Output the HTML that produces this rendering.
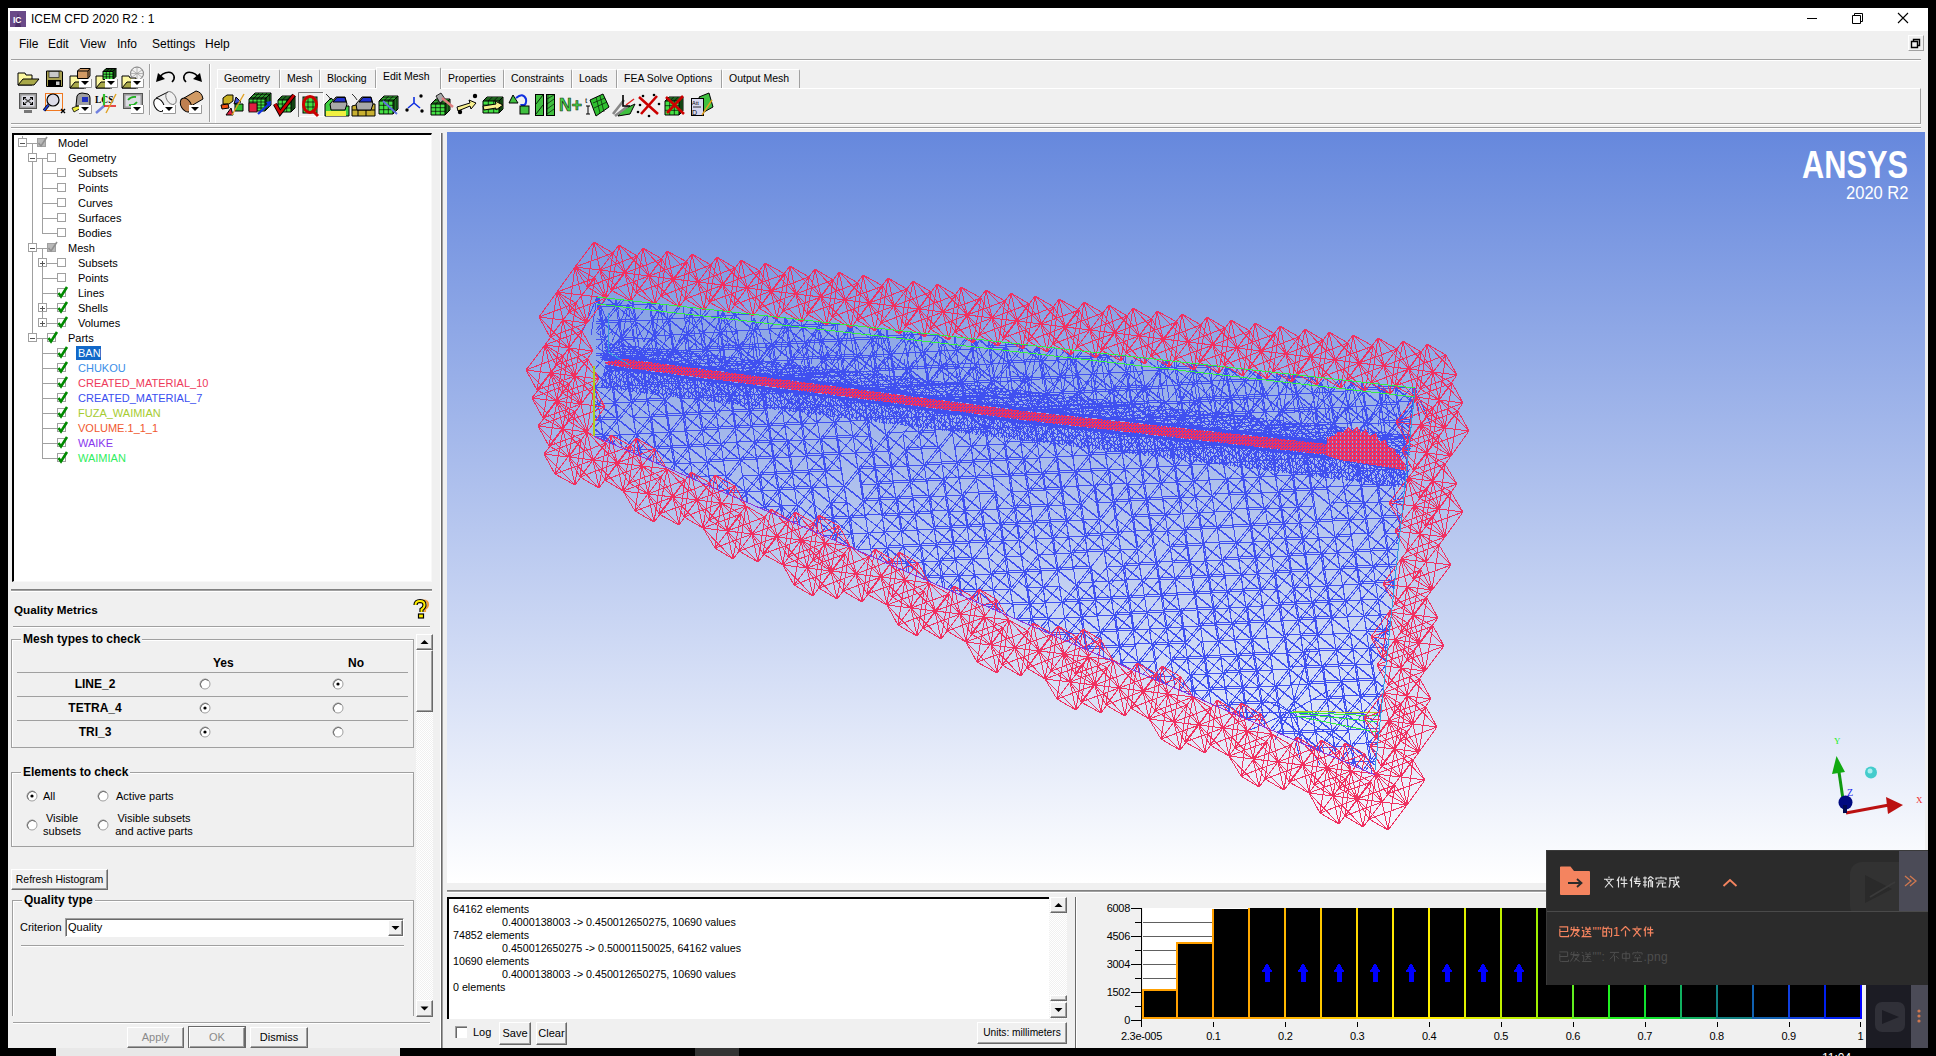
<!DOCTYPE html><html><head><meta charset="utf-8"><style>
*{margin:0;padding:0;box-sizing:border-box}
html,body{width:1936px;height:1056px;overflow:hidden;background:#000}
body{position:relative;font-family:"Liberation Sans",sans-serif;font-size:11px;color:#000}
div,span,svg{position:absolute;display:block}
.t{white-space:nowrap;line-height:13px}
</style></head><body><div style="left:8px;top:8px;width:1920px;height:1040px;background:#f0f0f0"></div><div style="left:8px;top:8px;width:1920px;height:23px;background:#fff"></div><svg style="left:10px;top:11px" width="16" height="16"><rect width="16" height="16" fill="#6a4a88"/><path d="M5 16L8 2L11 16Z" fill="#4a2e66"/><text x="3" y="12" font-family="Liberation Sans" font-weight="bold" font-size="8.5" fill="#fff">IC</text></svg><span class="t" style="left:31px;top:12px;font-size:12px;line-height:14px">ICEM CFD 2020 R2 : 1</span><div style="left:1807px;top:18px;width:10px;height:1px;background:#000"></div><svg style="left:1850px;top:12px" width="14" height="12"><path d="M2.5 3.5h8v8h-8z M4.5 3.5v-2h8v8h-2" fill="none" stroke="#000" stroke-width="1"/></svg><svg style="left:1897px;top:12px" width="12" height="12"><path d="M1 1L11 11M11 1L1 11" stroke="#000" stroke-width="1.1"/></svg><span class="t" style="left:19px;top:37px;font-size:12px;line-height:14px">File</span><span class="t" style="left:48px;top:37px;font-size:12px;line-height:14px">Edit</span><span class="t" style="left:80px;top:37px;font-size:12px;line-height:14px">View</span><span class="t" style="left:117px;top:37px;font-size:12px;line-height:14px">Info</span><span class="t" style="left:152px;top:37px;font-size:12px;line-height:14px">Settings</span><span class="t" style="left:205px;top:37px;font-size:12px;line-height:14px">Help</span><div style="left:1908px;top:35px;width:16px;height:16px;border-right:1px solid #a0a0a0;border-bottom:1px solid #a0a0a0;border-top:1px solid #fff;border-left:1px solid #fff"></div><svg style="left:1910px;top:37px" width="12" height="12"><path d="M1.5 4.5h6v6h-6z M3.5 4.5v-2h6v6h-2" fill="none" stroke="#000" stroke-width="1.4"/></svg><div style="left:11px;top:59px;width:1910px;height:1px;background:#a0a0a0"></div><div style="left:11px;top:60px;width:1910px;height:1px;background:#fff"></div><div style="left:215px;top:88px;width:1706px;height:36px;border-top:1px solid #fff;border-left:1px solid #fff;border-right:1px solid #a0a0a0;border-bottom:1px solid #a0a0a0"></div><div style="left:11px;top:123px;width:1910px;height:1px;background:#a0a0a0"></div><div style="left:11px;top:124px;width:1910px;height:1px;background:#fff"></div><div style="left:11px;top:127px;width:1910px;height:1px;background:#a0a0a0"></div><div style="left:11px;top:128px;width:1910px;height:1px;background:#fff"></div><div style="left:149px;top:64px;width:1px;height:24px;background:#a0a0a0"></div><div style="left:150px;top:64px;width:1px;height:24px;background:#fff"></div><div style="left:149px;top:90px;width:1px;height:25px;background:#a0a0a0"></div><div style="left:150px;top:90px;width:1px;height:25px;background:#fff"></div><div style="left:209px;top:64px;width:1px;height:58px;background:#a0a0a0"></div><div style="left:210px;top:64px;width:1px;height:58px;background:#fff"></div><div style="left:217px;top:69px;width:63px;height:19px;background:#f0f0f0;border-top:1px solid #fff;border-left:1px solid #fff;border-right:1px solid #a0a0a0;border-top-right-radius:2px"></div><span class="t" style="left:224px;top:72px;font-size:10.5px">Geometry</span><div style="left:280px;top:69px;width:40px;height:19px;background:#f0f0f0;border-top:1px solid #fff;border-left:1px solid #fff;border-right:1px solid #a0a0a0;border-top-right-radius:2px"></div><span class="t" style="left:287px;top:72px;font-size:10.5px">Mesh</span><div style="left:320px;top:69px;width:56px;height:19px;background:#f0f0f0;border-top:1px solid #fff;border-left:1px solid #fff;border-right:1px solid #a0a0a0;border-top-right-radius:2px"></div><span class="t" style="left:327px;top:72px;font-size:10.5px">Blocking</span><div style="left:376px;top:67px;width:65px;height:22px;background:#f0f0f0;border-top:1px solid #fff;border-left:1px solid #fff;border-right:1px solid #a0a0a0;border-top-right-radius:2px"></div><span class="t" style="left:383px;top:70px;font-size:10.5px">Edit Mesh</span><div style="left:441px;top:69px;width:63px;height:19px;background:#f0f0f0;border-top:1px solid #fff;border-left:1px solid #fff;border-right:1px solid #a0a0a0;border-top-right-radius:2px"></div><span class="t" style="left:448px;top:72px;font-size:10.5px">Properties</span><div style="left:504px;top:69px;width:68px;height:19px;background:#f0f0f0;border-top:1px solid #fff;border-left:1px solid #fff;border-right:1px solid #a0a0a0;border-top-right-radius:2px"></div><span class="t" style="left:511px;top:72px;font-size:10.5px">Constraints</span><div style="left:572px;top:69px;width:45px;height:19px;background:#f0f0f0;border-top:1px solid #fff;border-left:1px solid #fff;border-right:1px solid #a0a0a0;border-top-right-radius:2px"></div><span class="t" style="left:579px;top:72px;font-size:10.5px">Loads</span><div style="left:617px;top:69px;width:105px;height:19px;background:#f0f0f0;border-top:1px solid #fff;border-left:1px solid #fff;border-right:1px solid #a0a0a0;border-top-right-radius:2px"></div><span class="t" style="left:624px;top:72px;font-size:10.5px">FEA Solve Options</span><div style="left:722px;top:69px;width:78px;height:19px;background:#f0f0f0;border-top:1px solid #fff;border-left:1px solid #fff;border-right:1px solid #a0a0a0;border-top-right-radius:2px"></div><span class="t" style="left:729px;top:72px;font-size:10.5px">Output Mesh</span><svg style="left:0;top:60px" width="740" height="62" viewBox="0 60 740 62"><path d="M18.0 73.0L25.0 73.0L26.0 75.0L32.0 75.0L32.0 85.0L18.0 85.0Z" fill="#fbf7a0" stroke="#000" stroke-width="1" stroke-linejoin="round"/><path d="M18.0 85.0L23.0 79.0L39.0 79.0L34.0 85.0Z" fill="#a8a848" stroke="#000" stroke-width="1" stroke-linejoin="round"/><path d="M46.5 71.0L61.5 71.0L62.5 72.0L62.5 86.5L46.5 86.5Z" fill="#a8a050" stroke="#000" stroke-width="1" stroke-linejoin="round"/><rect x="49" y="71.5" width="10" height="6" fill="#c8c8c8" stroke="#000" stroke-width=".6"/><rect x="48" y="80" width="13" height="6" fill="#000"/><rect x="56" y="81.5" width="3.5" height="3.5" fill="#ccc"/><path d="M70.0 76.0L77.0 76.0L78.0 78.0L84.0 78.0L84.0 88.0L70.0 88.0Z" fill="#fbf7a0" stroke="#000" stroke-width="1" stroke-linejoin="round"/><path d="M70.0 88.0L75.0 82.0L91.0 82.0L86.0 88.0Z" fill="#a8a848" stroke="#000" stroke-width="1" stroke-linejoin="round"/><path d="M77.5 71.0L80.0 68.5L90.0 68.5L90.0 76.0L88.0 78.5L77.5 78.5Z" fill="#d29a64" stroke="#000" stroke-width="1" stroke-linejoin="round"/><path d="M77.5 71.0L88.0 71.0L90.0 68.5" fill="none" stroke="#000" stroke-width="1"/><path d="M88.0 71.0L88.0 78.5" fill="none" stroke="#000" stroke-width="1"/><rect x="79" y="79" width="12" height="8" fill="#fff"/><path d="M79 87.5H91.5V79" stroke="#999" fill="none"/><path d="M81 81H89L85 85Z" fill="#000"/><path d="M96.0 76.0L103.0 76.0L104.0 78.0L110.0 78.0L110.0 88.0L96.0 88.0Z" fill="#fbf7a0" stroke="#000" stroke-width="1" stroke-linejoin="round"/><path d="M96.0 88.0L101.0 82.0L117.0 82.0L112.0 88.0Z" fill="#a8a848" stroke="#000" stroke-width="1" stroke-linejoin="round"/><path d="M103.0 71.5L106.0 68.5L116.0 68.5L113.0 71.5Z" fill="#44e044" stroke="#000" stroke-width="1" stroke-linejoin="round"/><path d="M113.0 71.5L116.0 68.5L116.0 76.5L113.0 79.5Z" fill="#2a9a2a" stroke="#000" stroke-width="1" stroke-linejoin="round"/><path d="M103.0 71.5L113.0 71.5L113.0 79.5L103.0 79.5Z" fill="#44e044" stroke="#000" stroke-width="1" stroke-linejoin="round"/><path d="M106.3 71.5L106.3 79.5" fill="none" stroke="#000" stroke-width="0.7"/><path d="M103.0 74.2L113.0 74.2" fill="none" stroke="#000" stroke-width="0.7"/><path d="M104.0 70.5L114.0 70.5" fill="none" stroke="#000" stroke-width="0.7"/><path d="M106.3 71.5L109.3 68.5" fill="none" stroke="#000" stroke-width="0.7"/><path d="M114.0 70.5L114.0 78.5" fill="none" stroke="#000" stroke-width="0.7"/><path d="M109.7 71.5L109.7 79.5" fill="none" stroke="#000" stroke-width="0.7"/><path d="M103.0 76.8L113.0 76.8" fill="none" stroke="#000" stroke-width="0.7"/><path d="M105.0 69.5L115.0 69.5" fill="none" stroke="#000" stroke-width="0.7"/><path d="M109.7 71.5L112.7 68.5" fill="none" stroke="#000" stroke-width="0.7"/><path d="M115.0 69.5L115.0 77.5" fill="none" stroke="#000" stroke-width="0.7"/><rect x="105" y="79" width="12" height="8" fill="#fff"/><path d="M105 87.5H117.5V79" stroke="#999" fill="none"/><path d="M107 81H115L111 85Z" fill="#000"/><path d="M122.0 76.0L129.0 76.0L130.0 78.0L136.0 78.0L136.0 88.0L122.0 88.0Z" fill="#fbf7a0" stroke="#000" stroke-width="1" stroke-linejoin="round"/><path d="M122.0 88.0L127.0 82.0L143.0 82.0L138.0 88.0Z" fill="#a8a848" stroke="#000" stroke-width="1" stroke-linejoin="round"/><circle cx="137" cy="73.5" r="6.5" fill="none" stroke="#777"/><path d="M131 73.5H143M137 67V80M132 70L142 77M132 77L142 70" stroke="#999" stroke-width=".7"/><rect x="131" y="79" width="12" height="8" fill="#fff"/><path d="M131 87.5H143.5V79" stroke="#999" fill="none"/><path d="M133 81H141L137 85Z" fill="#000"/><path d="M159 80C160 73 171 69 174 76C175 79 173 81 172 82" stroke="#000" stroke-width="1.6" fill="none"/><path d="M156 82L158 73L165 79Z" fill="#000"/><path d="M199 80C198 73 187 69 184 76C183 79 185 81 186 82" stroke="#000" stroke-width="1.6" fill="none"/><path d="M202 82L200 73L193 79Z" fill="#000"/><rect x="19.5" y="93.5" width="17" height="15" fill="#9a9a9a" stroke="#555"/><rect x="21.5" y="95.5" width="13" height="11" fill="#dcdce4"/><path d="M24 98L32 104M32 98L24 104" stroke="#444" stroke-width="1.2"/><path d="M23 97h3v1h-2v2h-1zM33 97h-3v1h2v2h1zM23 105h3v-1h-2v-2h-1zM33 105h-3v-1h2v-2h1z" fill="#000"/><rect x="24" y="110" width="8" height="3" fill="#777"/><rect x="45.5" y="93.5" width="17" height="17" fill="none" stroke="#f07820"/><circle cx="53" cy="100" r="6" fill="#dcdce8" stroke="#000" stroke-width="1.2"/><path d="M48.5 105L44 110.5" stroke="#000" stroke-width="3"/><path d="M48.5 105L44 110.5" stroke="#2040e0" stroke-width="1.6"/><path d="M61 109l4 4M65 109l-4 4" stroke="#000" stroke-width="1.4"/><path d="M74 112L72 108L80 105L81 108Z" fill="#ecec40" stroke="#000" stroke-width=".8"/><path d="M76 106L77 96Q78 93 82 93L88 94Q90 95 90 98V106Z" fill="#a0a0a0" stroke="#000"/><rect x="82" y="97" width="6" height="5" fill="#2030c0"/><rect x="79" y="105" width="12" height="8" fill="#fff"/><path d="M79 113.5H91.5V105" stroke="#999" fill="none"/><path d="M81 107H89L85 111Z" fill="#000"/><text x="95" y="103" font-family="Liberation Serif" font-weight="bold" font-size="9.5">LCS</text><path d="M104 94V107" stroke="#30c030" stroke-width="2.2"/><path d="M96 113L104 106" stroke="#7080e0" stroke-width="2.4"/><path d="M104 106H116" stroke="#e02020" stroke-width="1.6"/><path d="M106 113L116 94" stroke="#e0a020" stroke-width="1.4"/><rect x="123.5" y="93.5" width="19" height="15" fill="#9a9a9a" stroke="#555"/><rect x="125.5" y="95.5" width="15" height="11" fill="#dcdce4"/><path d="M128 100Q131 96 136 97M137 102Q134 106 129 105" stroke="#20b020" stroke-width="1.8" fill="none"/><rect x="131" y="105" width="12" height="8" fill="#fff"/><path d="M131 113.5H143.5V105" stroke="#999" fill="none"/><path d="M133 107H141L137 111Z" fill="#000"/><ellipse cx="159" cy="105" rx="4.5" ry="7" transform="rotate(-30 159 105)" fill="#fff" stroke="#000"/><path d="M156 98L168 92M162 111L174 105" stroke="#000"/><ellipse cx="171" cy="98" rx="4.5" ry="7" transform="rotate(-30 171 98)" fill="none" stroke="#666" stroke-width=".8"/><rect x="163" y="105" width="12" height="8" fill="#fff"/><path d="M163 113.5H175.5V105" stroke="#999" fill="none"/><path d="M165 107H173L169 111Z" fill="#000"/><path d="M184 98L196 91Q202 92 203 99L191 106Z" fill="#d09a64" stroke="#000"/><ellipse cx="186" cy="105" rx="5" ry="7.5" transform="rotate(-30 186 105)" fill="#c08050" stroke="#000"/><rect x="189" y="105" width="12" height="8" fill="#fff"/><path d="M189 113.5H201.5V105" stroke="#999" fill="none"/><path d="M191 107H199L195 111Z" fill="#000"/><path d="M223.0 98.0L227.0 95.0L233.0 95.0L233.0 101.0L229.0 104.0L223.0 104.0Z" fill="#c8b020" stroke="#000" stroke-width="1" stroke-linejoin="round"/><path d="M221.0 105.0L228.0 104.0L229.0 108.0L222.0 109.0Z" fill="#f05010" stroke="#000" stroke-width="1" stroke-linejoin="round"/><path d="M226.0 115.0L231.0 108.0L233.0 115.0Z" fill="#e02040" stroke="#000" stroke-width="1" stroke-linejoin="round"/><path d="M236.0 97.0L241.0 102.0L234.0 104.0Z" fill="#4050d0" stroke="#000" stroke-width="1" stroke-linejoin="round"/><path d="M235.0 104.0L243.0 104.0L243.0 111.0L235.0 111.0Z" fill="#30c030" stroke="#000" stroke-width="1" stroke-linejoin="round"/><path d="M244.0 94.0L232.0 115.0" fill="none" stroke="#e0a020" stroke-width="1.4"/><path d="M249.0 99.0L255.0 93.0L271.0 93.0L265.0 99.0Z" fill="#44e044" stroke="#000" stroke-width="1" stroke-linejoin="round"/><path d="M265.0 99.0L271.0 93.0L271.0 105.0L265.0 111.0Z" fill="#2a9a2a" stroke="#000" stroke-width="1" stroke-linejoin="round"/><path d="M249.0 99.0L265.0 99.0L265.0 111.0L249.0 111.0Z" fill="#44e044" stroke="#000" stroke-width="1" stroke-linejoin="round"/><path d="M253.0 99.0L253.0 111.0" fill="none" stroke="#000" stroke-width="0.7"/><path d="M249.0 102.0L265.0 102.0" fill="none" stroke="#000" stroke-width="0.7"/><path d="M250.5 97.5L266.5 97.5" fill="none" stroke="#000" stroke-width="0.7"/><path d="M253.0 99.0L259.0 93.0" fill="none" stroke="#000" stroke-width="0.7"/><path d="M266.5 97.5L266.5 109.5" fill="none" stroke="#000" stroke-width="0.7"/><path d="M257.0 99.0L257.0 111.0" fill="none" stroke="#000" stroke-width="0.7"/><path d="M249.0 105.0L265.0 105.0" fill="none" stroke="#000" stroke-width="0.7"/><path d="M252.0 96.0L268.0 96.0" fill="none" stroke="#000" stroke-width="0.7"/><path d="M257.0 99.0L263.0 93.0" fill="none" stroke="#000" stroke-width="0.7"/><path d="M268.0 96.0L268.0 108.0" fill="none" stroke="#000" stroke-width="0.7"/><path d="M261.0 99.0L261.0 111.0" fill="none" stroke="#000" stroke-width="0.7"/><path d="M249.0 108.0L265.0 108.0" fill="none" stroke="#000" stroke-width="0.7"/><path d="M253.5 94.5L269.5 94.5" fill="none" stroke="#000" stroke-width="0.7"/><path d="M261.0 99.0L267.0 93.0" fill="none" stroke="#000" stroke-width="0.7"/><path d="M269.5 94.5L269.5 106.5" fill="none" stroke="#000" stroke-width="0.7"/><rect x="249" y="103" width="8" height="9" fill="#e02040" stroke="#000" stroke-width=".8"/><path d="M258 114L269 104" stroke="#1030e0" stroke-width="2.2"/><path d="M266 102L271 101L270 107Z" fill="#1030e0"/><path d="M278.0 100.0L282.0 96.0L295.0 96.0L291.0 100.0Z" fill="#44e044" stroke="#000" stroke-width="1" stroke-linejoin="round"/><path d="M291.0 100.0L295.0 96.0L295.0 108.0L291.0 112.0Z" fill="#2a9a2a" stroke="#000" stroke-width="1" stroke-linejoin="round"/><path d="M278.0 100.0L291.0 100.0L291.0 112.0L278.0 112.0Z" fill="#44e044" stroke="#000" stroke-width="1" stroke-linejoin="round"/><path d="M282.3 100.0L282.3 112.0" fill="none" stroke="#000" stroke-width="0.7"/><path d="M278.0 104.0L291.0 104.0" fill="none" stroke="#000" stroke-width="0.7"/><path d="M279.3 98.7L292.3 98.7" fill="none" stroke="#000" stroke-width="0.7"/><path d="M282.3 100.0L286.3 96.0" fill="none" stroke="#000" stroke-width="0.7"/><path d="M292.3 98.7L292.3 110.7" fill="none" stroke="#000" stroke-width="0.7"/><path d="M286.7 100.0L286.7 112.0" fill="none" stroke="#000" stroke-width="0.7"/><path d="M278.0 108.0L291.0 108.0" fill="none" stroke="#000" stroke-width="0.7"/><path d="M280.7 97.3L293.7 97.3" fill="none" stroke="#000" stroke-width="0.7"/><path d="M286.7 100.0L290.7 96.0" fill="none" stroke="#000" stroke-width="0.7"/><path d="M293.7 97.3L293.7 109.3" fill="none" stroke="#000" stroke-width="0.7"/><path d="M275.0 104.0L280.0 113.0L294.0 95.0" fill="none" stroke="#000" stroke-width="4.4"/><path d="M275.0 104.0L280.0 113.0L294.0 95.0" fill="none" stroke="#cc0000" stroke-width="2.6"/><path d="M298.5 117V92.5H323" stroke="#777" fill="none"/><path d="M299.5 116.5H323.5V92.5" stroke="#fff" fill="none"/><rect x="303" y="97" width="14" height="16" fill="#44e044" stroke="#000"/><path d="M303 102H317M303 107H317M308 97V113M313 97V113" stroke="#000" stroke-width=".7"/><ellipse cx="310" cy="104.5" rx="6.5" ry="8" fill="none" stroke="#cc0000" stroke-width="3"/><path d="M312 110L318 116" stroke="#cc0000" stroke-width="3"/><path d="M325.0 104.0L331.0 98.0L340.0 106.0L349.0 106.0L349.0 116.0L325.0 116.0Z" fill="#40d040" stroke="#000" stroke-width="1" stroke-linejoin="round"/><rect x="326" y="111" width="20" height="5" fill="#f0f040"/><path d="M330.0 104.0L336.0 97.0L345.0 97.0L347.0 104.0L345.0 110.0L331.0 110.0Z" fill="#a8a8a8" stroke="#000" stroke-width="1" stroke-linejoin="round"/><path d="M333.0 102.0L337.0 97.5L345.0 97.5L346.0 102.0Z" fill="#2030d0" stroke="#000" stroke-width="1" stroke-linejoin="round"/><path d="M326.0 94.0L329.0 97.0L331.0 100.0" fill="none" stroke="#000" stroke-width="0.8"/><path d="M352.0 106.0L360.0 104.0L375.0 104.0L375.0 116.0L352.0 116.0Z" fill="#c8b030" stroke="#000" stroke-width="1" stroke-linejoin="round"/><path d="M352.0 110.0L375.0 110.0" fill="none" stroke="#000" stroke-width="1"/><path d="M358.0 104.0L358.0 116.0" fill="none" stroke="#000" stroke-width="1"/><path d="M366.0 104.0L366.0 116.0" fill="none" stroke="#000" stroke-width="1"/><path d="M356.0 104.0L362.0 97.0L371.0 97.0L373.0 104.0L371.0 110.0L357.0 110.0Z" fill="#a8a8a8" stroke="#000" stroke-width="1" stroke-linejoin="round"/><path d="M359.0 102.0L363.0 97.5L371.0 97.5L372.0 102.0Z" fill="#2030d0" stroke="#000" stroke-width="1" stroke-linejoin="round"/><path d="M352.0 94.0L355.0 97.0L357.0 100.0" fill="none" stroke="#000" stroke-width="0.8"/><path d="M379.0 101.0L384.0 96.0L398.0 96.0L393.0 101.0Z" fill="#44e044" stroke="#000" stroke-width="1" stroke-linejoin="round"/><path d="M393.0 101.0L398.0 96.0L398.0 109.0L393.0 114.0Z" fill="#2a9a2a" stroke="#000" stroke-width="1" stroke-linejoin="round"/><path d="M379.0 101.0L393.0 101.0L393.0 114.0L379.0 114.0Z" fill="#44e044" stroke="#000" stroke-width="1" stroke-linejoin="round"/><path d="M383.7 101.0L383.7 114.0" fill="none" stroke="#000" stroke-width="0.7"/><path d="M379.0 105.3L393.0 105.3" fill="none" stroke="#000" stroke-width="0.7"/><path d="M380.7 99.3L394.7 99.3" fill="none" stroke="#000" stroke-width="0.7"/><path d="M383.7 101.0L388.7 96.0" fill="none" stroke="#000" stroke-width="0.7"/><path d="M394.7 99.3L394.7 112.3" fill="none" stroke="#000" stroke-width="0.7"/><path d="M388.3 101.0L388.3 114.0" fill="none" stroke="#000" stroke-width="0.7"/><path d="M379.0 109.7L393.0 109.7" fill="none" stroke="#000" stroke-width="0.7"/><path d="M382.3 97.7L396.3 97.7" fill="none" stroke="#000" stroke-width="0.7"/><path d="M388.3 101.0L393.3 96.0" fill="none" stroke="#000" stroke-width="0.7"/><path d="M396.3 97.7L396.3 110.7" fill="none" stroke="#000" stroke-width="0.7"/><path d="M383.0 101.0L397.0 114.0" fill="none" stroke="#6070e0" stroke-width="1.8"/><path d="M414 97V103L408 108M414 103L420 108" stroke="#1030e0" stroke-width="1.6" fill="none"/><circle cx="421" cy="96" r="1.7"/><circle cx="407" cy="110" r="1.7"/><circle cx="422" cy="111" r="1.7"/><path d="M431.0 104.0L436.0 99.0L450.0 99.0L445.0 104.0Z" fill="#44e044" stroke="#000" stroke-width="1" stroke-linejoin="round"/><path d="M445.0 104.0L450.0 99.0L450.0 110.0L445.0 115.0Z" fill="#2a9a2a" stroke="#000" stroke-width="1" stroke-linejoin="round"/><path d="M431.0 104.0L445.0 104.0L445.0 115.0L431.0 115.0Z" fill="#44e044" stroke="#000" stroke-width="1" stroke-linejoin="round"/><path d="M435.7 104.0L435.7 115.0" fill="none" stroke="#000" stroke-width="0.7"/><path d="M431.0 107.7L445.0 107.7" fill="none" stroke="#000" stroke-width="0.7"/><path d="M432.7 102.3L446.7 102.3" fill="none" stroke="#000" stroke-width="0.7"/><path d="M435.7 104.0L440.7 99.0" fill="none" stroke="#000" stroke-width="0.7"/><path d="M446.7 102.3L446.7 113.3" fill="none" stroke="#000" stroke-width="0.7"/><path d="M440.3 104.0L440.3 115.0" fill="none" stroke="#000" stroke-width="0.7"/><path d="M431.0 111.3L445.0 111.3" fill="none" stroke="#000" stroke-width="0.7"/><path d="M434.3 100.7L448.3 100.7" fill="none" stroke="#000" stroke-width="0.7"/><path d="M440.3 104.0L445.3 99.0" fill="none" stroke="#000" stroke-width="0.7"/><path d="M448.3 100.7L448.3 111.7" fill="none" stroke="#000" stroke-width="0.7"/><path d="M436 96L441 93L445 99L440 103Z" fill="#a8a8a8" stroke="#000" stroke-width=".8"/><path d="M442 98L453 107" stroke="#e08080" stroke-width="2.4"/><path d="M457.0 107.0L470.0 103.0L469.0 100.0L476.0 103.0L471.0 109.0L470.0 106.0L458.0 111.0Z" fill="#f8f090" stroke="#000" stroke-width="1" stroke-linejoin="round"/><circle cx="475" cy="96" r="2.2"/><circle cx="460" cy="112" r="2.2"/><path d="M483.0 101.0L487.0 97.0L503.0 97.0L499.0 101.0Z" fill="#44e044" stroke="#000" stroke-width="1" stroke-linejoin="round"/><path d="M499.0 101.0L503.0 97.0L503.0 109.0L499.0 113.0Z" fill="#2a9a2a" stroke="#000" stroke-width="1" stroke-linejoin="round"/><path d="M483.0 101.0L499.0 101.0L499.0 113.0L483.0 113.0Z" fill="#44e044" stroke="#000" stroke-width="1" stroke-linejoin="round"/><path d="M488.3 101.0L488.3 113.0" fill="none" stroke="#000" stroke-width="0.7"/><path d="M483.0 105.0L499.0 105.0" fill="none" stroke="#000" stroke-width="0.7"/><path d="M484.3 99.7L500.3 99.7" fill="none" stroke="#000" stroke-width="0.7"/><path d="M488.3 101.0L492.3 97.0" fill="none" stroke="#000" stroke-width="0.7"/><path d="M500.3 99.7L500.3 111.7" fill="none" stroke="#000" stroke-width="0.7"/><path d="M493.7 101.0L493.7 113.0" fill="none" stroke="#000" stroke-width="0.7"/><path d="M483.0 109.0L499.0 109.0" fill="none" stroke="#000" stroke-width="0.7"/><path d="M485.7 98.3L501.7 98.3" fill="none" stroke="#000" stroke-width="0.7"/><path d="M493.7 101.0L497.7 97.0" fill="none" stroke="#000" stroke-width="0.7"/><path d="M501.7 98.3L501.7 110.3" fill="none" stroke="#000" stroke-width="0.7"/><path d="M483.0 106.0L496.0 104.0L495.0 101.0L503.0 105.0L496.0 110.0L496.0 108.0L484.0 110.0Z" fill="#f8f090" stroke="#000" stroke-width="1" stroke-linejoin="round"/><path d="M509.0 103.0L513.0 95.0L518.0 103.0Z" fill="#40c040" stroke="#000" stroke-width="1" stroke-linejoin="round"/><path d="M516 98Q523 92 526 99Q527 104 523 106" stroke="#1030e0" stroke-width="2" fill="none"/><path d="M520 104L526 104L523 109Z" fill="#1030e0"/><rect x="520" y="106" width="9" height="8" fill="#40c040" stroke="#000"/><rect x="535.5" y="94.5" width="8" height="21" fill="#40c040" stroke="#000"/><path d="M536 104L543 95M536 114L543 105" stroke="#000" stroke-width=".8"/><rect x="546.5" y="94.5" width="8" height="21" fill="#40c040" stroke="#000"/><path d="M547 99L554 95M547 104L554 99M547 109L554 104M547 114L554 109M548 95L547 115" stroke="#000" stroke-width=".6"/><text x="559" y="110.5" font-family="Liberation Sans" font-weight="bold" font-size="18" fill="#44cc44" stroke="#113311" stroke-width=".6" textLength="23" lengthAdjust="spacingAndGlyphs">N+</text><text x="585" y="103" font-family="Liberation Serif" font-size="9">t</text><path d="M586 106H590M588 106V114M586 114H590" stroke="#000"/><path d="M590.0 100.0L603.0 94.0L609.0 107.0L596.0 116.0Z" fill="#30c030" stroke="#000" stroke-width="1" stroke-linejoin="round"/><path d="M593.0 103.0L605.0 98.0" fill="none" stroke="#000" stroke-width="0.6"/><path d="M594.0 108.0L607.0 102.0" fill="none" stroke="#000" stroke-width="0.6"/><path d="M596.0 97.0L600.0 113.0" fill="none" stroke="#000" stroke-width="0.6"/><path d="M600.0 96.0L604.0 112.0" fill="none" stroke="#000" stroke-width="0.6"/><path d="M622.0 110.0L635.0 104.0L630.0 114.0L618.0 116.0Z" fill="#40c040" stroke="#000" stroke-width="1" stroke-linejoin="round"/><path d="M613 114L624 100M615 116L628 106" stroke="#888" stroke-width="2.6"/><path d="M623 95V106H630" stroke="#000" stroke-width="1.6" fill="none"/><path d="M626 105L634 99" stroke="#e02020" stroke-width="1.4"/><path d="M639 97L658 114M657 96L641 114" stroke="#cc0000" stroke-width="2.6"/><circle cx="643" cy="96" r="1.3"/><circle cx="654" cy="95" r="1.3"/><circle cx="659" cy="104" r="1.3"/><circle cx="649" cy="116" r="1.3"/><circle cx="638" cy="112" r="1.3"/><circle cx="640" cy="105" r="1.3"/><path d="M665.0 101.0L669.0 97.0L683.0 97.0L679.0 101.0Z" fill="#44e044" stroke="#000" stroke-width="1" stroke-linejoin="round"/><path d="M679.0 101.0L683.0 97.0L683.0 111.0L679.0 115.0Z" fill="#2a9a2a" stroke="#000" stroke-width="1" stroke-linejoin="round"/><path d="M665.0 101.0L679.0 101.0L679.0 115.0L665.0 115.0Z" fill="#44e044" stroke="#000" stroke-width="1" stroke-linejoin="round"/><path d="M669.7 101.0L669.7 115.0" fill="none" stroke="#000" stroke-width="0.7"/><path d="M665.0 105.7L679.0 105.7" fill="none" stroke="#000" stroke-width="0.7"/><path d="M666.3 99.7L680.3 99.7" fill="none" stroke="#000" stroke-width="0.7"/><path d="M669.7 101.0L673.7 97.0" fill="none" stroke="#000" stroke-width="0.7"/><path d="M680.3 99.7L680.3 113.7" fill="none" stroke="#000" stroke-width="0.7"/><path d="M674.3 101.0L674.3 115.0" fill="none" stroke="#000" stroke-width="0.7"/><path d="M665.0 110.3L679.0 110.3" fill="none" stroke="#000" stroke-width="0.7"/><path d="M667.7 98.3L681.7 98.3" fill="none" stroke="#000" stroke-width="0.7"/><path d="M674.3 101.0L678.3 97.0" fill="none" stroke="#000" stroke-width="0.7"/><path d="M681.7 98.3L681.7 112.3" fill="none" stroke="#000" stroke-width="0.7"/><path d="M666 97L684 114M683 96L667 113" stroke="#cc0000" stroke-width="2.6"/><path d="M699.0 97.0L709.0 93.0L713.0 107.0L704.0 112.0Z" fill="#40c040" stroke="#000" stroke-width="1" stroke-linejoin="round"/><rect x="691.5" y="98.5" width="12" height="17" fill="#d8d8f0" stroke="#000"/><text x="692" y="105" font-family="Liberation Sans" font-size="5.5">Att</text><text x="692" y="115" font-family="Liberation Sans" font-size="7">D</text><path d="M693 107H701" stroke="#000" stroke-width=".8"/><path d="M702 115L712 100" stroke="#e0a020" stroke-width="1.4"/></svg><div style="left:12px;top:133px;width:420px;height:449px;background:#fff;border-top:2px solid #000;border-left:2px solid #000;border-right:1px solid #f8f8f8;border-bottom:1px solid #f8f8f8"></div><div style="left:440px;top:133px;width:1px;height:915px;background:#fff"></div><div style="left:441px;top:133px;width:1px;height:915px;background:#696969"></div><div style="left:442px;top:133px;width:1px;height:915px;background:#a0a0a0"></div><svg style="left:0;top:0" width="440" height="600" shape-rendering="crispEdges"><path d="M22.5 136V139" stroke="#a0a0a0"/><path d="M32.5 143V338" stroke="#a0a0a0"/><path d="M42.5 158V233" stroke="#a0a0a0"/><path d="M42.5 248V323" stroke="#a0a0a0"/><path d="M42.5 338V458" stroke="#a0a0a0"/><path d="M22 143.5H37" stroke="#a0a0a0"/><rect x="18.5" y="138.5" width="8" height="8" fill="#fff" stroke="#a0a0a0"/><path d="M20 143.5H25" stroke="#555"/><rect x="37.5" y="138.5" width="8" height="8" fill="#fff" stroke="#a0a0a0"/><rect x="38" y="139" width="7" height="7" fill="#b8b8b8"/><path d="M38.5 143L41 146L47 137" stroke="#909090" stroke-width="1.6" fill="none" shape-rendering="auto"/><path d="M32 158.5H47" stroke="#a0a0a0"/><rect x="28.5" y="153.5" width="8" height="8" fill="#fff" stroke="#a0a0a0"/><path d="M30 158.5H35" stroke="#555"/><rect x="47.5" y="153.5" width="8" height="8" fill="#fff" stroke="#a0a0a0"/><path d="M42 173.5H57" stroke="#a0a0a0"/><rect x="57.5" y="168.5" width="8" height="8" fill="#fff" stroke="#a0a0a0"/><path d="M42 188.5H57" stroke="#a0a0a0"/><rect x="57.5" y="183.5" width="8" height="8" fill="#fff" stroke="#a0a0a0"/><path d="M42 203.5H57" stroke="#a0a0a0"/><rect x="57.5" y="198.5" width="8" height="8" fill="#fff" stroke="#a0a0a0"/><path d="M42 218.5H57" stroke="#a0a0a0"/><rect x="57.5" y="213.5" width="8" height="8" fill="#fff" stroke="#a0a0a0"/><path d="M42 233.5H57" stroke="#a0a0a0"/><rect x="57.5" y="228.5" width="8" height="8" fill="#fff" stroke="#a0a0a0"/><path d="M32 248.5H47" stroke="#a0a0a0"/><rect x="28.5" y="243.5" width="8" height="8" fill="#fff" stroke="#a0a0a0"/><path d="M30 248.5H35" stroke="#555"/><rect x="47.5" y="243.5" width="8" height="8" fill="#fff" stroke="#a0a0a0"/><rect x="48" y="244" width="7" height="7" fill="#b8b8b8"/><path d="M48.5 248L51 251L57 242" stroke="#909090" stroke-width="1.6" fill="none" shape-rendering="auto"/><path d="M42 263.5H57" stroke="#a0a0a0"/><rect x="38.5" y="258.5" width="8" height="8" fill="#fff" stroke="#a0a0a0"/><path d="M40 263.5H45" stroke="#555"/><path d="M42.5 261V266" stroke="#555"/><rect x="57.5" y="258.5" width="8" height="8" fill="#fff" stroke="#a0a0a0"/><path d="M42 278.5H57" stroke="#a0a0a0"/><rect x="57.5" y="273.5" width="8" height="8" fill="#fff" stroke="#a0a0a0"/><path d="M42 293.5H57" stroke="#a0a0a0"/><rect x="57.5" y="288.5" width="8" height="8" fill="#fff" stroke="#a0a0a0"/><path d="M58.5 293L61 296.5L67 287" stroke="#008a00" stroke-width="2.6" fill="none" shape-rendering="auto"/><path d="M42 308.5H57" stroke="#a0a0a0"/><rect x="38.5" y="303.5" width="8" height="8" fill="#fff" stroke="#a0a0a0"/><path d="M40 308.5H45" stroke="#555"/><path d="M42.5 306V311" stroke="#555"/><rect x="57.5" y="303.5" width="8" height="8" fill="#fff" stroke="#a0a0a0"/><path d="M58.5 308L61 311.5L67 302" stroke="#008a00" stroke-width="2.6" fill="none" shape-rendering="auto"/><path d="M42 323.5H57" stroke="#a0a0a0"/><rect x="38.5" y="318.5" width="8" height="8" fill="#fff" stroke="#a0a0a0"/><path d="M40 323.5H45" stroke="#555"/><path d="M42.5 321V326" stroke="#555"/><rect x="57.5" y="318.5" width="8" height="8" fill="#fff" stroke="#a0a0a0"/><path d="M58.5 323L61 326.5L67 317" stroke="#008a00" stroke-width="2.6" fill="none" shape-rendering="auto"/><path d="M32 338.5H47" stroke="#a0a0a0"/><rect x="28.5" y="333.5" width="8" height="8" fill="#fff" stroke="#a0a0a0"/><path d="M30 338.5H35" stroke="#555"/><rect x="47.5" y="333.5" width="8" height="8" fill="#fff" stroke="#a0a0a0"/><path d="M48.5 338L51 341.5L57 332" stroke="#008a00" stroke-width="2.6" fill="none" shape-rendering="auto"/><path d="M42 353.5H57" stroke="#a0a0a0"/><rect x="57.5" y="348.5" width="8" height="8" fill="#fff" stroke="#a0a0a0"/><path d="M58.5 353L61 356.5L67 347" stroke="#008a00" stroke-width="2.6" fill="none" shape-rendering="auto"/><rect x="76" y="346" width="25" height="14" fill="#1268c8"/><path d="M42 368.5H57" stroke="#a0a0a0"/><rect x="57.5" y="363.5" width="8" height="8" fill="#fff" stroke="#a0a0a0"/><path d="M58.5 368L61 371.5L67 362" stroke="#008a00" stroke-width="2.6" fill="none" shape-rendering="auto"/><path d="M42 383.5H57" stroke="#a0a0a0"/><rect x="57.5" y="378.5" width="8" height="8" fill="#fff" stroke="#a0a0a0"/><path d="M58.5 383L61 386.5L67 377" stroke="#008a00" stroke-width="2.6" fill="none" shape-rendering="auto"/><path d="M42 398.5H57" stroke="#a0a0a0"/><rect x="57.5" y="393.5" width="8" height="8" fill="#fff" stroke="#a0a0a0"/><path d="M58.5 398L61 401.5L67 392" stroke="#008a00" stroke-width="2.6" fill="none" shape-rendering="auto"/><path d="M42 413.5H57" stroke="#a0a0a0"/><rect x="57.5" y="408.5" width="8" height="8" fill="#fff" stroke="#a0a0a0"/><path d="M58.5 413L61 416.5L67 407" stroke="#008a00" stroke-width="2.6" fill="none" shape-rendering="auto"/><path d="M42 428.5H57" stroke="#a0a0a0"/><rect x="57.5" y="423.5" width="8" height="8" fill="#fff" stroke="#a0a0a0"/><path d="M58.5 428L61 431.5L67 422" stroke="#008a00" stroke-width="2.6" fill="none" shape-rendering="auto"/><path d="M42 443.5H57" stroke="#a0a0a0"/><rect x="57.5" y="438.5" width="8" height="8" fill="#fff" stroke="#a0a0a0"/><path d="M58.5 443L61 446.5L67 437" stroke="#008a00" stroke-width="2.6" fill="none" shape-rendering="auto"/><path d="M42 458.5H57" stroke="#a0a0a0"/><rect x="57.5" y="453.5" width="8" height="8" fill="#fff" stroke="#a0a0a0"/><path d="M58.5 458L61 461.5L67 452" stroke="#008a00" stroke-width="2.6" fill="none" shape-rendering="auto"/></svg><span class="t" style="left:58px;top:136px;color:#000;font-size:11px;line-height:14px">Model</span><span class="t" style="left:68px;top:151px;color:#000;font-size:11px;line-height:14px">Geometry</span><span class="t" style="left:78px;top:166px;color:#000;font-size:11px;line-height:14px">Subsets</span><span class="t" style="left:78px;top:181px;color:#000;font-size:11px;line-height:14px">Points</span><span class="t" style="left:78px;top:196px;color:#000;font-size:11px;line-height:14px">Curves</span><span class="t" style="left:78px;top:211px;color:#000;font-size:11px;line-height:14px">Surfaces</span><span class="t" style="left:78px;top:226px;color:#000;font-size:11px;line-height:14px">Bodies</span><span class="t" style="left:68px;top:241px;color:#000;font-size:11px;line-height:14px">Mesh</span><span class="t" style="left:78px;top:256px;color:#000;font-size:11px;line-height:14px">Subsets</span><span class="t" style="left:78px;top:271px;color:#000;font-size:11px;line-height:14px">Points</span><span class="t" style="left:78px;top:286px;color:#000;font-size:11px;line-height:14px">Lines</span><span class="t" style="left:78px;top:301px;color:#000;font-size:11px;line-height:14px">Shells</span><span class="t" style="left:78px;top:316px;color:#000;font-size:11px;line-height:14px">Volumes</span><span class="t" style="left:68px;top:331px;color:#000;font-size:11px;line-height:14px">Parts</span><span class="t" style="left:78px;top:346px;color:#fff;font-size:11px;line-height:14px">BAN</span><span class="t" style="left:78px;top:361px;color:#3a8ee8;font-size:11px;line-height:14px">CHUKOU</span><span class="t" style="left:78px;top:376px;color:#ee3a5a;font-size:11px;line-height:14px">CREATED_MATERIAL_10</span><span class="t" style="left:78px;top:391px;color:#3a4ef0;font-size:11px;line-height:14px">CREATED_MATERIAL_7</span><span class="t" style="left:78px;top:406px;color:#a6cc30;font-size:11px;line-height:14px">FUZA_WAIMIAN</span><span class="t" style="left:78px;top:421px;color:#f0582e;font-size:11px;line-height:14px">VOLUME.1_1_1</span><span class="t" style="left:78px;top:436px;color:#8838ee;font-size:11px;line-height:14px">WAIKE</span><span class="t" style="left:78px;top:451px;color:#30ee60;font-size:11px;line-height:14px">WAIMIAN</span><div style="left:11px;top:589px;width:421px;height:1px;background:#808080"></div><div style="left:11px;top:590px;width:421px;height:1px;background:#a0a0a0"></div><div style="left:11px;top:591px;width:421px;height:1px;background:#fff"></div><span class="t" style="left:14px;top:603px;font-weight:bold;font-size:11.7px;line-height:14px">Quality Metrics</span><svg style="left:412px;top:598px" width="18" height="22"><path d="M6 5.5Q6.5 2.5 10 2.5Q14.5 2.5 14.5 6.5Q14.5 9 11.5 11V14" stroke="#f0a040" stroke-width="2.2" fill="none" transform="translate(1.5 0)"/><path d="M3.5 7Q3.5 3 8 3Q12.5 3 12.5 7Q12.5 9.5 9.5 11.5V14" stroke="#000" stroke-width="4.2" fill="none"/><path d="M3.5 7Q3.5 3 8 3Q12.5 3 12.5 7Q12.5 9.5 9.5 11.5V14" stroke="#ffee00" stroke-width="2" fill="none"/><rect x="6.5" y="16" width="5" height="4" fill="#ffee00" stroke="#000" stroke-width="1.2"/></svg><div style="left:13px;top:626px;width:417px;height:1px;background:#a0a0a0"></div><div style="left:13px;top:627px;width:417px;height:1px;background:#fff"></div><div style="left:11px;top:639px;width:403px;height:109px;border:1px solid #a0a0a0;box-shadow:1px 1px 0 #fff inset"></div><span class="t" style="left:21px;top:632px;font-weight:bold;font-size:12px;background:#f0f0f0;padding:0 2px;line-height:14px">Mesh types to check</span><span class="t" style="left:213px;top:656px;font-weight:bold;font-size:12px;line-height:14px">Yes</span><span class="t" style="left:348px;top:656px;font-weight:bold;font-size:12px;line-height:14px">No</span><div style="left:17px;top:672px;width:391px;height:1px;background:#a0a0a0"></div><span class="t" style="left:17px;top:677px;width:156px;text-align:center;font-weight:bold;font-size:12px;line-height:14px">LINE_2</span><svg style="left:199px;top:678px" width="12" height="12"><circle cx="6" cy="6" r="5" fill="#fff" stroke="#a0a0a0"/><path d="M2.5 9.5A5 5 0 0 1 9.5 2.5" stroke="#696969" fill="none"/></svg><svg style="left:332px;top:678px" width="12" height="12"><circle cx="6" cy="6" r="5" fill="#fff" stroke="#a0a0a0"/><path d="M2.5 9.5A5 5 0 0 1 9.5 2.5" stroke="#696969" fill="none"/><circle cx="6" cy="6" r="1.6" fill="#000"/></svg><div style="left:17px;top:696px;width:391px;height:1px;background:#a0a0a0"></div><span class="t" style="left:17px;top:701px;width:156px;text-align:center;font-weight:bold;font-size:12px;line-height:14px">TETRA_4</span><svg style="left:199px;top:702px" width="12" height="12"><circle cx="6" cy="6" r="5" fill="#fff" stroke="#a0a0a0"/><path d="M2.5 9.5A5 5 0 0 1 9.5 2.5" stroke="#696969" fill="none"/><circle cx="6" cy="6" r="1.6" fill="#000"/></svg><svg style="left:332px;top:702px" width="12" height="12"><circle cx="6" cy="6" r="5" fill="#fff" stroke="#a0a0a0"/><path d="M2.5 9.5A5 5 0 0 1 9.5 2.5" stroke="#696969" fill="none"/></svg><div style="left:17px;top:720px;width:391px;height:1px;background:#a0a0a0"></div><span class="t" style="left:17px;top:725px;width:156px;text-align:center;font-weight:bold;font-size:12px;line-height:14px">TRI_3</span><svg style="left:199px;top:726px" width="12" height="12"><circle cx="6" cy="6" r="5" fill="#fff" stroke="#a0a0a0"/><path d="M2.5 9.5A5 5 0 0 1 9.5 2.5" stroke="#696969" fill="none"/><circle cx="6" cy="6" r="1.6" fill="#000"/></svg><svg style="left:332px;top:726px" width="12" height="12"><circle cx="6" cy="6" r="5" fill="#fff" stroke="#a0a0a0"/><path d="M2.5 9.5A5 5 0 0 1 9.5 2.5" stroke="#696969" fill="none"/></svg><div style="left:11px;top:772px;width:403px;height:75px;border:1px solid #a0a0a0;box-shadow:1px 1px 0 #fff inset"></div><span class="t" style="left:21px;top:765px;font-weight:bold;font-size:12px;background:#f0f0f0;padding:0 2px;line-height:14px">Elements to check</span><svg style="left:26px;top:790px" width="12" height="12"><circle cx="6" cy="6" r="5" fill="#fff" stroke="#a0a0a0"/><path d="M2.5 9.5A5 5 0 0 1 9.5 2.5" stroke="#696969" fill="none"/><circle cx="6" cy="6" r="1.6" fill="#000"/></svg><span class="t" style="left:43px;top:790px;font-size:11px">All</span><svg style="left:97px;top:790px" width="12" height="12"><circle cx="6" cy="6" r="5" fill="#fff" stroke="#a0a0a0"/><path d="M2.5 9.5A5 5 0 0 1 9.5 2.5" stroke="#696969" fill="none"/></svg><span class="t" style="left:116px;top:790px;font-size:11px">Active parts</span><svg style="left:26px;top:819px" width="12" height="12"><circle cx="6" cy="6" r="5" fill="#fff" stroke="#a0a0a0"/><path d="M2.5 9.5A5 5 0 0 1 9.5 2.5" stroke="#696969" fill="none"/></svg><span class="t" style="left:40px;top:812px;width:44px;text-align:center;line-height:13px;white-space:normal">Visible<br>subsets</span><svg style="left:97px;top:819px" width="12" height="12"><circle cx="6" cy="6" r="5" fill="#fff" stroke="#a0a0a0"/><path d="M2.5 9.5A5 5 0 0 1 9.5 2.5" stroke="#696969" fill="none"/></svg><span class="t" style="left:112px;top:812px;width:84px;text-align:center;line-height:13px;white-space:normal">Visible subsets<br>and active parts</span><div style="left:416px;top:639px;width:17px;height:378px;background:repeating-conic-gradient(#f0f0f0 0 25%,#fff 0 50%) 0 0/2px 2px"></div><div style="left:416px;top:634px;width:17px;height:16px;background:#f0f0f0;border-top:1px solid #fff;border-left:1px solid #fff;border-right:1px solid #696969;border-bottom:1px solid #696969;box-shadow:inset -1px -1px 0 #a0a0a0"></div><svg style="left:0;top:0" width="1936" height="1056"><path d="M420.5 644.0L428.5 644.0L424.5 640.0Z" fill="#000"/></svg><div style="left:416px;top:650px;width:17px;height:62px;background:#f0f0f0;border-top:1px solid #fff;border-left:1px solid #fff;border-right:1px solid #696969;border-bottom:1px solid #696969;box-shadow:inset -1px -1px 0 #a0a0a0"></div><div style="left:416px;top:1000px;width:17px;height:17px;background:#f0f0f0;border-top:1px solid #fff;border-left:1px solid #fff;border-right:1px solid #696969;border-bottom:1px solid #696969;box-shadow:inset -1px -1px 0 #a0a0a0"></div><svg style="left:0;top:0" width="1936" height="1056"><path d="M420.5 1006.5L428.5 1006.5L424.5 1010.5Z" fill="#000"/></svg><div style="left:11px;top:869px;width:97px;height:21px;background:#f0f0f0;border-top:1px solid #fff;border-left:1px solid #fff;border-right:1px solid #696969;border-bottom:1px solid #696969;box-shadow:inset -1px -1px 0 #a0a0a0"></div><span class="t" style="left:11px;top:869px;width:97px;height:21px;line-height:21px;text-align:center;color:#000;font-size:10.5px">Refresh Histogram</span><div style="left:12px;top:900px;width:402px;height:117px;border:1px solid #a0a0a0;box-shadow:1px 1px 0 #fff inset"></div><span class="t" style="left:22px;top:893px;font-weight:bold;font-size:12px;background:#f0f0f0;padding:0 2px;line-height:14px">Quality type</span><div style="left:11px;top:1016px;width:405px;height:2px;background:#f0f0f0"></div><span class="t" style="left:20px;top:921px;font-size:11px">Criterion</span><div style="left:65px;top:918px;width:339px;height:19px;background:#fff;border-top:1px solid #a0a0a0;border-left:1px solid #a0a0a0;border-right:1px solid #fff;border-bottom:1px solid #fff;box-shadow:inset 1px 1px 0 #696969"></div><span class="t" style="left:68px;top:921px;font-size:11px">Quality</span><div style="left:388px;top:920px;width:15px;height:16px;background:#f0f0f0;border-top:1px solid #fff;border-left:1px solid #fff;border-right:1px solid #696969;border-bottom:1px solid #696969;box-shadow:inset -1px -1px 0 #a0a0a0"></div><svg style="left:0;top:0" width="1936" height="1056"><path d="M391.5 926.0L399.5 926.0L395.5 930.0Z" fill="#000"/></svg><div style="left:21px;top:945px;width:383px;height:1px;background:#a0a0a0"></div><div style="left:21px;top:946px;width:383px;height:1px;background:#fff"></div><div style="left:13px;top:1022px;width:417px;height:1px;background:#a0a0a0"></div><div style="left:13px;top:1023px;width:417px;height:1px;background:#fff"></div><div style="left:127px;top:1027px;width:57px;height:21px;background:#f0f0f0;border-top:1px solid #fff;border-left:1px solid #fff;border-right:1px solid #696969;border-bottom:1px solid #696969;box-shadow:inset -1px -1px 0 #a0a0a0"></div><span class="t" style="left:127px;top:1027px;width:57px;height:21px;line-height:21px;text-align:center;color:#8a8a8a;font-size:11px">Apply</span><div style="left:188px;top:1026px;width:58px;height:23px;border:1px solid #696969"></div><div style="left:189px;top:1027px;width:56px;height:21px;background:#f0f0f0;border-top:1px solid #fff;border-left:1px solid #fff;border-right:1px solid #696969;border-bottom:1px solid #696969;box-shadow:inset -1px -1px 0 #a0a0a0"></div><span class="t" style="left:189px;top:1027px;width:56px;height:21px;line-height:21px;text-align:center;color:#8a8a8a;font-size:11px">OK</span><div style="left:250px;top:1027px;width:58px;height:21px;background:#f0f0f0;border-top:1px solid #fff;border-left:1px solid #fff;border-right:1px solid #696969;border-bottom:1px solid #696969;box-shadow:inset -1px -1px 0 #a0a0a0"></div><span class="t" style="left:250px;top:1027px;width:58px;height:21px;line-height:21px;text-align:center;color:#000;font-size:11px">Dismiss</span><div style="left:447px;top:132px;width:1478px;height:751px;background:linear-gradient(#6688dd,#ffffff)"></div><svg style="left:447px;top:132px" width="1478" height="751" shape-rendering="crispEdges"><path d="M168 167l1 7M159 166l10 8M151 165l4 26M200 171l2 1M174 168l-5 6M185 169l3 20M169 174l19 15M169 174l-14 17M169 174l5 32M155 191l19 15M155 191l-6 7M155 191l5 32M149 214l11 9M219 173l2 14M202 172l19 15M202 172l-14 17M202 172l5 32M188 189l19 15M188 189l-14 17M188 189l5 32M174 206l19 15M174 206l-14 17M174 206l5 32M160 223l19 15M160 223l-12 14M160 223l5 32M148 242l17 13M148 253l3 19M148 269l3 3M253 176l1 9M242 175l12 10M232 174l-11 13M236 175l4 27M221 187l19 15M221 187l-14 17M221 187l5 32M207 204l19 15M207 204l-14 17M207 204l5 32M193 221l19 15M193 221l-14 17M193 221l5 32M179 238l19 15M179 238l-14 17M179 238l5 32M165 255l19 15M165 255l-14 17M165 255l5 32M151 272l19 15M151 272l-3 4M151 272l5 32M147 297l9 7M287 180l0 3M260 177l-6 8M270 178l3 22M254 185l19 15M254 185l-14 17M254 185l5 32M240 202l19 15M240 202l-14 17M240 202l5 32M226 219l19 15M226 219l-14 17M226 219l5 32M212 236l19 15M212 236l-14 17M212 236l5 32M198 253l19 15M198 253l-14 17M198 253l5 32M184 270l-14 17M184 270l5 32M170 287l19 15M170 287l-14 17M170 287l5 29M156 304l11 9M156 304l-2 3M156 304l1 4M289 180l-2 3M304 182l2 16M287 183l19 15M287 183l-14 17M287 183l5 32M273 200l19 15M273 200l-14 17M273 200l5 32M259 217l19 15M259 217l-14 17M259 217l5 32M245 234l19 15M245 234l-14 17M245 234l5 32M231 251l19 15M231 251l-14 17M231 251l5 32M217 268l19 15M217 268l-14 17M217 268l5 32M203 285l19 15M203 285l-14 17M203 285l5 32M189 302l19 15M189 302l-12 15M189 302l3 22M337 186l2 10M324 184l15 12M318 184l-12 14M320 184l5 29M306 198l19 15M306 198l-14 17M306 198l5 32M292 215l19 15M292 215l-14 17M292 215l5 32M278 232l19 15M278 232l-14 17M278 232l5 32M264 249l19 15M264 249l-14 17M264 249l5 32M250 266l19 15M250 266l-14 17M250 266l5 32M236 283l19 15M236 283l-14 17M236 283l5 32M222 300l19 15M222 300l-14 17M222 300l5 32M208 317l19 15M208 317l-8 10M208 317l2 14M371 190l1 4M366 189l6 5M347 187l-8 9M354 188l4 23M339 196l19 15M339 196l-14 17M339 196l5 32M325 213l19 15M325 213l-14 17M325 213l5 32M311 230l19 15M311 230l-14 17M311 230l5 32M297 247l19 15M297 247l-14 17M297 247l5 32M283 264l19 15M283 264l-14 17M283 264l5 32M269 281l19 15M269 281l-14 17M269 281l5 32M255 298l19 15M255 298l-14 17M255 298l5 32M241 315l19 15M241 315l-14 17M241 315l5 32M227 332l19 15M227 332l-4 5M227 332l1 7M375 190l-3 4M388 192l3 17M372 194l19 15M372 194l-14 17M372 194l5 32M358 211l19 15M358 211l-14 17M358 211l5 32M344 228l19 15M344 228l-14 17M344 228l5 32M330 245l19 15M330 245l-14 17M330 245l5 32M316 262l19 15M316 262l-14 17M316 262l5 32M302 279l19 15M302 279l-14 17M288 296l19 15M288 296l-14 17M288 296l5 32M274 313l19 15M274 313l-14 17M274 313l5 32M260 330l19 15M260 330l-14 17M260 330l4 25M422 195l2 12M407 194l17 13M404 193l-13 16M405 193l5 31M391 209l19 15M391 209l-14 17M391 209l5 32M377 226l19 15M377 226l-14 17M377 226l5 32M363 243l19 15M363 243l-14 17M363 243l5 32M349 260l19 15M349 260l-14 17M349 260l5 32M335 277l19 15M335 277l-14 17M335 277l5 32M321 294l19 15M321 294l-14 17M321 294l5 32M307 311l19 15M307 311l-14 17M307 311l5 32M293 328l-14 17M293 328l5 32M279 345l19 15M279 345l-10 12M279 345l3 17M456 199l1 6M448 198l9 7M433 196l-9 11M439 197l4 25M424 207l19 15M424 207l-14 17M424 207l5 32M410 224l19 15M410 224l-14 17M410 224l5 32M396 241l19 15M396 241l-14 17M396 241l5 32M382 258l19 15M382 258l-14 17M382 258l5 32M368 275l19 15M368 275l-14 17M368 275l5 32M354 292l19 15M354 292l5 32M340 309l19 15M340 309l-14 17M340 309l5 32M326 326l19 15M326 326l-14 17M326 326l5 32M312 343l19 15M312 343l-14 17M312 343l5 32M298 360l19 15M298 360l-6 7M298 360l2 10M461 200l-4 5M473 201l3 19M457 205l19 15M457 205l-14 17M457 205l5 32M443 222l19 15M443 222l-14 17M443 222l5 32M429 239l19 15M429 239l-14 17M429 239l5 32M415 256l19 15M415 256l-14 17M415 256l5 32M401 273l19 15M401 273l-14 17M401 273l5 32M387 290l19 15M387 290l-14 17M387 290l5 32M373 307l19 15M373 307l-14 17M373 307l5 32M359 324l19 15M359 324l-14 17M359 324l5 32M345 341l19 15M345 341l-14 17M345 341l5 32M331 358l19 15M331 358l-14 17M331 358l4 28M317 375l8 6M317 375l-2 2M317 375l0 3M507 205l2 13M490 203l19 15M490 203l-14 17M490 203l5 32M476 220l19 15M476 220l-14 17M476 220l5 32M462 237l19 15M462 237l-14 17M462 237l5 32M448 254l19 15M448 254l-14 17M448 254l5 32M434 271l19 15M434 271l-14 17M434 271l5 32M420 288l19 15M420 288l-14 17M420 288l5 32M406 305l19 15M406 305l-14 17M406 305l5 32M392 322l19 15M392 322l-14 17M392 322l5 32M378 339l19 15M378 339l-14 17M378 339l5 32M364 356l19 15M364 356l-14 17M364 356l5 32M350 373l19 15M350 373l-12 14M350 373l3 21M541 208l1 8M531 207l11 9M519 206l-10 12M524 207l4 26M509 218l19 15M509 218l-14 17M509 218l5 32M495 235l19 15M495 235l-14 17M495 235l5 32M481 252l19 15M481 252l-14 17M481 252l5 32M467 269l19 15M467 269l-14 17M467 269l5 32M453 286l19 15M453 286l-14 17M439 303l19 15M439 303l-14 17M439 303l5 32M425 320l19 15M425 320l-14 17M425 320l5 32M411 337l19 15M411 337l-14 17M411 337l5 32M397 354l19 15M397 354l-14 17M397 354l5 32M383 371l19 15M383 371l-14 17M383 371l5 32M369 388l19 15M369 388l-7 9M369 388l2 13M575 212l0 2M572 212l3 2M548 209l-6 7M558 210l3 21M542 216l19 15M542 216l-14 17M542 216l5 32M528 233l19 15M528 233l-14 17M514 250l19 15M514 250l-14 17M514 250l5 32M500 267l19 15M500 267l-14 17M486 284l19 15M486 284l-14 17M486 284l5 32M472 301l19 15M472 301l-14 17M472 301l5 32M458 318l19 15M458 318l-14 17M458 318l5 32M444 335l19 15M444 335l-14 17M444 335l5 32M430 352l19 15M430 352l-14 17M430 352l5 32M416 369l19 15M416 369l-14 17M416 369l5 32M402 386l19 15M402 386l-14 17M402 386l5 31M388 403l16 12M388 403l-3 4M388 403l1 6M576 212l-1 2M592 214l2 15M575 214l19 15M575 214l-14 17M575 214l5 32M561 231l19 15M561 231l-14 17M561 231l5 32M547 248l19 15M547 248l-14 17M547 248l5 32M533 265l19 15M533 265l-14 17M533 265l5 32M519 282l19 15M519 282l-14 17M519 282l5 32M505 299l19 15M505 299l-14 17M505 299l5 32M491 316l19 15M491 316l-14 17M477 333l19 15M477 333l-14 17M477 333l5 32M463 350l19 15M463 350l-14 17M463 350l5 32M449 367l19 15M449 367l-14 17M449 367l5 32M435 384l19 15M435 384l5 32M421 401l19 15M421 401l-13 16M421 401l4 24M626 218l1 9M614 217l13 10M605 216l-11 13M609 216l4 28M594 229l19 15M594 229l5 32M580 246l19 15M580 246l-14 17M580 246l5 32M566 263l19 15M566 263l-14 17M566 263l5 32M552 280l19 15M552 280l-14 17M538 297l-14 17M538 297l5 32M524 314l19 15M524 314l-14 17M524 314l5 32M510 331l19 15M510 331l-14 17M510 331l5 32M496 348l19 15M496 348l-14 17M496 348l5 32M482 365l19 15M482 365l-14 17M482 365l5 32M468 382l19 15M468 382l-14 17M468 382l5 32M454 399l19 15M454 399l-14 17M454 399l5 32M440 416l19 15M440 416l-9 11M440 416l3 16M659 222l1 3M655 221l5 4M634 219l-7 8M643 220l3 22M627 227l19 15M627 227l-14 17M627 227l5 32M613 244l19 15M613 244l-14 17M613 244l5 32M599 261l19 15M599 261l-14 17M599 261l5 32M585 278l19 15M585 278l-14 17M585 278l5 32M571 295l19 15M571 295l-14 17M571 295l5 32M557 312l19 15M557 312l5 32M543 329l19 15M543 329l-14 17M543 329l5 32M529 346l19 15M529 346l-14 17M515 363l19 15M515 363l-14 17M515 363l5 32M501 380l19 15M501 380l-14 17M501 380l5 32M487 397l19 15M487 397l-14 17M487 397l5 32M473 414l19 15M473 414l-14 17M473 414l5 32M459 431l19 15M459 431l1 9M662 222l-2 3M676 224l3 16M660 225l19 15M660 225l-14 17M660 225l5 32M646 242l19 15M646 242l-14 17M646 242l5 32M632 259l19 15M632 259l-14 17M632 259l5 32M618 276l19 15M618 276l-14 17M618 276l5 32M604 293l19 15M604 293l-14 17M604 293l5 32M590 310l19 15M590 310l-14 17M590 310l5 32M576 327l19 15M576 327l-14 17M576 327l5 32M562 344l19 15M562 344l5 32M548 361l19 15M548 361l-14 17M548 361l5 32M534 378l19 15M534 378l-14 17M534 378l5 32M520 395l19 15M520 395l-14 17M520 395l5 32M506 412l19 15M506 412l-14 17M506 412l5 32M492 429l-14 17M492 429l4 27M478 446l5 4M478 446l-1 1M478 446l0 2M710 227l2 11M697 226l15 12M691 225l-12 15M693 225l5 30M679 240l19 15M679 240l-14 17M679 240l5 32M665 257l19 15M665 257l-14 17M665 257l5 32M651 274l19 15M651 274l-14 17M651 274l5 32M637 291l-14 17M637 291l5 32M623 308l19 15M623 308l-14 17M623 308l5 32M609 325l19 15M609 325l-14 17M609 325l5 32M595 342l19 15M595 342l-14 17M581 359l19 15M581 359l-14 17M581 359l5 32M567 376l19 15M567 376l-14 17M567 376l5 32M553 393l19 15M553 393l-14 17M553 393l5 32M539 410l19 15M539 410l-14 17M539 410l5 32M525 427l19 15M525 427l-14 17M525 427l5 32M511 444l19 15M511 444l-11 13M511 444l3 19M744 231l1 5M738 230l7 6M720 228l-8 10M727 229l4 24M712 238l19 15M712 238l-14 17M712 238l5 32M698 255l19 15M698 255l-14 17M698 255l5 32M684 272l19 15M684 272l-14 17M684 272l5 32M670 289l19 15M670 289l-14 17M670 289l5 32M656 306l19 15M656 306l-14 17M656 306l5 32M642 323l19 15M642 323l-14 17M642 323l5 32M628 340l19 15M628 340l-14 17M628 340l5 32M614 357l19 15M614 357l-14 17M614 357l5 32M600 374l-14 17M600 374l5 32M586 391l19 15M586 391l-14 17M586 391l5 32M572 408l19 15M572 408l-14 17M572 408l5 32M558 425l19 15M558 425l-14 17M544 442l19 15M544 442l-14 17M530 459l19 15M530 459l-7 8M530 459l2 12M749 232l-4 4M761 233l3 18M745 236l19 15M745 236l-14 17M745 236l5 32M731 253l19 15M731 253l5 32M717 270l19 15M717 270l-14 17M717 270l5 32M703 287l19 15M703 287l-14 17M703 287l5 32M689 304l-14 17M689 304l5 32M675 321l-14 17M675 321l5 32M661 338l19 15M661 338l-14 17M661 338l5 32M647 355l19 15M647 355l-14 17M647 355l5 32M633 372l19 15M633 372l-14 17M633 372l5 32M619 389l19 15M619 389l-14 17M619 389l5 32M605 406l19 15M605 406l5 32M591 423l19 15M591 423l-14 17M591 423l5 32M577 440l19 15M577 440l-14 17M577 440l5 32M563 457l19 15M563 457l-14 17M563 457l5 30M549 474l13 10M549 474l-3 3M549 474l1 5M795 237l2 12M779 235l18 14M777 235l-13 16M778 235l5 31M764 251l19 15M764 251l5 32M750 268l19 15M750 268l-14 17M750 268l5 32M736 285l19 15M736 285l-14 17M736 285l5 32M722 302l19 15M722 302l-14 17M722 302l5 32M708 319l19 15M708 319l-14 17M708 319l5 32M694 336l19 15M694 336l-14 17M694 336l5 32M680 353l19 15M680 353l-14 17M680 353l5 32M666 370l19 15M666 370l-14 17M666 370l5 32M652 387l19 15M652 387l-14 17M652 387l5 32M638 404l19 15M638 404l-14 17M638 404l5 32M624 421l19 15M624 421l-14 17M624 421l5 32M610 438l19 15M610 438l-14 17M610 438l5 32M596 455l19 15M596 455l-14 17M596 455l5 32M582 472l19 15M582 472l-13 15M582 472l3 22M829 241l1 6M821 240l9 7M806 238l-9 11M812 239l4 25M797 249l19 15M797 249l-14 17M797 249l5 32M783 266l19 15M783 266l-14 17M783 266l5 32M769 283l19 15M769 283l-14 17M769 283l5 32M755 300l19 15M755 300l-14 17M755 300l5 32M741 317l19 15M741 317l-14 17M741 317l5 32M727 334l19 15M727 334l-14 17M727 334l5 32M713 351l19 15M713 351l-14 17M713 351l5 32M699 368l19 15M699 368l-14 17M699 368l5 32M685 385l19 15M685 385l-14 17M685 385l5 32M671 402l19 15M671 402l-14 17M671 402l5 32M657 419l19 15M657 419l-14 17M657 419l5 32M643 436l19 15M643 436l-14 17M643 436l5 32M629 453l19 15M629 453l-14 17M629 453l5 32M615 470l19 15M615 470l-14 17M615 470l5 32M601 487l19 15M601 487l-9 10M601 487l2 15M835 241l-5 6M846 242l3 20M830 247l19 15M830 247l-14 17M830 247l5 32M816 264l19 15M816 264l-14 17M816 264l5 32M802 281l19 15M802 281l-14 17M802 281l5 32M788 298l19 15M788 298l-14 17M788 298l5 32M774 315l19 15M774 315l-14 17M774 315l5 32M760 332l19 15M760 332l-14 17M760 332l5 32M746 349l19 15M746 349l-14 17M746 349l5 32M732 366l19 15M732 366l-14 17M718 383l19 15M718 383l-14 17M718 383l5 32M704 400l19 15M704 400l-14 17M704 400l5 32M690 417l-14 17M690 417l5 32M676 434l19 15M676 434l-14 17M676 434l5 32M662 451l-14 17M662 451l5 32M648 468l19 15M648 468l-14 17M648 468l5 32M634 485l19 15M634 485l-14 17M634 485l5 32M620 502l19 15M620 502l-4 5M620 502l1 8M880 246l2 14M863 245l19 15M863 245l-14 17M863 245l5 32M849 262l19 15M849 262l-14 17M849 262l5 32M835 279l19 15M835 279l-14 17M835 279l5 32M821 296l19 15M821 296l-14 17M807 313l19 15M807 313l-14 17M807 313l5 32M793 330l19 15M793 330l5 32M779 347l19 15M779 347l-14 17M765 364l19 15M765 364l-14 17M765 364l5 32M751 381l19 15M751 381l-14 17M751 381l5 32M737 398l19 15M737 398l-14 17M737 398l5 32M723 415l19 15M723 415l-14 17M723 415l5 32M709 432l19 15M709 432l-14 17M709 432l5 32M695 449l19 15M695 449l-14 17M695 449l5 32M681 466l19 15M681 466l-14 17M681 466l5 32M667 483l19 15M667 483l-14 17M667 483l5 32M653 500l19 15M653 500l-14 17M653 500l4 25M639 517l2 1M914 250l1 8M903 249l12 9M892 248l-10 12M897 248l4 27M882 260l19 15M882 260l-14 17M882 260l5 32M868 277l19 15M868 277l5 32M854 294l19 15M854 294l-14 17M854 294l5 32M840 311l19 15M840 311l-14 17M840 311l5 32M826 328l19 15M826 328l-14 17M826 328l5 32M812 345l19 15M812 345l-14 17M812 345l5 32M798 362l19 15M798 362l-14 17M798 362l5 32M784 379l19 15M784 379l-14 17M784 379l5 32M770 396l19 15M770 396l-14 17M770 396l5 32M756 413l19 15M756 413l-14 17M756 413l5 32M742 430l19 15M742 430l-14 17M742 430l5 32M728 447l-14 17M728 447l5 32M714 464l19 15M714 464l-14 17M714 464l5 32M700 481l19 15M700 481l-14 17M700 481l5 32M686 498l19 15M686 498l-14 17M686 498l5 32M672 515l19 15M672 515l-10 12M672 515l3 18M948 254l0 2M945 253l3 3M921 251l-6 7M931 252l3 21M915 258l19 15M915 258l-14 17M915 258l5 32M901 275l19 15M901 275l-14 17M901 275l5 32M887 292l19 15M887 292l-14 17M887 292l5 32M873 309l19 15M873 309l-14 17M873 309l5 32M859 326l19 15M859 326l-14 17M859 326l5 32M845 343l19 15M845 343l-14 17M845 343l5 32M831 360l19 15M831 360l-14 17M831 360l5 32M817 377l19 15M817 377l-14 17M803 394l19 15M803 394l-14 17M803 394l5 32M789 411l19 15M789 411l-14 17M789 411l5 32M775 428l19 15M775 428l-14 17M775 428l5 32M761 445l-14 17M761 445l5 32M747 462l19 15M733 479l19 15M733 479l-14 17M733 479l5 32M719 496l19 15M719 496l-14 17M719 496l5 32M705 513l-14 17M705 513l5 32M691 530l19 15M691 530l-6 7M691 530l2 11M950 254l-2 2M965 256l2 13M948 256l18 15M948 256l-14 17M948 256l5 32M934 273l19 15M934 273l-14 17M934 273l5 32M920 290l19 15M920 290l-14 17M920 290l5 32M906 307l19 15M906 307l-14 17M906 307l5 32M892 324l19 15M892 324l-14 17M892 324l5 32M878 341l-14 17M878 341l5 32M864 358l19 15M864 358l-14 17M864 358l5 32M850 375l19 15M850 375l-14 17M850 375l5 32M836 392l19 15M836 392l-14 17M836 392l5 32M822 409l19 15M822 409l-14 17M822 409l5 32M808 426l19 15M808 426l-14 17M808 426l5 32M794 443l19 15M794 443l-14 17M794 443l5 32M780 460l19 15M780 460l-14 17M780 460l5 32M766 477l19 15M766 477l-14 17M766 477l5 32M752 494l19 15M752 494l-14 17M738 511l19 15M738 511l-14 17M738 511l5 32M724 528l19 15M724 528l-14 17M724 528l4 28M710 545l9 7M710 545l-2 2M710 545l1 4M966 272l-13 16M953 288l11 9M953 288l-14 17M939 305l19 15M939 305l5 32M925 322l19 15M925 322l-14 17M925 322l5 32M911 339l19 15M911 339l-14 17M911 339l5 32M897 356l19 15M897 356l-14 17M897 356l5 32M883 373l19 15M883 373l-14 17M883 373l5 32M869 390l19 15M869 390l-14 17M869 390l5 32M855 407l19 15M855 407l-14 17M855 407l5 32M841 424l19 15M841 424l-14 17M841 424l5 32M827 441l19 15M827 441l-14 17M827 441l5 32M813 458l19 15M813 458l-14 17M813 458l5 32M799 475l19 15M799 475l-14 17M799 475l5 32M785 492l19 15M785 492l-14 17M785 492l5 32M771 509l19 15M771 509l-14 17M771 509l5 32M757 526l-14 17M757 526l5 32M743 543l19 15M743 543l-12 15M743 543l3 21M962 315l-4 5M958 320l3 2M958 320l-14 17M958 320l2 13M944 337l14 11M944 337l-14 17M944 337l5 32M930 354l19 15M930 354l5 32M916 371l19 15M916 371l-14 17M916 371l5 32M902 388l19 15M902 388l-14 17M902 388l5 32M888 405l19 15M888 405l-14 17M888 405l5 32M874 422l19 15M874 422l-14 17M874 422l5 32M860 439l19 15M860 439l-14 17M860 439l5 32M846 456l19 15M846 456l-14 17M846 456l5 32M832 473l19 15M832 473l-14 17M832 473l5 32M818 490l19 15M818 490l-14 17M818 490l5 32M804 507l19 15M804 507l-14 17M804 507l5 32M790 524l19 15M790 524l-14 17M790 524l5 32M776 541l-14 17M776 541l5 32M762 558l19 15M762 558l-8 10M762 558l2 14M957 359l-8 10M949 369l7 5M949 369l-14 17M949 369l4 28M935 386l18 14M935 386l-14 17M935 386l5 32M921 403l19 15M921 403l-14 17M921 403l5 32M907 420l19 15M907 420l-14 17M907 420l5 32M893 437l19 15M893 437l-14 17M893 437l5 32M879 454l19 15M879 454l-14 17M879 454l5 32M865 471l19 15M865 471l-14 17M865 471l5 32M851 488l19 15M851 488l-14 17M851 488l5 32M837 505l19 15M837 505l-14 17M837 505l5 32M823 522l19 15M823 522l-14 17M823 522l5 32M809 539l19 15M809 539l-14 17M809 539l5 32M795 556l19 15M795 556l-14 17M795 556l5 31M781 573l17 14M781 573l-4 5M781 573l1 7M953 402l-13 16M940 418l10 8M940 418l-14 17M940 418l5 32M926 435l19 15M926 435l-14 17M926 435l5 32M912 452l19 15M912 452l-14 17M912 452l5 32M898 469l19 15M898 469l-14 17M898 469l5 32M884 486l19 15M884 486l-14 17M884 486l5 32M870 503l19 15M870 503l-14 17M870 503l5 32M856 520l19 15M856 520l-14 17M856 520l5 32M842 537l19 15M842 537l-14 17M842 537l5 32M828 554l19 15M828 554l-14 17M828 554l5 32M814 571l19 15M814 571l-14 17M814 571l4 24M948 446l-3 4M945 450l3 2M945 450l-14 17M945 450l2 11M931 467l14 11M931 467l-14 17M931 467l5 32M917 484l19 15M917 484l-14 17M917 484l5 32M903 501l19 15M903 501l-14 17M903 501l5 32M889 518l19 15M889 518l-14 17M889 518l5 32M875 535l19 15M875 535l-14 17M875 535l5 32M861 552l19 15M861 552l-14 17M861 552l5 32M847 569l19 15M847 569l-14 17M847 569l5 32M833 586l19 15M833 586l-10 12M833 586l3 17M944 489l-8 10M936 499l-14 17M936 499l4 27M922 516l18 14M922 516l-14 17M922 516l5 32M908 533l19 15M908 533l-14 17M908 533l5 32M894 550l19 15M894 550l-14 17M894 550l5 32M880 567l19 15M880 567l-14 17M880 567l5 32M866 584l19 15M866 584l-14 17M866 584l5 32M852 601l19 15M852 601l-5 7M852 601l2 10M939 533l-12 15M927 548l10 8M927 548l-14 17M927 548l5 32M913 565l-14 17M913 565l5 32M899 582l19 15M899 582l-14 17M899 582l5 32M885 599l19 15M885 599l-14 17M885 599l4 27M871 616l6 5M871 616l-1 2M871 616l0 2M935 577l-3 3M932 580l2 2M932 580l-14 17M932 580l2 10M918 597l-14 17M904 614l19 15M904 614l-11 14M904 614l3 20M930 620l-7 9M923 629l6 5M923 629l-7 9M923 629l2 13M150 175l19 -1M149 191l6 0M169 174l33 -2M188 189l33 -2M148 256l17 -1M148 272l3 0M221 187l33 -2M207 204l33 -2M165 255l33 -2M147 288l23 -1M254 185l33 -2M240 202l33 -2M226 219l33 -2M198 253l33 -2M287 183l16 -1M273 200l33 -2M181 319l27 -2M278 232l33 -2M222 300l33 -2M208 317l33 -2M325 213l33 -2M311 230l33 -2M297 247l33 -2M283 264l33 -2M241 315l33 -2M227 332l33 -2M372 194l25 -2M358 211l33 -2M316 262l33 -2M288 296l33 -2M260 330l33 -2M307 311l33 -2M293 328l33 -2M279 361l19 -1M410 224l33 -2M340 309l33 -2M326 326l33 -2M312 343l33 -2M298 360l33 -2M443 222l33 -2M429 239l33 -2M387 290l33 -2M373 307l33 -2M359 324l33 -2M345 341l33 -2M331 358l33 -2M317 375l33 -2M476 220l33 -2M462 237l33 -2M434 271l33 -2M364 356l33 -2M481 252l33 -2M453 286l33 -2M411 337l33 -2M369 388l33 -2M542 216l33 -2M528 233l33 -2M514 250l33 -2M486 284l33 -2M444 335l33 -2M430 352l33 -2M388 403l33 -2M561 231l33 -2M505 299l33 -2M463 350l33 -2M449 367l33 -2M435 384l33 -2M421 401l33 -2M566 263l33 -2M538 297l33 -2M524 314l33 -2M454 399l33 -2M440 416l33 -2M627 227l33 -2M613 244l33 -2M599 261l33 -2M585 278l33 -2M571 295l33 -2M543 329l33 -2M529 346l33 -2M501 380l33 -2M473 414l33 -2M459 431l33 -2M475 446l3 0M660 225l19 -1M632 259l33 -2M590 310l33 -2M576 327l33 -2M562 344l33 -2M534 378l33 -2M478 446l33 -2M665 257l33 -2M651 274l33 -2M581 359l33 -2M567 376l33 -2M553 393l33 -2M712 238l33 -2M698 255l33 -2M628 340l33 -2M600 374l33 -2M586 391l33 -2M530 459l33 -2M540 475l9 -1M745 236l28 -2M731 253l33 -2M703 287l33 -2M689 304l33 -2M675 321l33 -2M605 406l33 -2M591 423l33 -2M577 440l33 -2M708 319l33 -2M666 370l33 -2M624 421l33 -2M610 438l33 -2M573 489l28 -2M769 283l33 -2M741 317l33 -2M713 351l33 -2M685 385l33 -2M657 419l33 -2M615 470l33 -2M601 487l33 -2M605 503l15 -1M760 332l33 -2M746 349l33 -2M732 366l33 -2M718 383l33 -2M704 400l33 -2M648 468l33 -2M634 485l33 -2M849 262l33 -2M835 279l33 -2M821 296l33 -2M793 330l33 -2M779 347l33 -2M751 381l33 -2M723 415l33 -2M681 466l33 -2M667 483l33 -2M653 500l33 -2M639 517l33 -2M882 260l33 -2M854 294l33 -2M826 328l33 -2M812 345l33 -2M798 362l33 -2M742 430l33 -2M728 447l33 -2M901 275l33 -2M887 292l33 -2M873 309l33 -2M859 326l33 -2M845 343l33 -2M831 360l33 -2M817 377l33 -2M803 394l33 -2M761 445l33 -2M747 462l33 -2M733 479l33 -2M719 496l33 -2M703 545l7 0M948 256l13 -1M906 307l33 -2M836 392l33 -2M808 426l33 -2M780 460l33 -2M752 494l33 -2M953 288l12 -1M939 305l24 -1M925 322l33 -2M911 339l33 -2M869 390l33 -2M855 407l33 -2M841 424l33 -2M827 441l33 -2M799 475l33 -2M785 492l33 -2M771 509l33 -2M743 543l33 -2M736 560l26 -2M958 320l3 0M944 337l16 -1M930 354l28 -2M916 371l33 -2M902 388l33 -2M874 422l33 -2M846 456l33 -2M804 507l33 -2M776 541l33 -2M762 558l33 -2M949 369l7 0M935 386l20 -1M907 420l33 -2M893 437l33 -2M865 471l33 -2M851 488l33 -2M823 522l33 -2M781 573l33 -2M912 452l33 -2M898 469l33 -2M884 486l33 -2M945 450l3 0M917 484l28 -2M889 518l33 -2M875 535l33 -2M861 552l33 -2M834 602l18 -1M936 499l7 0M852 601l33 -2M866 616l5 0M913 565l23 -1M885 599l33 -2M871 616l33 -2M918 597l15 -1M160 166l11 9M150 186l7 6M201 171l3 2M177 168l-6 7M171 175l-14 17M157 192l19 15M157 192l-8 9M149 214l13 10M206 171l-2 2M204 173l19 15M190 190l19 15M190 190l-14 17M176 207l19 15M176 207l-14 17M162 224l19 15M148 241l19 15M148 269l5 4M242 175l14 11M234 174l-11 14M223 188l19 15M223 188l-14 17M209 205l-14 17M195 222l19 15M195 222l-14 17M181 239l19 15M181 239l-14 17M167 256l19 15M153 273l19 15M153 273l-5 7M147 296l11 9M284 180l5 4M263 178l-7 8M256 186l19 15M256 186l-14 17M242 203l19 15M242 203l-14 17M228 220l19 15M228 220l-14 17M214 237l19 15M214 237l-14 17M200 254l19 15M200 254l-14 17M186 271l19 15M186 271l-14 17M172 288l19 15M172 288l-14 17M158 305l11 8M158 305l-2 3M292 181l-3 3M289 184l19 15M289 184l-14 17M275 201l19 15M275 201l-14 17M261 218l19 15M261 218l-14 17M247 235l19 15M247 235l-14 17M233 252l19 15M233 252l-14 17M219 269l19 15M219 269l-14 17M205 286l19 15M205 286l-14 17M191 303l-12 15M325 184l16 13M320 184l-12 15M308 199l-14 17M294 216l19 15M294 216l-14 17M280 233l19 15M266 250l19 15M266 250l-14 17M252 267l19 15M252 267l-14 17M238 284l19 15M238 284l-14 17M224 301l19 15M224 301l-14 17M210 318l19 15M210 318l-8 10M349 187l-8 10M341 197l19 15M341 197l-14 17M327 214l19 15M327 214l-14 17M313 231l19 15M313 231l-14 17M299 248l19 15M299 248l-14 17M285 265l19 15M285 265l-14 17M271 282l-14 17M257 299l19 15M257 299l-14 17M243 316l19 15M243 316l-14 17M229 333l19 15M229 333l-4 5M378 190l-4 5M374 195l19 15M374 195l-14 17M360 212l19 15M360 212l-14 17M346 229l19 15M346 229l-14 17M332 246l19 15M332 246l-14 17M318 263l-14 17M304 280l19 15M304 280l-14 17M290 297l19 15M290 297l-14 17M276 314l19 15M276 314l-14 17M262 331l19 15M262 331l-14 17M407 194l-14 16M393 210l19 15M393 210l-14 17M379 227l-14 17M351 261l19 15M351 261l-14 17M337 278l19 15M337 278l-14 17M323 295l19 15M323 295l-14 17M309 312l19 15M309 312l-14 17M295 329l19 15M295 329l-14 17M281 346l19 15M281 346l-10 12M449 198l10 8M435 197l-9 11M426 208l19 15M426 208l-14 17M412 225l19 15M412 225l-14 17M398 242l19 15M398 242l-14 17M384 259l19 15M384 259l-14 17M370 276l19 15M370 276l-14 17M356 293l19 15M356 293l-14 17M342 310l19 15M342 310l-14 17M328 327l19 15M328 327l-14 17M314 344l19 15M314 344l-14 17M300 361l19 15M300 361l-6 7M491 203l1 1M464 200l-5 6M459 206l19 15M459 206l-14 17M445 223l19 15M445 223l-14 17M431 240l19 15M431 240l-14 17M417 257l-14 17M403 274l19 15M403 274l-14 17M389 291l-14 17M375 308l19 15M361 325l19 15M347 342l19 15M347 342l-14 17M333 359l19 15M333 359l-14 17M319 376l7 6M319 376l-2 2M492 204l19 15M492 204l-14 17M478 221l19 15M478 221l-14 17M464 238l19 15M464 238l-14 17M450 255l19 15M450 255l-14 17M436 272l19 15M436 272l-14 17M422 289l19 15M422 289l-14 17M408 306l19 15M394 323l19 15M394 323l-14 17M380 340l19 15M380 340l-14 17M366 357l19 15M366 357l-14 17M352 374l19 15M352 374l-12 14M532 207l12 10M521 206l-10 13M511 219l19 15M511 219l-14 17M497 236l19 15M497 236l-14 17M483 253l19 15M469 270l19 15M469 270l-14 17M455 287l19 15M455 287l-14 17M441 304l19 15M441 304l-14 17M427 321l19 15M427 321l-14 17M413 338l19 15M413 338l-14 17M399 355l19 15M399 355l-14 17M385 372l19 15M385 372l-14 17M371 389l19 15M371 389l-7 9M573 212l4 3M550 210l-6 7M544 217l19 15M530 234l19 15M530 234l-14 17M516 251l19 15M516 251l-14 17M502 268l19 15M488 285l-14 17M474 302l19 15M474 302l-14 17M460 319l19 15M460 319l-14 17M446 336l-14 17M432 353l19 15M432 353l-14 17M418 370l-14 17M404 387l-14 17M390 404l15 12M390 404l-3 4M579 213l-2 2M577 215l19 15M577 215l-14 17M563 232l19 15M563 232l-14 17M549 249l19 15M549 249l-14 17M535 266l19 15M535 266l-14 17M521 283l19 15M521 283l-14 17M507 300l19 15M507 300l-14 17M493 317l-14 17M479 334l19 15M479 334l-14 17M465 351l19 15M465 351l-14 17M451 368l19 15M451 368l-14 17M437 385l19 15M437 385l-14 17M423 402l19 15M423 402l-13 16M615 217l14 11M608 216l-12 14M596 230l19 15M596 230l-14 17M582 247l-14 17M568 264l19 15M568 264l-14 17M554 281l19 15M554 281l-14 17M540 298l19 15M540 298l-14 17M526 315l19 15M526 315l-14 17M512 332l-14 17M498 349l19 15M498 349l-14 17M484 366l-14 17M470 383l19 15M470 383l-14 17M456 400l19 15M442 417l19 15M442 417l-9 11M656 221l6 5M636 219l-7 9M629 228l19 15M629 228l-14 17M615 245l19 15M615 245l-14 17M601 262l19 15M601 262l-14 17M587 279l19 15M587 279l-14 17M573 296l-14 17M559 313l19 15M559 313l-14 17M545 330l19 15M531 347l19 15M531 347l-14 17M517 364l19 15M517 364l-14 17M503 381l19 15M489 398l19 15M475 415l-14 17M461 432l19 15M461 432l-5 6M665 222l-3 4M662 226l19 15M648 243l19 15M648 243l-14 17M634 260l19 15M634 260l-14 17M620 277l19 15M606 294l19 15M606 294l-14 17M592 311l-14 17M578 328l19 15M578 328l-14 17M550 362l-14 17M536 379l19 15M536 379l-14 17M522 396l19 15M508 413l19 15M508 413l-14 17M494 430l19 15M494 430l-14 17M480 447l4 3M697 226l17 13M681 241l19 15M681 241l-14 17M667 258l19 15M667 258l-14 17M653 275l19 15M639 292l19 15M639 292l-14 17M625 309l19 15M611 326l19 15M611 326l-14 17M597 343l19 15M597 343l-14 17M583 360l19 15M583 360l-14 17M569 377l19 15M569 377l-14 17M555 394l19 15M555 394l-14 17M541 411l-14 17M527 428l19 15M527 428l-14 17M513 445l19 15M513 445l-11 13M739 230l8 7M722 229l-8 10M714 239l19 15M714 239l-14 17M700 256l19 15M700 256l-14 17M686 273l19 15M686 273l-14 17M672 290l19 15M672 290l-14 17M658 307l19 15M658 307l-14 17M644 324l19 15M644 324l-14 17M630 341l19 15M630 341l-14 17M616 358l19 15M616 358l-14 17M602 375l19 15M602 375l-14 17M588 392l19 15M588 392l-14 17M574 409l19 15M560 426l19 15M560 426l-14 17M546 443l19 15M546 443l-14 17M532 460l19 15M532 460l-7 8M747 237l19 15M747 237l-14 17M733 254l19 15M733 254l-14 17M719 271l19 15M719 271l-14 17M705 288l19 15M705 288l-14 17M691 305l19 15M691 305l-14 17M677 322l19 15M663 339l19 15M663 339l-14 17M649 356l19 15M649 356l-14 17M635 373l19 15M635 373l-14 17M621 390l19 15M621 390l-14 17M607 407l-14 17M593 424l19 15M593 424l-14 17M579 441l19 15M579 441l-14 17M565 458l19 15M551 475l-3 3M780 235l19 15M766 252l19 15M766 252l-14 17M752 269l19 15M752 269l-14 17M738 286l-14 17M724 303l19 15M724 303l-14 17M710 320l19 15M710 320l-14 17M696 337l19 15M682 354l19 15M682 354l-14 17M668 371l19 15M668 371l-14 17M654 388l19 15M654 388l-14 17M640 405l19 15M640 405l-14 17M626 422l19 15M626 422l-14 17M612 439l19 15M612 439l-14 17M598 456l19 15M598 456l-14 17M584 473l19 15M584 473l-13 15M821 240l11 8M809 238l-10 12M799 250l19 15M799 250l-14 17M785 267l19 15M785 267l-14 17M771 284l19 15M771 284l-14 17M757 301l19 15M757 301l-14 17M743 318l19 15M743 318l-14 17M729 335l19 15M729 335l-14 17M715 352l-14 17M701 369l19 15M701 369l-14 17M687 386l19 15M687 386l-14 17M673 403l19 15M673 403l-14 17M659 420l19 15M645 437l19 15M645 437l-14 17M631 454l19 15M631 454l-14 17M617 471l19 15M603 488l19 15M603 488l-8 10M863 244l2 2M837 241l-5 7M832 248l19 15M832 248l-14 17M818 265l19 15M818 265l-14 17M804 282l19 15M804 282l-14 17M790 299l19 15M790 299l-14 17M776 316l19 15M776 316l-14 17M762 333l19 15M762 333l-14 17M748 350l19 15M748 350l-14 17M734 367l-14 17M720 384l19 15M720 384l-14 17M706 401l-14 17M692 418l19 15M692 418l-14 17M678 435l19 15M678 435l-14 17M664 452l19 15M650 469l19 15M650 469l-14 17M636 486l19 15M636 486l-14 17M622 503l19 15M622 503l-4 5M866 245l-1 1M865 246l19 15M865 246l-14 17M851 263l19 15M851 263l-14 17M837 280l19 15M837 280l-14 17M823 297l-14 17M809 314l19 15M809 314l-14 17M795 331l19 15M795 331l-14 17M781 348l19 15M781 348l-14 17M767 365l19 15M767 365l-14 17M753 382l19 15M753 382l-14 17M739 399l-14 17M725 416l19 15M725 416l-14 17M711 433l19 15M711 433l-14 17M697 450l19 15M697 450l-14 17M683 467l-14 17M669 484l19 15M669 484l-14 17M655 501l19 15M655 501l-14 17M641 518l1 1M904 249l13 10M895 248l-11 13M884 261l19 15M884 261l-14 17M870 278l19 15M870 278l-14 17M856 295l19 15M856 295l-14 17M842 312l19 15M842 312l-14 17M828 329l-14 17M814 346l19 15M814 346l-14 17M800 363l19 15M800 363l-14 17M786 380l19 15M786 380l-14 17M772 397l19 15M758 414l19 15M744 431l19 15M744 431l-14 17M730 448l19 15M730 448l-14 17M716 465l19 15M702 482l19 15M702 482l-14 17M688 499l19 15M688 499l-14 17M674 516l19 15M674 516l-10 12M946 254l4 3M917 259l19 15M917 259l-14 17M903 276l19 15M889 293l19 15M889 293l-14 17M875 310l19 15M875 310l-14 17M861 327l19 15M861 327l-14 17M847 344l19 15M847 344l-14 17M833 361l19 15M833 361l-14 17M819 378l19 15M819 378l-14 17M805 395l19 15M805 395l-14 17M791 412l19 15M791 412l-14 17M777 429l19 15M777 429l-14 17M763 446l19 15M763 446l-14 17M749 463l19 15M749 463l-14 17M735 480l-14 17M721 497l19 15M721 497l-14 17M707 514l19 15M707 514l-14 17M693 531l19 15M693 531l-6 7M952 254l-2 3M950 257l17 13M936 274l19 15M936 274l-14 17M922 291l19 15M908 308l19 15M908 308l-14 17M894 325l19 15M880 342l-14 17M866 359l19 15M866 359l-14 17M852 376l19 15M852 376l-14 17M838 393l19 15M838 393l-14 17M824 410l19 15M824 410l-14 17M810 427l-14 17M796 444l19 15M796 444l-14 17M782 461l19 15M782 461l-14 17M768 478l19 15M768 478l-14 17M754 495l19 15M754 495l-14 17M740 512l19 15M740 512l-14 17M726 529l19 15M726 529l-14 17M712 546l9 7M712 546l-2 2M966 276l-11 13M955 289l9 7M955 289l-14 17M941 306l19 15M941 306l-14 17M927 323l19 15M913 340l19 15M913 340l-14 17M899 357l19 15M899 357l-14 17M885 374l19 15M885 374l-14 17M871 391l19 15M871 391l-14 17M857 408l19 15M857 408l-14 17M843 425l19 15M843 425l-14 17M829 442l19 15M829 442l-14 17M815 459l-14 17M801 476l19 15M801 476l-14 17M787 493l19 15M787 493l-14 17M773 510l19 15M773 510l-14 17M759 527l19 15M759 527l-14 17M745 544l19 15M745 544l-12 14M960 321l1 1M960 321l-14 17M946 338l13 10M946 338l-14 17M932 355l19 15M932 355l-14 17M918 372l19 15M918 372l-14 17M904 389l19 15M904 389l-14 17M890 406l19 15M890 406l-14 17M876 423l19 15M876 423l-14 17M862 440l19 15M862 440l-14 17M848 457l19 15M848 457l-14 17M834 474l19 15M834 474l-14 17M820 491l19 15M820 491l-14 17M806 508l19 15M806 508l-14 17M792 525l19 15M792 525l-14 17M778 542l19 15M778 542l-14 17M764 559l19 15M764 559l-8 9M957 363l-6 7M951 370l5 4M937 387l16 13M937 387l-14 17M923 404l19 15M923 404l-14 17M909 421l19 15M909 421l-14 17M895 438l19 15M895 438l-14 17M881 455l19 15M881 455l-14 17M867 472l19 15M867 472l-14 17M853 489l19 15M853 489l-14 17M839 506l19 15M839 506l-14 17M825 523l19 15M825 523l-14 17M811 540l-14 17M797 557l19 15M797 557l-14 17M783 574l17 13M783 574l-4 4M952 406l-10 13M942 419l8 7M942 419l-14 17M928 436l-14 17M914 453l19 15M914 453l-14 17M900 470l-14 17M886 487l19 15M886 487l-14 17M872 504l19 15M872 504l-14 17M858 521l19 15M858 521l-14 17M844 538l19 15M844 538l-14 17M830 555l19 15M830 555l-14 17M816 572l19 15M816 572l-14 16M948 450l-1 1M947 451l-14 17M933 468l12 10M933 468l-14 17M919 485l19 15M905 502l19 15M905 502l-14 17M891 519l19 15M891 519l-14 17M877 536l19 15M877 536l-14 17M863 553l19 15M863 553l-14 17M849 570l19 15M849 570l-14 17M835 587l19 15M835 587l-9 12M943 493l-5 7M938 500l4 3M938 500l-14 17M924 517l16 12M910 534l19 15M896 551l19 15M896 551l-14 17M882 568l19 15M882 568l-14 17M868 585l19 15M854 602l19 15M854 602l-5 7M929 549l8 6M929 549l-14 17M915 566l19 15M915 566l-14 17M901 583l19 15M901 583l-14 17M887 600l19 15M887 600l-14 17M920 598l12 9M920 598l-14 17M906 615l19 15M906 615l-11 14M930 624l-5 6M925 630l-7 9M169 167l1 5M152 165l4 24M150 173l20 -1M149 189l7 0M186 169l3 18M170 172l5 32M156 189l5 32M156 189l33 -2M149 222l12 -1M203 171l5 31M175 204l5 32M161 221l33 -2M222 185l5 32M208 202l5 32M194 219l5 32M194 219l33 -2M180 236l5 32M166 253l5 32M147 286l24 -1M147 303l10 -1M271 178l3 20M213 234l33 -2M199 251l33 -2M185 268l33 -2M157 302l1 7M274 198l5 32M260 215l5 32M260 215l33 -2M246 232l33 -2M232 249l5 32M218 266l5 32M204 283l5 32M204 283l33 -2M190 300l4 24M293 213l5 32M293 213l33 -2M265 247l33 -2M251 264l5 32M251 264l33 -2M237 281l5 32M237 281l33 -2M223 298l5 32M209 315l33 -2M209 331l19 -1M373 190l0 2M340 194l5 32M340 194l33 -2M326 211l5 32M326 211l33 -2M312 228l5 32M298 245l5 32M284 262l5 32M270 279l33 -2M256 296l33 -2M242 313l33 -2M390 192l2 15M373 192l13 -1M359 209l5 32M359 209l33 -2M345 226l5 32M345 226l33 -2M331 243l33 -2M317 260l5 32M317 260l33 -2M303 277l5 32M303 277l33 -2M289 294l33 -2M275 311l33 -2M261 328l33 -2M247 345l0 3M247 345l33 -2M392 207l5 32M392 207l33 -2M378 224l5 32M378 224l33 -2M364 241l5 32M364 241l33 -2M350 258l5 32M322 292l5 32M322 292l33 -2M308 309l33 -2M294 326l33 -2M275 359l24 -1M457 199l1 4M440 197l4 23M425 205l5 32M425 205l33 -2M397 239l5 32M383 256l33 -2M355 290l5 32M341 307l5 32M327 324l5 32M313 341l5 32M313 341l33 -2M299 358l2 13M458 203l22 -1M444 220l5 32M430 237l33 -2M416 254l33 -2M402 271l33 -2M388 288l5 32M374 305l5 32M374 305l33 -2M360 322l33 -2M346 339l33 -2M332 356l5 30M332 356l33 -2M508 205l2 11M477 218l5 32M463 235l5 32M463 235l33 -2M435 269l33 -2M421 286l5 32M421 286l33 -2M365 354l5 32M542 209l1 5M496 233l33 -2M468 267l33 -2M440 301l5 32M440 301l33 -2M426 318l5 32M412 335l5 32M412 335l33 -2M384 369l5 32M370 386l33 -2M543 214l5 32M543 214l31 -2M529 231l5 32M515 248l5 32M501 265l33 -2M487 282l33 -2M473 299l33 -2M459 316l5 32M459 316l33 -2M431 350l5 32M431 350l33 -2M417 367l33 -2M403 384l5 32M403 384l33 -2M405 416l3 0M562 229l33 -2M548 246l33 -2M534 263l5 32M506 297l33 -2M492 314l5 32M478 331l33 -2M464 348l33 -2M450 365l5 32M450 365l33 -2M436 382l33 -2M595 227l5 32M581 244l5 32M553 278l5 32M539 295l5 32M511 329l33 -2M497 346l5 32M497 346l33 -2M483 363l5 32M469 380l33 -2M441 414l33 -2M438 430l22 -1M644 220l3 20M628 225l5 32M628 225l33 -2M600 259l5 32M586 276l5 32M586 276l33 -2M558 310l5 32M558 310l33 -2M544 327l33 -2M530 344l33 -2M516 361l5 32M516 361l33 -2M502 378l5 32M488 395l33 -2M474 412l5 32M474 412l33 -2M460 429l2 12M678 224l2 14M633 257l5 32M619 274l33 -2M605 291l5 32M577 325l5 32M563 342l5 32M563 342l33 -2M549 359l5 32M535 376l5 32M521 393l33 -2M507 410l33 -2M493 427l5 29M493 427l33 -2M479 444l1 4M479 444l33 -2M680 238l5 32M666 255l5 32M666 255l33 -2M652 272l5 32M652 272l33 -2M638 289l5 32M638 289l33 -2M610 323l5 32M596 340l5 32M596 340l33 -2M582 357l33 -2M568 374l5 32M568 374l33 -2M554 391l5 32M554 391l33 -2M512 442l3 22M503 459l28 -2M746 231l0 3M729 229l3 22M713 236l33 -2M699 253l5 32M685 270l5 32M685 270l33 -2M671 287l5 32M671 287l33 -2M643 321l33 -2M629 338l5 32M629 338l33 -2M615 355l5 32M615 355l33 -2M601 372l5 32M587 389l33 -2M559 423l5 32M545 440l33 -2M536 473l14 -1M763 233l2 16M746 234l16 -1M732 251l5 32M732 251l33 -2M704 285l5 32M704 285l33 -2M690 302l5 32M676 319l33 -2M662 336l5 32M648 353l5 32M648 353l33 -2M634 370l5 32M606 404l5 32M578 438l5 32M578 438l33 -2M550 472l1 7M550 472l33 -2M779 235l5 29M765 249l5 32M765 249l33 -2M751 266l5 32M751 266l33 -2M723 300l5 32M723 300l33 -2M709 317l5 32M709 317l33 -2M695 334l5 32M681 351l5 32M667 368l5 32M667 368l33 -2M639 402l33 -2M625 419l33 -2M611 436l33 -2M583 470l4 25M569 487l33 -2M830 241l1 4M813 239l4 23M784 264l5 32M784 264l33 -2M770 281l33 -2M742 315l5 32M742 315l33 -2M728 332l5 32M700 366l5 32M700 366l33 -2M686 383l5 32M686 383l33 -2M672 400l33 -2M644 434l5 32M630 451l5 32M630 451l33 -2M616 468l33 -2M601 501l20 -1M847 243l3 17M831 245l25 -1M803 279l5 32M733 364l5 32M705 398l5 32M677 432l5 32M677 432l33 -2M663 449l33 -2M649 466l33 -2M635 483l5 32M621 500l2 10M850 260l5 32M836 277l33 -2M822 294l5 32M822 294l33 -2M808 311l5 32M808 311l33 -2M794 328l5 32M780 345l5 32M766 362l33 -2M752 379l5 32M738 396l5 32M738 396l33 -2M724 413l33 -2M710 430l5 32M710 430l33 -2M696 447l33 -2M682 464l5 32M682 464l33 -2M668 481l5 32M668 481l33 -2M654 498l33 -2M640 515l33 -2M915 250l1 6M883 258l5 32M869 275l5 32M855 292l33 -2M799 360l5 32M785 377l33 -2M771 394l33 -2M757 411l5 32M757 411l33 -2M743 428l5 32M729 445l33 -2M715 462l5 32M715 462l33 -2M701 479l33 -2M673 513l33 -2M932 252l3 19M916 256l5 32M916 256l33 -2M888 290l5 32M860 324l5 32M846 341l5 32M846 341l33 -2M832 358l5 32M832 358l33 -2M818 375l5 32M804 392l5 32M804 392l33 -2M776 426l33 -2M762 443l5 32M762 443l33 -2M748 460l5 32M748 460l33 -2M734 477l5 32M734 477l33 -2M706 511l5 32M706 511l33 -2M949 254l5 32M935 271l32 -2M907 305l5 32M907 305l33 -2M893 322l33 -2M865 356l5 32M865 356l33 -2M851 373l5 32M837 390l5 32M823 407l33 -2M809 424l5 32M781 458l33 -2M767 475l5 32M753 492l5 32M753 492l33 -2M725 526l33 -2M711 543l1 6M954 286l5 32M940 303l23 -1M912 337l5 32M912 337l33 -2M898 354l33 -2M884 371l33 -2M870 388l33 -2M856 405l5 32M842 422l5 32M842 422l33 -2M828 439l5 32M828 439l33 -2M800 473l5 32M786 490l33 -2M758 524l5 32M758 524l33 -2M744 541l4 24M959 318l2 10M931 352l5 32M917 369l5 32M889 403l33 -2M875 420l5 32M847 454l5 32M833 471l5 32M833 471l33 -2M805 505l5 32M791 522l5 32M791 522l33 -2M777 539l33 -2M763 556l33 -2M936 384l5 32M936 384l19 -1M908 418l5 32M908 418l33 -2M894 435l33 -2M880 452l5 32M866 469l5 32M866 469l33 -2M852 486l33 -2M838 503l5 32M838 503l33 -2M810 537l5 32M796 554l5 32M782 571l1 9M782 571l33 -2M797 586l4 0M927 433l23 -1M913 450l33 -2M857 518l5 32M857 518l33 -2M843 535l33 -2M829 552l5 32M946 448l1 8M946 448l2 0M904 499l33 -2M876 533l5 32M876 533l33 -2M862 550l33 -2M834 584l3 20M830 600l23 -1M937 497l4 23M937 497l6 0M923 514l5 32M909 531l5 32M895 548l5 32M895 548l33 -2M881 565l33 -2M867 582l33 -2M853 599l2 12M853 599l33 -2M863 615l9 -1M928 546l5 32M914 563l22 -1M919 595l5 32M905 612l4 23M905 612l26 -2M153 199l4 26M153 222l4 3M153 225l4 0M181 196l-10 12M186 197l4 26M171 208l19 15M171 208l-14 17M171 208l4 23M171 208l33 -2M157 225l5 4M157 225l-3 3M157 225l1 4M157 225l33 -2M237 202l0 2M235 202l2 2M210 199l-6 7M204 206l19 15M204 206l-14 17M204 206l4 29M190 223l-7 9M190 223l1 10M190 223l33 -2M254 204l2 15M237 204l19 15M237 204l-14 17M237 204l5 32M237 204l10 -1M223 221l19 15M223 221l-11 14M223 221l2 15M223 221l33 -2M228 237l14 -1M288 208l1 9M276 207l13 10M267 206l-11 13M271 206l4 28M256 219l33 -2M242 236l4 3M242 236l-2 2M242 236l33 -2M317 211l5 4M296 209l-7 8M305 210l3 22M289 217l19 15M289 217l33 -2M275 234l12 10M275 234l-6 8M275 234l33 -2M324 212l-2 3M338 214l3 16M322 215l-14 17M322 215l5 32M322 215l19 -1M308 232l-11 13M308 232l2 14M319 247l8 0M372 217l2 11M359 216l15 12M353 215l-12 15M355 215l5 30M341 230l19 15M341 230l-14 17M341 230l3 20M327 247l2 2M327 247l-1 1M327 247l33 -2M382 218l-8 10M389 219l4 24M374 228l19 15M374 228l4 26M374 228l33 -2M360 245l11 9M360 245l-5 7M360 245l1 7M360 245l33 -2M411 222l-4 4M423 223l3 18M407 226l19 15M407 226l-14 17M407 226l5 32M407 226l28 -2M393 243l19 15M393 243l2 13M457 227l2 12M441 225l18 14M439 225l-13 16M440 225l5 31M426 241l3 19M412 258l33 -2M468 228l-9 11M459 239l19 15M459 239l-14 17M459 239l4 25M445 256l9 7M445 256l-5 6M445 256l1 6M445 256l33 -2M497 231l-5 6M508 232l3 20M492 237l19 15M492 237l-14 17M492 237l33 -2M478 254l18 14M478 254l2 12M478 254l33 -2M542 236l2 14M525 235l19 15M525 235l-14 17M525 235l5 32M525 235l4 0M511 252l-14 16M511 252l33 -2M501 269l29 -2M576 240l1 8M565 239l12 9M559 238l4 27M544 250l19 15M544 250l-14 17M544 250l4 24M544 250l33 -2M530 267l1 5M530 267l33 -2M610 244l0 2M583 241l-6 7M577 248l19 15M577 248l-14 17M577 248l5 30M577 248l33 -2M563 265l16 13M563 265l2 11M563 265l33 -2M612 244l-2 2M610 246l14 -1M596 263l19 15M596 263l-13 15M596 263l3 17M596 263l33 -2M591 279l24 -1M648 248l14 11M644 247l4 29M629 261l19 15M629 261l-14 17M629 261l4 23M629 261l33 -2M615 278l6 5M615 278l-3 4M615 278l1 4M615 278l33 -2M694 253l1 4M689 252l6 5M662 259l19 15M662 259l5 29M662 259l33 -2M648 276l15 12M648 276l-8 9M648 276l2 10M648 276l33 -2M698 253l-3 4M711 255l3 17M695 257l19 15M695 257l-14 17M695 257l5 32M695 257l23 -1M681 274l-12 15M681 274l3 16M745 259l2 11M731 257l16 13M728 257l5 30M714 272l-14 17M714 272l3 22M714 272l33 -2M700 289l5 4M700 289l-2 3M700 289l33 -2M772 262l8 6M762 261l4 24M747 270l19 15M747 270l-14 17M747 270l4 28M747 270l33 -2M733 287l13 11M733 287l-7 8M733 287l33 -2M796 264l3 19M780 268l-14 17M780 268l5 32M780 268l32 -2M766 285l19 15M766 285l2 15M766 285l33 -2M773 301l12 -1M830 268l2 13M813 266l-14 17M799 283l19 15M799 283l-14 17M785 300l-2 2M785 300l0 2M785 300l33 -2M864 272l1 7M855 271l10 8M842 269l-10 12M832 281l19 15M832 281l-14 17M832 281l4 27M832 281l33 -2M818 298l12 9M818 298l-6 7M818 298l1 8M896 275l2 2M881 274l3 20M865 279l19 15M865 279l-14 17M865 279l5 32M851 296l19 15M851 296l-10 13M864 311l6 0M899 276l-1 1M915 277l2 15M898 277l19 15M898 277l-14 17M898 277l5 32M898 277l8 -1M884 294l19 15M884 294l-14 17M884 294l3 20M870 311l2 1M949 281l1 9M937 280l13 10M928 279l-11 13M932 279l4 28M917 292l19 15M917 292l-14 17M917 292l4 26M917 292l33 -2M903 309l-5 6M903 309l1 7M903 309l33 -2M957 282l-7 8M950 290l14 11M950 290l-14 17M950 290l15 -1M936 307l-10 12M936 307l28 -2M964 312l-9 10M955 322l8 0M150 173l2 2M168 167l1 7M180 168l6 5M160 166l-8 9M152 175l3 16M152 175l-1 -10M152 175l17 -1M152 175l-2 0M152 175l-2 3M149 191l6 0M149 200l9 7M186 173l-1 -4M172 190l16 -1M172 190l-17 1M172 190l-14 17M158 207l-9 1M158 207l18 15M158 207l-9 10M149 224l11 -1M149 228l13 11M209 172l-7 0M217 172l-13 16M204 188l3 16M204 188l17 -1M204 188l-16 1M204 188l20 15M204 188l-14 17M190 205l3 16M190 205l-16 1M176 222l3 16M176 222l-2 -16M176 222l17 -1M176 222l20 15M176 222l-14 17M162 239l3 16M162 239l17 -1M162 239l20 15M162 239l-14 17M148 256l3 16M148 256l0 -3M148 256l17 -1M148 256l20 15M147 283l7 5M253 176l1 9M246 176l-8 10M238 186l16 -1M238 186l-17 1M238 186l18 15M224 203l2 16M224 203l-3 -16M224 203l16 -1M224 203l-17 1M224 203l-14 17M210 220l2 16M210 220l16 -1M210 220l-17 1M210 220l18 15M210 220l-14 17M196 237l2 16M196 237l-3 -16M196 237l16 -1M196 237l-17 1M196 237l18 15M196 237l-14 17M182 254l2 16M182 254l-3 -16M182 254l16 -1M182 254l-17 1M182 254l-14 17M168 271l2 16M168 271l-3 -16M168 271l16 -1M168 271l-17 1M168 271l18 15M168 271l-14 17M154 288l2 16M154 288l-3 -16M154 288l16 -1M154 288l-7 0M154 288l18 15M154 288l-7 8M148 304l8 0M270 184l-16 1M270 184l20 15M270 184l-14 17M256 201l3 16M256 201l-2 -16M256 201l17 -1M256 201l-16 1M256 201l20 15M256 201l-14 17M242 218l3 16M242 218l-2 -16M242 218l17 -1M242 218l20 15M242 218l-14 17M228 235l3 16M228 235l17 -1M228 235l-16 1M228 235l20 15M228 235l-14 17M214 252l-2 -16M214 252l-16 1M214 252l20 15M214 252l-14 17M200 269l3 16M200 269l-2 -16M200 269l17 -1M200 269l-16 1M200 269l20 15M200 269l-14 17M186 286l3 16M186 286l-2 -16M186 286l17 -1M186 286l20 15M172 303l3 13M172 303l17 -1M172 303l-16 1M172 303l20 15M172 303l-7 9M157 308l-1 -4M304 182l2 16M303 182l-16 1M290 199l2 16M290 199l16 -1M290 199l-17 1M290 199l-14 17M276 216l2 16M276 216l-3 -16M276 216l16 -1M276 216l-17 1M276 216l-14 17M262 233l-3 -16M262 233l18 15M262 233l-14 17M248 250l2 16M248 250l-17 1M248 250l-14 17M234 267l2 16M234 267l-3 -16M234 267l16 -1M234 267l18 15M220 284l2 16M220 284l-3 -16M220 284l16 -1M220 284l-17 1M206 301l2 16M206 301l-3 -16M206 301l16 -1M206 301l-17 1M206 301l18 15M206 301l-14 17M192 318l-3 -16M192 318l16 -1M192 318l-11 1M192 318l14 12M192 318l-4 4M337 186l2 10M345 187l11 8M332 185l-10 12M322 197l3 16M322 197l-2 -13M322 197l17 -1M322 197l-16 1M322 197l20 15M308 214l3 16M308 214l-2 -16M308 214l-16 1M308 214l20 15M308 214l-14 17M294 231l3 16M294 231l20 15M294 231l-14 17M280 248l-2 -16M280 248l-16 1M280 248l20 15M280 248l-14 17M266 265l3 16M266 265l17 -1M266 265l-16 1M266 265l20 15M266 265l-14 17M252 282l3 16M252 282l-2 -16M252 282l17 -1M252 282l-16 1M252 282l20 15M252 282l-14 17M238 299l3 16M238 299l-2 -16M238 299l17 -1M238 299l20 15M224 316l3 16M224 316l-2 -16M224 316l-16 1M224 316l20 15M224 316l-13 16M371 190l1 4M361 188l-5 7M356 195l2 16M356 195l16 -1M356 195l-17 1M356 195l18 15M356 195l-14 17M342 212l2 16M342 212l16 -1M342 212l-17 1M342 212l18 15M342 212l-14 17M328 229l16 -1M328 229l-17 1M328 229l18 15M328 229l-14 17M314 246l2 16M314 246l-3 -16M314 246l16 -1M314 246l-17 1M314 246l-14 17M300 263l2 16M300 263l-17 1M286 280l2 16M286 280l-3 -16M286 280l16 -1M286 280l18 15M286 280l-14 17M272 297l-3 -16M272 297l16 -1M272 297l-17 1M272 297l-14 17M258 314l16 -1M258 314l-17 1M258 314l18 15M244 331l-3 -16M244 331l16 -1M244 331l18 15M244 331l-10 11M388 193l3 16M388 193l0 -1M388 193l9 -1M388 193l-16 1M388 193l-14 17M374 210l3 16M374 210l-2 -16M374 210l17 -1M374 210l-16 1M374 210l20 15M360 227l3 16M360 227l17 -1M360 227l-16 1M346 244l3 16M346 244l-2 -16M346 244l17 -1M346 244l-16 1M346 244l20 15M346 244l-14 17M332 261l3 16M332 261l-2 -16M332 261l17 -1M332 261l-16 1M332 261l20 15M318 278l3 16M318 278l-2 -16M318 278l-16 1M318 278l-14 17M304 295l-2 -16M304 295l17 -1M304 295l-16 1M304 295l20 15M304 295l-14 17M290 312l3 16M290 312l-2 -16M290 312l20 15M290 312l-14 17M276 329l3 16M262 346l2 9M262 346l-2 -16M262 346l20 15M428 196l12 10M408 208l2 16M408 208l16 -1M408 208l-17 1M394 225l16 -1M394 225l-17 1M394 225l18 15M394 225l-14 17M380 242l-17 1M380 242l18 15M380 242l-14 17M366 259l2 16M366 259l-3 -16M366 259l16 -1M366 259l-17 1M366 259l18 15M366 259l-14 17M352 276l2 16M352 276l16 -1M352 276l-17 1M352 276l18 15M352 276l-14 17M338 293l2 16M338 293l16 -1M338 293l-17 1M338 293l18 15M338 293l-14 17M324 310l2 16M324 310l-3 -16M324 310l16 -1M324 310l-17 1M324 310l18 15M324 310l-14 17M310 327l2 16M310 327l-3 -16M310 327l16 -1M296 344l16 -1M296 344l18 15M296 344l-14 17M282 361l-3 -16M282 361l-3 0M282 361l3 3M456 199l1 6M469 200l5 4M440 206l3 16M440 206l-1 -9M440 206l17 -1M440 206l-16 1M440 206l-14 17M426 223l3 16M426 223l-2 -16M426 223l17 -1M426 223l20 15M426 223l-14 17M412 240l17 -1M412 240l-16 1M412 240l20 15M412 240l-14 17M398 257l3 16M398 257l-16 1M398 257l20 15M384 274l3 16M384 274l-2 -16M384 274l17 -1M384 274l-16 1M384 274l20 15M384 274l-14 17M370 291l-2 -16M370 291l17 -1M370 291l-16 1M370 291l-14 17M356 308l3 16M356 308l17 -1M356 308l-16 1M356 308l20 15M356 308l-14 17M342 325l3 16M342 325l-2 -16M342 325l-16 1M328 342l3 16M328 342l-2 -16M328 342l17 -1M328 342l-16 1M328 342l20 15M328 342l-14 17M314 359l-2 -16M314 359l-16 1M314 359l20 15M311 375l6 0M474 204l2 16M474 204l16 -1M474 204l-14 17M460 221l2 16M460 221l-3 -16M460 221l16 -1M446 238l2 16M446 238l-3 -16M446 238l-17 1M432 255l2 16M432 255l-3 -16M432 255l16 -1M432 255l-17 1M432 255l18 15M432 255l-14 17M418 272l2 16M418 272l18 15M404 289l16 -1M404 289l-17 1M404 289l18 15M390 306l2 16M390 306l16 -1M390 306l18 15M376 323l2 16M376 323l16 -1M376 323l-17 1M376 323l18 15M376 323l-14 17M362 340l2 16M362 340l16 -1M362 340l18 15M362 340l-14 17M348 357l-3 -16M348 357l16 -1M348 357l18 15M334 374l1 12M334 374l16 -1M334 374l-17 1M334 374l18 15M334 374l-7 8M317 378l0 -3M492 219l3 16M492 219l17 -1M492 219l-16 1M492 219l20 15M492 219l-14 17M478 236l3 16M478 236l-2 -16M464 253l3 16M464 253l-2 -16M464 253l17 -1M464 253l-16 1M464 253l-14 17M450 270l3 16M450 270l-2 -16M450 270l-16 1M450 270l20 15M436 287l3 16M436 287l-2 -16M436 287l17 -1M422 304l3 16M422 304l-2 -16M422 304l-16 1M422 304l20 15M422 304l-14 17M408 321l3 16M408 321l17 -1M408 321l-16 1M408 321l20 15M394 338l3 16M394 338l-2 -16M394 338l-16 1M380 355l3 16M380 355l-2 -16M380 355l17 -1M380 355l20 15M366 372l20 15M366 372l-14 17M352 389l1 5M352 389l-8 1M352 389l-2 3M541 208l1 8M533 208l-7 9M526 217l2 16M526 217l-2 -10M526 217l-17 1M526 217l18 15M526 217l-14 17M512 234l-3 -16M512 234l-17 1M512 234l18 15M512 234l-14 17M498 251l2 16M498 251l-3 -16M498 251l16 -1M498 251l-17 1M498 251l-14 17M484 268l2 16M484 268l-3 -16M484 268l16 -1M484 268l-17 1M484 268l18 15M484 268l-14 17M470 285l2 16M470 285l-3 -16M470 285l-17 1M470 285l-14 17M456 302l2 16M456 302l18 15M456 302l-14 17M442 319l-3 -16M442 319l-17 1M442 319l18 15M428 336l2 16M428 336l-3 -16M428 336l-17 1M428 336l18 15M428 336l-14 17M414 353l2 16M414 353l-3 -16M414 353l16 -1M400 370l2 16M400 370l-3 -16M400 370l-17 1M400 370l18 15M400 370l-14 17M386 387l2 16M386 387l-3 -16M386 387l16 -1M386 387l18 15M386 387l-13 15M371 401l-2 -13M377 404l11 -1M575 212l0 2M562 211l-4 4M558 215l3 16M558 215l0 -5M558 215l17 -1M558 215l-16 1M558 215l20 15M558 215l-14 17M544 232l-2 -16M544 232l-14 17M530 249l3 16M530 249l-2 -16M530 249l17 -1M530 249l-16 1M530 249l20 15M516 266l17 -1M516 266l20 15M516 266l-14 17M502 283l3 16M502 283l17 -1M502 283l-16 1M488 300l3 16M488 300l-2 -16M488 300l-16 1M488 300l-14 17M474 317l3 16M474 317l17 -1M474 317l-16 1M460 334l3 16M460 334l-2 -16M460 334l17 -1M460 334l20 15M446 351l3 16M446 351l-2 -16M446 351l17 -1M446 351l-16 1M446 351l-14 17M432 368l3 16M432 368l-2 -16M432 368l17 -1M432 368l-16 1M432 368l20 15M432 368l-14 17M418 385l-2 -16M418 385l-16 1M418 385l20 15M404 402l3 15M404 402l-2 -16M404 402l17 -1M404 402l-16 1M404 402l-8 10M389 409l-1 -6M592 214l2 15M585 213l-10 1M591 214l-13 16M578 230l2 16M578 230l16 -1M578 230l-17 1M564 247l2 16M564 247l-3 -16M564 247l16 -1M564 247l18 15M564 247l-14 17M550 264l2 16M550 264l-3 -16M550 264l-17 1M550 264l18 15M550 264l-14 17M536 281l2 16M536 281l16 -1M536 281l18 15M536 281l-14 17M522 298l2 16M522 298l-3 -16M522 298l16 -1M522 298l-17 1M522 298l-14 17M508 315l2 16M508 315l16 -1M494 332l16 -1M494 332l-17 1M494 332l18 15M494 332l-14 17M480 349l2 16M480 349l16 -1M480 349l-17 1M466 366l2 16M466 366l-3 -16M466 366l16 -1M466 366l18 15M466 366l-14 17M452 383l2 16M452 383l16 -1M452 383l-17 1M452 383l18 15M452 383l-14 17M438 400l-3 -16M438 400l16 -1M438 400l18 15M438 400l-14 17M424 417l-3 -16M424 417l16 -1M424 417l-15 1M619 217l-9 11M610 228l-1 -12M610 228l17 -1M610 228l-16 1M610 228l20 15M610 228l-14 17M596 245l-2 -16M596 245l17 -1M596 245l-16 1M596 245l20 15M582 262l3 16M582 262l-2 -16M582 262l17 -1M582 262l20 15M568 279l3 16M568 279l-2 -16M568 279l17 -1M568 279l-16 1M568 279l20 15M568 279l-14 17M554 296l-2 -16M554 296l-16 1M554 296l-14 17M540 313l3 16M540 313l-2 -16M540 313l17 -1M540 313l20 15M540 313l-14 17M526 330l3 16M526 330l-2 -16M526 330l17 -1M526 330l-16 1M526 330l20 15M526 330l-14 17M512 347l3 16M512 347l-2 -16M512 347l17 -1M512 347l-14 17M498 364l3 16M498 364l17 -1M498 364l-16 1M498 364l20 15M498 364l-14 17M484 381l3 16M484 381l-2 -16M484 381l-16 1M484 381l20 15M470 398l3 16M470 398l-2 -16M470 398l17 -1M470 398l20 15M456 415l-16 1M456 415l20 15M456 415l-14 17M442 432l-2 -16M442 432l17 -1M659 222l1 3M648 220l-4 6M644 226l2 16M644 226l-1 -6M644 226l16 -1M644 226l-17 1M644 226l-14 17M630 243l2 16M630 243l-3 -16M630 243l16 -1M630 243l18 15M630 243l-14 17M616 260l2 16M616 260l16 -1M616 260l-17 1M602 277l2 16M602 277l-3 -16M602 277l16 -1M602 277l-17 1M602 277l18 15M602 277l-14 17M588 294l2 16M588 294l-3 -16M588 294l-17 1M588 294l-14 17M574 311l2 16M574 311l-3 -16M574 311l16 -1M574 311l18 15M574 311l-14 17M560 328l-3 -16M560 328l16 -1M560 328l-17 1M560 328l18 15M546 345l2 16M546 345l-3 -16M546 345l16 -1M546 345l18 15M532 362l2 16M532 362l-3 -16M532 362l16 -1M532 362l-14 17M518 379l2 16M518 379l-3 -16M518 379l16 -1M518 379l18 15M518 379l-14 17M504 396l2 16M504 396l-3 -16M504 396l16 -1M504 396l-17 1M504 396l18 15M504 396l-14 17M490 413l2 16M490 413l-3 -16M490 413l16 -1M490 413l-17 1M490 413l18 15M490 413l-14 17M476 430l2 16M476 430l16 -1M476 430l-17 1M476 430l18 15M460 440l-1 -9M676 224l3 16M676 224l3 0M676 224l-14 17M662 241l3 16M662 241l-2 -16M662 241l17 -1M662 241l-16 1M662 241l20 15M662 241l-14 17M648 258l3 16M648 258l-2 -16M648 258l-16 1M648 258l20 15M648 258l-14 17M634 275l3 16M634 275l-2 -16M634 275l17 -1M634 275l-14 17M620 292l-2 -16M620 292l-14 17M606 309l3 16M606 309l-2 -16M606 309l17 -1M606 309l20 15M606 309l-14 17M592 326l3 16M592 326l17 -1M592 326l-14 17M578 343l3 16M578 343l17 -1M578 343l-16 1M578 343l20 15M564 360l3 16M564 360l-2 -16M564 360l17 -1M564 360l20 15M564 360l-14 17M550 377l-2 -16M550 377l17 -1M550 377l20 15M536 394l3 16M536 394l-2 -16M536 394l-16 1M536 394l20 15M536 394l-14 17M522 411l3 16M522 411l17 -1M522 411l-16 1M522 411l-14 17M508 428l-2 -16M508 428l17 -1M508 428l-16 1M508 428l20 15M508 428l-14 17M494 445l2 11M494 445l-2 -16M494 445l-16 1M494 445l20 15M494 445l-5 7M710 227l2 11M717 228l11 9M696 239l-3 -14M696 239l16 -1M696 239l-17 1M696 239l-14 17M682 256l2 16M682 256l16 -1M682 256l18 15M682 256l-14 17M668 273l2 16M668 273l-3 -16M668 273l-14 17M654 290l-3 -16M654 290l16 -1M654 290l-17 1M654 290l18 15M654 290l-14 17M640 307l2 16M640 307l16 -1M640 307l-14 17M626 324l2 16M626 324l-3 -16M626 324l16 -1M626 324l-17 1M612 341l2 16M612 341l-3 -16M612 341l16 -1M612 341l-17 1M612 341l-14 17M598 358l-3 -16M598 358l16 -1M598 358l-17 1M598 358l18 15M584 375l2 16M584 375l-3 -16M584 375l16 -1M584 375l-17 1M584 375l-14 17M570 392l2 16M570 392l18 15M570 392l-14 17M556 409l2 16M556 409l-3 -16M556 409l16 -1M556 409l-17 1M556 409l18 15M556 409l-14 17M542 426l-3 -16M542 426l-17 1M542 426l18 15M528 443l2 16M528 443l-3 -16M528 443l16 -1M528 443l-17 1M528 443l18 15M528 443l-14 17M514 460l0 3M514 460l-3 -16M514 460l16 -1M514 460l-2 2M734 230l-6 7M728 237l3 16M728 237l-1 -8M728 237l17 -1M728 237l-16 1M728 237l20 15M728 237l-14 17M714 254l-2 -16M714 254l17 -1M700 271l3 16M700 271l17 -1M700 271l-16 1M686 288l-2 -16M686 288l-16 1M686 288l20 15M686 288l-14 17M672 305l3 16M672 305l-2 -16M672 305l17 -1M672 305l-16 1M672 305l-14 17M658 322l3 16M658 322l17 -1M658 322l-16 1M658 322l20 15M644 339l-2 -16M644 339l-16 1M644 339l20 15M630 356l-2 -16M630 356l20 15M616 373l3 16M616 373l-2 -16M616 373l17 -1M616 373l-16 1M616 373l20 15M602 390l3 16M602 390l17 -1M602 390l-16 1M602 390l20 15M602 390l-14 17M588 407l3 16M588 407l-2 -16M588 407l17 -1M588 407l20 15M588 407l-14 17M574 424l3 16M574 424l-2 -16M574 424l-16 1M574 424l20 15M560 441l3 16M560 441l-2 -16M560 441l17 -1M560 441l-16 1M560 441l20 15M560 441l-14 17M546 458l3 16M546 458l-2 -16M546 458l17 -1M546 458l-16 1M546 458l20 15M540 475l9 -1M762 235l-17 1M762 235l18 15M762 235l-14 17M748 252l-3 -16M748 252l16 -1M748 252l-17 1M748 252l18 15M748 252l-14 17M734 269l2 16M734 269l-3 -16M734 269l16 -1M734 269l-17 1M734 269l18 15M734 269l-14 17M720 286l2 16M720 286l-3 -16M720 286l16 -1M720 286l18 15M720 286l-14 17M706 303l-3 -16M706 303l-17 1M706 303l18 15M692 320l2 16M692 320l16 -1M692 320l-17 1M692 320l-14 17M678 337l2 16M678 337l-3 -16M678 337l16 -1M678 337l-17 1M678 337l18 15M678 337l-14 17M664 354l2 16M664 354l-14 17M650 371l2 16M650 371l-3 -16M650 371l16 -1M636 388l2 16M636 388l16 -1M636 388l-17 1M636 388l18 15M622 405l2 16M622 405l-3 -16M622 405l16 -1M622 405l-17 1M622 405l18 15M622 405l-14 17M608 422l-3 -16M594 439l2 16M594 439l-3 -16M594 439l-17 1M594 439l-14 17M580 456l2 16M580 456l16 -1M580 456l18 15M566 473l2 14M566 473l-3 -16M566 473l16 -1M566 473l-8 9M550 479l-1 -5M795 237l2 12M800 237l14 11M792 236l-12 14M780 250l-2 -15M780 250l17 -1M780 250l-14 17M766 267l-2 -16M766 267l17 -1M766 267l-16 1M766 267l20 15M752 284l3 16M752 284l-2 -16M752 284l17 -1M752 284l-16 1M752 284l-14 17M738 301l-2 -16M738 301l17 -1M738 301l-16 1M738 301l20 15M738 301l-14 17M724 318l3 16M724 318l-16 1M724 318l20 15M710 335l-2 -16M710 335l17 -1M710 335l-16 1M710 335l20 15M710 335l-14 17M696 352l3 16M696 352l-2 -16M696 352l17 -1M696 352l-16 1M696 352l-14 17M682 369l-2 -16M682 369l17 -1M682 369l-14 17M668 386l-2 -16M668 386l20 15M668 386l-14 17M654 403l3 16M654 403l17 -1M654 403l-16 1M654 403l20 15M654 403l-14 17M640 420l3 16M640 420l-2 -16M640 420l-16 1M640 420l-14 17M626 437l-2 -16M626 437l-16 1M612 454l3 16M612 454l-16 1M612 454l20 15M612 454l-14 17M598 471l3 16M598 471l-2 -16M598 471l17 -1M598 471l-16 1M598 471l-14 17M584 488l1 6M584 488l-2 -16M584 488l17 -1M584 488l-11 1M584 488l17 13M584 488l-3 4M829 241l1 6M814 248l2 16M814 248l-2 -9M814 248l16 -1M814 248l-17 1M800 265l2 16M800 265l-3 -16M800 265l16 -1M800 265l-17 1M800 265l18 15M800 265l-14 17M786 282l2 16M786 282l-3 -16M786 282l16 -1M786 282l-17 1M786 282l18 15M786 282l-14 17M772 299l2 16M772 299l-3 -16M772 299l16 -1M772 299l18 15M758 316l16 -1M758 316l-14 17M744 333l2 16M744 333l-3 -16M744 333l16 -1M744 333l-17 1M744 333l-14 17M730 350l2 16M730 350l-3 -16M730 350l16 -1M730 350l-17 1M730 350l18 15M716 367l2 16M716 367l16 -1M716 367l-17 1M716 367l18 15M702 384l2 16M702 384l16 -1M702 384l-17 1M702 384l18 15M688 401l2 16M688 401l-3 -16M688 401l18 15M674 418l-3 -16M674 418l16 -1M674 418l-17 1M674 418l18 15M674 418l-14 17M660 435l-3 -16M660 435l16 -1M660 435l18 15M660 435l-14 17M646 452l2 16M646 452l-3 -16M646 452l18 15M646 452l-14 17M632 469l2 16M632 469l18 15M632 469l-14 17M618 486l-17 1M618 486l18 15M618 486l-14 16M603 502l-2 -15M605 503l15 -1M849 243l-3 3M846 246l3 16M846 246l0 -4M846 246l17 -1M846 246l20 15M846 246l-14 17M832 263l3 16M832 263l-2 -16M832 263l17 -1M832 263l-16 1M832 263l-14 17M818 280l3 16M818 280l-2 -16M818 280l17 -1M818 280l-16 1M818 280l20 15M818 280l-14 17M804 297l20 15M804 297l-14 17M790 314l17 -1M790 314l20 15M790 314l-14 17M776 331l3 16M776 331l-2 -16M776 331l-16 1M776 331l20 15M762 348l3 16M762 348l-2 -16M762 348l-16 1M762 348l-14 17M748 365l3 16M748 365l-2 -16M748 365l17 -1M748 365l20 15M748 365l-14 17M734 382l-2 -16M734 382l17 -1M734 382l-14 17M720 399l3 16M720 399l17 -1M720 399l-16 1M720 399l20 15M720 399l-14 17M706 416l-14 17M692 433l3 16M692 433l17 -1M692 433l-16 1M692 433l-14 17M678 450l3 16M678 450l-2 -16M678 450l-14 17M664 467l3 16M664 467l-2 -16M664 467l-16 1M664 467l20 15M664 467l-14 17M650 484l3 16M650 484l-2 -16M650 484l17 -1M636 501l3 16M636 501l-2 -16M636 501l17 -1M636 501l-16 1M636 501l20 15M636 501l-9 11M621 510l-1 -8M880 246l2 14M867 245l-4 0M878 246l-12 15M866 261l2 16M866 261l-3 -16M866 261l-17 1M866 261l18 15M852 278l16 -1M852 278l18 15M838 295l2 16M838 295l-3 -16M838 295l16 -1M838 295l18 15M838 295l-14 17M824 312l2 16M824 312l-3 -16M824 312l-17 1M824 312l-14 17M810 329l-17 1M810 329l18 15M810 329l-14 17M796 346l2 16M796 346l-3 -16M796 346l18 15M796 346l-14 17M782 363l-3 -16M782 363l16 -1M782 363l-14 17M768 380l-14 17M754 397l-3 -16M754 397l16 -1M754 397l-17 1M740 414l2 16M740 414l-3 -16M740 414l16 -1M740 414l-17 1M740 414l-14 17M726 431l-3 -16M726 431l16 -1M726 431l-14 17M712 448l2 16M712 448l-3 -16M712 448l16 -1M712 448l-14 17M698 465l16 -1M698 465l-17 1M698 465l-14 17M684 482l2 16M684 482l16 -1M684 482l-14 17M670 499l-3 -16M670 499l-17 1M656 516l1 9M656 516l-3 -16M656 516l16 -1M656 516l-17 1M656 516l-6 6M924 251l8 6M907 249l-9 10M898 259l3 16M898 259l17 -1M898 259l-16 1M898 259l-14 17M884 276l3 16M884 276l17 -1M884 276l-16 1M884 276l20 15M884 276l-14 17M870 293l3 16M870 293l-16 1M856 310l-2 -16M856 310l17 -1M856 310l-16 1M856 310l20 15M856 310l-14 17M842 327l3 16M842 327l17 -1M842 327l-14 17M828 344l3 16M828 344l-2 -16M828 344l20 15M814 361l3 16M814 361l-2 -16M814 361l17 -1M814 361l20 15M800 378l3 16M800 378l-2 -16M800 378l17 -1M786 395l-2 -16M786 395l17 -1M786 395l-16 1M772 412l3 16M772 412l17 -1M772 412l-14 17M758 429l3 16M758 429l-2 -16M758 429l17 -1M758 429l-16 1M758 429l20 15M758 429l-14 17M744 446l17 -1M744 446l-16 1M730 463l3 16M730 463l-2 -16M730 463l17 -1M730 463l-16 1M730 463l-14 17M716 480l17 -1M716 480l-16 1M716 480l20 15M716 480l-14 17M702 497l3 16M702 497l17 -1M702 497l-16 1M702 497l20 15M702 497l-14 17M688 514l-2 -16M688 514l-16 1M688 514l-14 17M674 531l1 2M674 531l-2 -16M674 531l17 -1M674 531l-3 0M674 531l6 4M674 531l-1 1M935 252l-3 5M932 257l2 16M932 257l-1 -5M932 257l16 -1M932 257l-17 1M932 257l18 15M918 274l-3 -16M918 274l-17 1M918 274l18 15M918 274l-14 17M904 291l2 16M904 291l-3 -16M904 291l-17 1M890 308l-3 -16M890 308l16 -1M890 308l-17 1M890 308l-14 17M876 325l2 16M876 325l-3 -16M876 325l16 -1M876 325l18 15M876 325l-14 17M862 342l2 16M862 342l16 -1M862 342l-17 1M862 342l18 15M862 342l-14 17M848 359l2 16M848 359l-3 -16M848 359l-17 1M848 359l-14 17M834 376l2 16M834 376l16 -1M834 376l18 15M834 376l-14 17M820 393l16 -1M820 393l-17 1M820 393l18 15M820 393l-14 17M806 410l2 16M806 410l-3 -16M806 410l16 -1M806 410l-17 1M806 410l18 15M806 410l-14 17M792 427l2 16M792 427l-3 -16M792 427l16 -1M792 427l-17 1M792 427l18 15M778 444l2 16M778 444l-3 -16M778 444l16 -1M778 444l-14 17M764 461l-3 -16M764 461l16 -1M764 461l-17 1M764 461l18 15M750 478l2 16M750 478l-3 -16M750 478l16 -1M750 478l18 15M736 495l2 16M736 495l-3 -16M736 495l16 -1M736 495l-17 1M736 495l18 15M736 495l-14 17M722 512l2 16M722 512l-3 -16M722 512l16 -1M722 512l-17 1M722 512l18 15M722 512l-14 17M708 529l-17 1M708 529l-12 13M693 541l-2 -11M965 256l2 13M964 256l-14 16M950 272l3 16M950 272l-2 -16M950 272l-16 1M950 272l-14 17M936 289l3 16M936 289l-2 -16M936 289l17 -1M936 289l20 15M922 306l3 16M922 306l-2 -16M922 306l-16 1M922 306l-14 17M908 323l3 16M908 323l-2 -16M908 323l-16 1M908 323l20 15M908 323l-14 17M894 340l3 16M894 340l-16 1M894 340l-14 17M880 357l3 16M880 357l-2 -16M880 357l-16 1M880 357l20 15M866 374l-16 1M866 374l-14 17M852 391l3 16M852 391l17 -1M852 391l20 15M852 391l-14 17M838 408l3 16M838 408l17 -1M838 408l20 15M838 408l-14 17M824 425l-2 -16M824 425l17 -1M824 425l-16 1M824 425l20 15M824 425l-14 17M810 442l3 16M810 442l-2 -16M810 442l17 -1M810 442l-16 1M810 442l20 15M810 442l-14 17M796 459l3 16M796 459l-2 -16M796 459l17 -1M796 459l-16 1M796 459l20 15M796 459l-14 17M782 476l3 16M782 476l-2 -16M782 476l17 -1M782 476l-16 1M782 476l20 15M782 476l-14 17M768 493l3 16M768 493l-2 -16M768 493l17 -1M768 493l-16 1M768 493l20 15M754 510l3 16M754 510l17 -1M754 510l-14 17M740 527l3 16M740 527l17 -1M740 527l-16 1M740 527l20 15M740 527l-14 17M726 544l-2 -16M726 544l-16 1M726 544l20 15M726 544l-6 8M711 549l-1 -4M965 287l-12 1M956 304l2 16M956 304l-3 -16M956 304l-17 1M942 321l-3 -16M942 321l16 -1M942 321l-17 1M942 321l18 14M942 321l-14 17M928 338l-3 -16M928 338l16 -1M928 338l-17 1M928 338l18 15M928 338l-14 17M914 355l2 16M914 355l16 -1M914 355l-14 17M900 372l2 16M900 372l-3 -16M900 372l16 -1M900 372l18 15M900 372l-14 17M886 389l-3 -16M886 389l16 -1M872 406l2 16M872 406l-3 -16M872 406l16 -1M872 406l-17 1M872 406l18 15M872 406l-14 17M858 423l2 16M858 423l-17 1M844 440l-3 -16M844 440l16 -1M844 440l-17 1M844 440l18 15M844 440l-14 17M830 457l2 16M830 457l-3 -16M830 457l-17 1M830 457l18 15M830 457l-14 17M816 474l2 16M816 474l-3 -16M816 474l16 -1M816 474l-14 17M802 491l2 16M802 491l-3 -16M802 491l-17 1M802 491l-14 17M788 508l2 16M788 508l-3 -16M788 508l16 -1M788 508l-17 1M788 508l18 15M774 525l2 16M774 525l16 -1M774 525l-17 1M774 525l18 15M774 525l-14 17M760 542l2 16M760 542l-3 -16M760 542l18 15M760 542l-14 17M746 559l-3 -16M746 559l16 -1M746 559l-10 1M746 559l13 11M961 320l-3 0M960 333l-2 -13M960 337l-14 16M946 353l3 16M946 353l-2 -16M946 353l12 -1M946 353l-14 17M932 370l-2 -16M932 370l20 15M932 370l-14 17M918 387l3 16M918 387l17 -1M918 387l-16 1M918 387l-14 17M904 404l3 16M904 404l-2 -16M904 404l-16 1M904 404l-14 17M890 421l3 16M890 421l-2 -16M890 421l17 -1M890 421l-16 1M890 421l20 15M890 421l-14 17M876 438l3 16M876 438l-2 -16M876 438l17 -1M876 438l-14 17M862 455l3 16M862 455l-2 -16M862 455l17 -1M862 455l-16 1M862 455l20 15M862 455l-14 17M848 472l3 16M848 472l-2 -16M848 472l17 -1M848 472l-16 1M848 472l20 15M848 472l-14 17M834 489l3 16M834 489l-2 -16M834 489l17 -1M834 489l-16 1M820 506l3 16M820 506l-2 -16M820 506l-16 1M806 523l3 16M806 523l-2 -16M806 523l17 -1M806 523l-16 1M806 523l20 15M806 523l-14 17M792 540l17 -1M792 540l-16 1M792 540l20 15M792 540l-14 17M778 557l3 16M778 557l-2 -16M778 557l-16 1M778 557l20 15M768 574l13 -1M956 369l-7 0M955 381l-3 4M952 385l1 12M952 385l3 0M952 385l-14 17M938 402l-3 -16M938 402l15 -1M938 402l14 11M938 402l-14 17M924 419l-17 1M924 419l18 15M910 436l2 16M910 436l-3 -16M910 436l16 -1M910 436l-17 1M910 436l18 15M910 436l-14 17M896 453l2 16M896 453l16 -1M896 453l-17 1M896 453l-14 17M882 470l2 16M882 470l-3 -16M882 470l18 15M882 470l-14 17M868 487l2 16M868 487l16 -1M868 487l-17 1M868 487l-14 17M854 504l2 16M854 504l-3 -16M854 504l16 -1M854 504l18 15M854 504l-14 17M840 521l2 16M840 521l-3 -16M840 521l-17 1M840 521l18 15M826 538l-3 -16M826 538l16 -1M826 538l-17 1M826 538l-14 17M812 555l16 -1M812 555l-17 1M812 555l18 15M812 555l-14 17M798 572l-3 -16M798 572l16 -1M798 572l18 15M798 572l-9 11M782 580l-1 -7M951 417l-11 1M951 424l-9 10M942 434l-2 -16M942 434l8 0M942 434l-16 1M942 434l7 5M942 434l-14 17M928 451l-16 1M928 451l18 14M928 451l-14 17M914 468l3 16M914 468l-2 -16M914 468l20 15M914 468l-14 17M900 485l3 16M886 502l-2 -16M886 502l17 -1M886 502l-16 1M886 502l20 15M872 519l3 16M872 519l-2 -16M872 519l17 -1M872 519l-16 1M872 519l-14 17M858 536l3 16M858 536l-2 -16M858 536l17 -1M858 536l-14 17M844 553l-2 -16M844 553l17 -1M844 553l-16 1M844 553l-14 17M830 570l3 16M830 570l-16 1M830 570l20 15M830 570l-14 17M816 587l-2 -16M816 587l-15 1M816 587l-4 6M948 450l-3 0M934 483l-3 -16M934 483l11 -1M934 483l-17 1M934 483l10 8M934 483l-14 17M920 500l-3 -16M920 500l16 -1M920 500l18 15M920 500l-14 17M906 517l2 16M906 517l-3 -16M906 517l16 -1M906 517l-17 1M906 517l18 15M906 517l-14 17M892 534l-3 -16M892 534l16 -1M892 534l-17 1M892 534l18 15M878 551l2 16M878 551l-3 -16M878 551l16 -1M878 551l-17 1M864 568l-3 -16M864 568l16 -1M850 585l2 16M850 585l16 -1M850 585l-17 1M836 602l-3 -16M836 602l16 -1M836 602l-2 0M836 602l2 2M943 499l-7 0M942 511l-4 4M938 515l3 0M938 515l-16 1M938 515l-14 17M924 532l3 16M924 532l-2 -16M924 532l-16 1M910 549l3 16M910 549l-2 -16M910 549l17 -1M910 549l-16 1M896 566l3 16M896 566l-2 -16M896 566l-16 1M896 566l20 15M896 566l-14 17M882 583l-2 -16M882 583l-16 1M882 583l20 15M882 583l-14 17M868 600l-2 -16M868 600l20 15M868 600l-10 13M854 611l-2 -10M866 616l5 0M937 555l-7 9M930 564l-17 1M930 564l-14 17M916 581l2 16M916 581l-17 1M916 581l17 14M916 581l-14 17M902 598l-3 -16M902 598l16 -1M902 598l-14 17M888 615l1 11M888 615l-3 -16M888 615l16 -1M888 615l-17 1M888 615l-7 8M935 580l-3 0M934 590l-2 -10M933 598l-13 15M920 613l3 16M920 613l-2 -16M920 613l11 -1M920 613l10 8M906 630l1 4M906 630l-2 -16M906 630l17 -1M906 630l-7 0M906 630l11 8M906 630l-2 3M929 629l-6 0M925 642l-2 -13M959 302l6 5M950 301l14 11M941 300l22 18M932 299l30 24M923 298l30 24M913 297l30 24M905 296l29 24M895 295l30 24M886 294l30 23M877 293l30 23M868 292l29 23M859 291l29 23M850 290l29 23M840 289l30 23M831 288l30 23M822 287l29 23M813 285l29 24M804 284l29 24M794 283l30 24M785 282l30 24M777 281l29 23M767 280l29 23M758 279l29 23M749 278l29 23M740 277l29 23M731 276l29 23M721 275l29 23M712 274l29 23M703 273l29 23M694 272l29 23M685 271l29 23M675 270l29 23M666 269l29 22M657 268l29 22M648 267l29 22M639 265l29 23M630 264l29 23M621 263l28 23M612 262l28 23M602 261l29 23M593 260l29 23M584 259l29 23M575 258l28 23M566 257l28 23M557 256l28 22M547 255l29 22M538 254l29 22M529 253l28 22M520 252l28 22M511 251l28 22M502 250l28 22M493 249l28 22M484 248l28 22M474 247l28 22M465 245l28 23M456 244l28 23M447 243l28 22M438 242l28 22M428 241l28 22M419 240l28 22M410 239l28 22M401 238l28 22M392 237l28 22M383 236l27 22M374 235l27 22M365 234l27 22M355 233l28 22M346 232l28 22M337 231l28 21M328 230l27 21M319 229l27 21M309 228l28 21M300 227l28 21M291 225l28 22M282 224l27 22M273 223l27 22M264 222l27 22M255 221l27 22M246 220l27 22M236 219l27 22M227 218l27 21M218 217l27 21M209 216l27 21M200 215l27 21M191 214l27 21M181 213l27 21M172 212l27 21M163 211l27 21M157 212l24 19M157 218l15 12M157 224l5 5M964 313l-7 9M965 304l-15 18M959 302l-15 19M953 302l-15 18M947 301l-15 18M940 300l-15 19M934 299l-15 19M928 299l-15 18M922 298l-16 18M915 297l-15 19M909 297l-15 18M903 296l-15 18M896 295l-15 18M890 294l-15 19M884 294l-15 18M877 293l-15 18M871 292l-15 18M865 291l-15 19M859 291l-15 18M852 290l-15 18M846 289l-15 18M840 289l-15 18M833 288l-15 18M827 287l-15 18M821 286l-15 18M814 286l-14 18M808 285l-15 18M802 284l-15 18M795 283l-14 19M789 283l-15 18M783 282l-15 18M777 281l-15 18M770 281l-14 18M764 280l-15 18M758 279l-15 18M751 278l-14 18M745 278l-15 18M739 277l-15 18M732 276l-14 18M726 276l-14 17M720 275l-15 18M714 274l-15 18M707 273l-14 18M701 273l-15 17M695 272l-15 18M688 271l-14 18M682 270l-14 18M676 270l-15 17M669 269l-14 18M663 268l-14 18M657 268l-15 17M651 267l-15 17M644 266l-14 18M638 265l-14 18M632 265l-15 17M625 264l-14 18M619 263l-14 18M613 262l-15 18M606 262l-14 17M600 261l-14 18M594 260l-15 18M588 260l-15 17M581 259l-14 17M575 258l-14 18M569 257l-15 18M562 257l-14 17M556 256l-14 17M550 255l-15 18M543 254l-14 18M537 254l-14 17M531 253l-15 17M525 252l-15 18M518 252l-14 17M512 251l-14 17M506 250l-15 17M499 249l-14 18M493 249l-14 17M487 248l-15 17M480 247l-14 17M474 247l-14 17M468 246l-14 17M462 245l-15 17M455 244l-14 17M449 244l-14 17M443 243l-15 17M436 242l-14 17M430 241l-14 18M424 241l-14 17M417 240l-14 17M411 239l-14 17M405 239l-14 17M399 238l-15 17M392 237l-14 17M386 236l-14 17M380 236l-14 17M373 235l-14 17M367 234l-14 17M361 233l-14 17M354 233l-13 17M348 232l-14 17M342 231l-14 17M335 231l-13 16M329 230l-14 17M323 229l-14 17M317 228l-14 17M310 228l-13 16M304 227l-14 17M298 226l-14 17M291 225l-13 17M285 225l-14 16M279 224l-14 17M272 223l-13 17M266 223l-13 16M260 222l-14 17M254 221l-14 17M247 220l-13 17M241 220l-14 16M235 219l-14 17M228 218l-13 17M222 218l-13 16M216 217l-14 16M209 216l-13 17M203 215l-13 17M197 215l-14 16M191 214l-14 16M184 213l-13 17M178 212l-13 17M172 212l-14 16M165 211l-8 10M159 210l-2 3M157 212l13 0M157 216l33 -2M157 219l53 -3M157 223l75 -4M157 227l95 -6M169 229l103 -6M189 232l102 -7M208 234l103 -6M229 237l104 -7M249 239l104 -6M269 241l104 -6M288 243l105 -6M308 246l105 -7M329 248l105 -6M349 251l105 -7M368 253l106 -7M388 255l106 -6M407 258l107 -7M427 260l107 -7M448 262l107 -6M468 265l107 -7M487 267l108 -7M507 269l108 -6M527 272l108 -7M548 274l108 -7M567 276l109 -6M587 279l109 -7M607 281l109 -7M626 283l110 -6M647 286l111 -7M667 288l111 -7M687 290l111 -6M706 293l111 -7M726 295l111 -7M746 297l111 -6M767 300l112 -7M786 302l113 -7M806 304l113 -6M826 307l113 -7M845 309l114 -7M866 312l99 -6M886 314l78 -5M906 316l58 -3M925 319l39 -3M945 321l18 -1M961 333l2 1M951 332l11 8M942 330l19 16M933 329l28 22M924 328l34 28M914 327l35 28M905 326l35 27M896 325l35 27M887 324l35 27M877 323l35 27M868 322l35 27M859 320l34 28M850 319l34 28M841 318l34 27M831 317l35 27M822 316l35 27M813 315l34 27M804 314l34 27M795 313l34 27M785 312l34 27M776 310l34 27M767 309l34 27M757 308l34 27M748 307l34 27M739 306l34 27M730 305l34 27M721 304l34 27M711 303l34 26M702 302l34 26M693 301l34 26M684 299l33 27M675 298l33 27M666 297l33 27M656 296l33 26M647 295l33 26M637 294l34 26M628 293l34 26M619 292l34 26M610 290l33 27M601 289l33 27M591 288l33 26M582 287l33 26M573 286l33 26M564 285l33 26M555 284l33 26M546 283l32 26M536 282l33 26M527 281l33 25M517 279l33 26M508 278l33 26M499 277l33 26M490 276l32 26M481 275l32 26M472 274l32 26M462 273l33 25M453 272l33 25M444 271l32 25M435 269l32 26M426 268l32 26M416 267l32 26M407 266l32 25M398 265l32 25M388 264l33 25M379 263l32 25M370 262l32 25M361 261l32 25M352 259l32 26M342 258l32 25M333 257l32 25M324 256l32 25M315 255l31 25M306 254l31 25M296 253l32 25M287 252l32 25M278 251l31 24M269 249l31 25M259 248l32 25M250 247l32 25M241 246l31 25M232 245l31 25M222 244l31 24M213 243l31 24M204 242l31 24M195 241l31 24M186 239l31 25M177 238l31 25M167 237l31 25M158 236l31 24M156 241l23 18M155 246l15 12M154 251l7 6M961 347l-7 8M963 337l-15 17M959 332l-18 22M953 332l-18 21M946 331l-17 21M940 330l-17 21M934 329l-18 22M928 329l-18 21M921 328l-17 21M915 327l-17 21M909 326l-18 22M903 326l-18 21M896 325l-17 21M890 324l-17 21M884 323l-18 21M878 323l-18 21M871 322l-17 21M865 321l-17 21M859 320l-18 21M852 320l-17 21M846 319l-17 21M840 318l-17 21M833 317l-17 21M827 317l-17 20M821 316l-17 21M815 315l-17 21M808 314l-17 21M802 314l-17 20M796 313l-17 21M789 312l-17 21M783 311l-17 21M777 311l-17 20M771 310l-17 20M764 309l-17 21M758 308l-17 21M752 308l-17 20M746 307l-17 20M739 306l-17 21M733 305l-17 21M727 305l-17 20M720 304l-16 20M714 303l-17 20M708 302l-17 21M702 302l-17 20M695 301l-16 20M689 300l-17 20M683 299l-17 21M677 299l-17 20M670 298l-16 20M664 297l-17 20M658 296l-17 20M652 296l-17 20M645 295l-16 20M639 294l-17 20M633 293l-17 20M626 292l-16 21M620 292l-17 20M614 291l-17 20M608 290l-17 20M601 289l-16 20M595 289l-17 20M589 288l-17 20M583 287l-17 20M576 286l-16 20M570 286l-17 20M564 285l-17 20M557 284l-16 20M551 283l-16 20M545 283l-17 20M538 282l-16 20M532 281l-16 20M526 280l-16 20M520 280l-16 19M513 279l-16 20M507 278l-16 20M501 277l-16 20M494 277l-16 19M488 276l-16 20M482 275l-16 20M476 274l-17 20M469 274l-16 19M463 273l-16 19M457 272l-16 20M451 271l-17 20M444 271l-16 19M438 270l-16 19M432 269l-16 20M426 268l-17 20M419 268l-16 19M413 267l-16 19M407 266l-16 19M400 265l-16 20M394 265l-16 19M388 264l-16 19M382 263l-16 19M375 262l-15 20M369 262l-16 19M363 261l-16 19M357 260l-16 19M350 259l-15 19M344 258l-16 20M338 258l-16 19M332 257l-16 19M325 256l-16 19M319 255l-16 20M313 255l-16 19M306 254l-16 19M300 253l-16 19M294 252l-16 20M288 252l-16 19M281 251l-16 19M275 250l-16 19M269 249l-16 19M262 249l-15 19M256 248l-15 19M250 247l-16 19M243 246l-15 19M237 246l-15 19M231 245l-15 19M225 244l-16 19M218 243l-15 19M212 243l-15 18M206 242l-15 19M200 241l-16 19M193 240l-15 19M187 240l-15 18M181 239l-16 19M174 238l-15 19M168 237l-15 19M162 237l-7 8M960 333l1 12M956 332l3 24M952 332l4 23M948 331l4 24M945 331l3 24M941 330l4 24M937 330l4 24M934 329l3 24M930 329l3 24M926 329l4 23M922 328l4 24M919 328l3 23M915 327l3 24M911 327l4 23M907 326l4 24M904 326l3 23M900 325l3 24M896 325l4 24M892 324l4 24M889 324l3 24M885 324l3 23M881 323l4 24M877 323l4 23M874 322l3 24M870 322l4 23M866 321l4 24M862 321l4 23M859 320l3 24M855 320l4 23M851 320l4 23M847 319l4 24M844 319l3 23M840 318l4 24M836 318l4 23M833 317l3 24M829 317l3 23M825 316l4 24M821 316l4 23M818 316l3 23M814 315l4 23M810 315l4 23M806 314l4 23M803 314l3 23M799 313l4 23M795 313l4 23M791 312l4 24M788 312l3 23M784 311l4 24M780 311l4 23M776 311l4 23M773 310l3 23M769 310l4 23M765 309l4 23M762 309l3 23M758 308l4 23M754 308l4 23M750 307l4 23M747 307l3 23M743 307l4 23M739 306l4 23M735 306l4 23M732 305l3 23M728 305l4 23M724 304l4 23M721 304l3 23M717 303l4 23M713 303l4 23M709 302l4 23M706 302l3 23M702 302l4 22M698 301l4 23M694 301l4 23M691 300l3 23M687 300l4 23M683 299l4 23M680 299l3 23M676 298l3 23M672 298l4 23M668 298l4 22M665 297l3 23M661 297l3 22M657 296l4 23M653 296l4 22M650 295l3 23M646 295l3 22M642 294l4 23M638 294l4 23M635 293l3 23M631 293l4 23M627 293l4 22M624 292l3 23M620 292l3 22M616 291l4 23M612 291l4 22M609 290l3 23M605 290l3 22M601 289l4 23M597 289l4 22M594 289l3 22M590 288l3 23M586 288l4 22M582 287l4 23M579 287l3 22M575 286l3 23M571 286l4 22M567 285l4 23M564 285l3 22M560 284l3 23M556 284l4 22M552 284l4 22M549 283l3 22M545 283l3 22M541 282l4 23M537 282l4 22M534 281l3 23M530 281l4 22M526 280l4 23M523 280l3 22M519 280l3 22M515 279l4 22M511 279l4 22M508 278l3 22M504 278l3 22M500 277l4 22M496 277l4 22M493 276l3 23M489 276l3 22M485 276l4 22M481 275l4 22M478 275l3 22M474 274l3 22M470 274l4 22M467 273l3 22M463 273l3 22M459 272l3 22M455 272l4 22M452 271l3 22M448 271l3 22M444 271l4 21M440 270l4 22M437 270l3 22M433 269l3 22M429 269l4 22M426 268l3 22M422 268l3 22M418 267l3 22M414 267l4 22M411 267l3 21M407 266l3 22M403 266l3 21M399 265l4 22M396 265l3 21M392 264l3 22M388 264l4 22M385 263l3 22M381 263l3 22M377 262l3 22M373 262l4 22M370 262l3 21M366 261l3 22M362 261l3 21M358 260l4 22M355 260l3 21M351 259l3 22M347 259l3 21M343 258l4 22M340 258l3 22M336 258l3 21M332 257l4 22M329 257l3 21M325 256l3 22M321 256l3 21M317 255l4 22M314 255l3 21M310 254l3 22M306 254l3 21M302 253l4 22M299 253l3 21M295 253l3 21M291 252l3 22M287 252l4 21M284 251l3 22M280 251l3 21M276 250l4 22M272 250l4 21M269 249l3 22M265 249l3 21M261 249l4 21M257 248l4 21M254 248l3 21M250 247l3 21M246 247l4 21M242 246l4 21M239 246l3 21M235 245l3 22M231 245l4 21M227 244l4 22M224 244l3 21M220 244l4 21M216 243l4 21M213 243l3 21M209 242l3 21M205 242l4 21M201 241l4 21M198 241l3 21M194 240l3 21M190 240l4 21M186 240l4 21M183 239l3 21M179 239l3 21M175 238l4 21M171 238l4 21M168 237l3 21M164 237l3 21M160 236l4 21M157 237l3 20M155 247l1 9M150 165l-16 38M150 165l-6 38M150 165l6 38M150 165l16 38M181 172l-16 38M181 172l-6 38M181 172l6 38M181 172l16 38M213 172l-16 38M213 172l-6 38M213 172l6 38M213 172l16 38M244 180l-16 38M244 180l-6 38M244 180l6 38M244 180l16 38M276 179l-16 38M276 179l-6 38M276 179l6 38M276 179l16 38M307 186l-16 38M307 186l-6 38M307 186l6 38M307 186l16 38M339 186l-16 38M339 186l-6 38M339 186l6 38M339 186l16 38M370 194l-16 38M370 194l-6 38M370 194l6 38M370 194l16 38M402 193l-16 38M402 193l-6 38M402 193l6 38M402 193l16 38M433 200l-16 38M433 200l-6 38M433 200l6 38M433 200l16 38M465 200l-16 38M465 200l-6 38M465 200l6 38M465 200l16 38M496 208l-16 38M496 208l-6 38M496 208l6 38M496 208l16 38M528 207l-16 38M528 207l-6 38M528 207l6 38M528 207l16 38M559 214l-16 38M559 214l-6 38M559 214l6 38M559 214l16 38M590 214l-16 38M590 214l-6 38M590 214l6 38M590 214l16 38M622 222l-16 38M622 222l-6 38M622 222l6 38M622 222l16 38M653 221l-16 38M653 221l-6 38M653 221l6 38M653 221l16 38M685 228l-16 38M685 228l-6 38M685 228l6 38M685 228l16 38M716 228l-16 38M716 228l-6 38M716 228l6 38M716 228l16 38M748 236l-16 38M748 236l-6 38M748 236l6 38M748 236l16 38M779 235l-16 38M779 235l-6 38M779 235l6 38M779 235l16 38M811 242l-16 38M811 242l-6 38M811 242l6 38M811 242l16 38M842 242l-16 38M842 242l-6 38M842 242l6 38M842 242l16 38M874 250l-16 38M874 250l-6 38M874 250l6 38M874 250l16 38M905 249l-16 38M905 249l-6 38M905 249l6 38M905 249l16 38M937 256l-16 38M937 256l-6 38M937 256l6 38M937 256l16 38M968 256l-16 38M968 256l-6 38M968 256l6 38M968 256l16 38" stroke="#4050f0" stroke-width="1" fill="none"/><path d="M158 230L178 227L576 279L881 312L953 322" transform="translate(0 -2)" stroke="#4050f0" stroke-width="3" fill="none"/><path d="M957 336L881 323L576 288L181 236L158 232" transform="translate(0 2)" stroke="#4050f0" stroke-width="3" fill="none"/><path d="M158 230L178 227L576 279L881 312L953 322L957 336L881 323L576 288L181 236L158 232Z" fill="url(#dith)"/><defs><pattern id="dith" width="3" height="3" patternUnits="userSpaceOnUse"><rect width="3" height="3" fill="#f03060"/><rect x="1" y="1" width="1" height="1" fill="#4050f0"/><rect x="2" y="0" width="1" height="1" fill="#4050f0"/></pattern></defs><path d="M880 324L880 305L887 304L891 299L896 301L901 295L905 299L910 294L914 301L919 297L923 304L929 301L932 309L939 308L941 315L948 317L950 325L957 330L961 339L945 336L893 328Z" fill="url(#dith2)"/><defs><pattern id="dith2" width="4" height="4" patternUnits="userSpaceOnUse"><rect width="4" height="4" fill="#f03060"/><rect x="1" y="1" width="1" height="2" fill="#8fa6e6"/><rect x="3" y="3" width="1" height="1" fill="#4050f0"/></pattern></defs><path d="M843 580l40 -22M843 580l20 -62M843 580l-25 -12M843 580l-40 18M843 580l10 48M843 580l30 53M843 580l50 28M843 580l70 8M843 580l-15 28M843 580l-60 0" stroke="#4050f0" fill="none"/><path d="M843 580L931 584M849 584L929 600M853 582L931 590" stroke="#33ee44" fill="none"/><path d="M845 579L931 581" stroke="#aacc22" fill="none"/><path d="M146 328l-30 -31M146 328l-18 25M146 328l-12 -20M146 328l-38 14M97 322l19 -25M97 322l31 31M97 322l37 -14M97 322l11 20M116 297l18 11M116 297l-8 45M128 353l6 -45M128 353l-20 -11M146 328l-49 -6M116 297l12 56M134 308l-26 34M140 300l-30 -31M140 300l-18 25M140 300l-12 -20M140 300l-38 14M91 294l19 -25M91 294l31 31M91 294l37 -14M91 294l11 20M110 269l18 11M110 269l-8 45M122 325l6 -45M122 325l-20 -11M140 300l-49 -6M110 269l12 56M128 280l-26 34M134 272l-30 -31M134 272l-18 25M134 272l-12 -20M134 272l-38 14M85 266l19 -25M85 266l31 31M85 266l37 -14M85 266l11 20M104 241l18 11M104 241l-8 45M116 297l6 -45M116 297l-20 -11M134 272l-49 -6M104 241l12 56M122 252l-26 34M128 244l-30 -31M128 244l-18 25M128 244l-12 -20M128 244l-38 14M79 238l19 -25M79 238l31 31M79 238l37 -14M79 238l11 20M98 213l18 11M98 213l-8 45M110 269l6 -45M110 269l-20 -11M128 244l-49 -6M98 213l12 56M116 224l-26 34M170 331l-30 -31M170 331l-18 25M170 331l-11 -20M170 331l-37 14M122 325l18 -25M122 325l30 31M122 325l37 -14M122 325l11 20M140 300l19 11M140 300l-7 45M152 356l7 -45M152 356l-19 -11M170 331l-48 -6M140 300l12 56M159 311l-26 34M158 275l-30 -31M158 275l-18 25M158 275l-11 -20M158 275l-37 14M110 269l18 -25M110 269l30 31M110 269l37 -14M110 269l11 20M128 244l19 11M128 244l-7 45M140 300l7 -45M140 300l-19 -11M158 275l-48 -6M128 244l12 56M147 255l-26 34M152 247l-30 -31M152 247l-18 25M152 247l-11 -20M152 247l-37 14M104 241l18 -25M104 241l30 31M104 241l37 -14M104 241l11 20M122 216l19 11M122 216l-7 45M134 272l7 -45M134 272l-19 -11M152 247l-48 -6M122 216l12 56M141 227l-26 34M146 219l-30 -31M146 219l-18 25M146 219l-11 -20M146 219l-37 14M98 213l18 -25M98 213l30 31M98 213l37 -14M98 213l11 20M116 188l19 11M116 188l-7 45M128 244l7 -45M128 244l-19 -11M146 219l-48 -6M116 188l12 56M135 199l-26 34M140 191l-30 -31M140 191l-18 25M140 191l-11 -20M140 191l-37 14M92 185l18 -25M92 185l30 31M92 185l37 -14M92 185l11 20M110 160l19 11M110 160l-7 45M122 216l7 -45M122 216l-19 -11M140 191l-48 -6M110 160l12 56M129 171l-26 34M195 334l-31 -31M195 334l-19 25M195 334l-11 -20M195 334l-37 14M146 328l18 -25M146 328l30 31M146 328l38 -14M146 328l12 20M164 303l20 11M164 303l-6 45M176 359l8 -45M176 359l-18 -11M195 334l-49 -6M164 303l12 56M184 314l-26 34M159 166l-31 -31M159 166l-19 25M159 166l-11 -20M159 166l-37 14M110 160l18 -25M110 160l30 31M110 160l38 -14M110 160l12 20M128 135l20 11M128 135l-6 45M140 191l8 -45M140 191l-18 -11M159 166l-49 -6M128 135l12 56M148 146l-26 34M226 365l-31 -31M226 365l-19 25M226 365l-12 -20M226 365l-38 14M176 359l19 -25M176 359l31 31M176 359l38 -14M176 359l12 20M195 334l19 11M195 334l-7 45M207 390l7 -45M207 390l-19 -11M226 365l-50 -6M195 334l12 56M214 345l-26 34M220 337l-31 -31M220 337l-19 25M220 337l-12 -20M220 337l-38 14M170 331l19 -25M170 331l31 31M170 331l38 -14M170 331l12 20M189 306l19 11M189 306l-7 45M201 362l7 -45M201 362l-19 -11M220 337l-50 -6M189 306l12 56M208 317l-26 34M178 141l-31 -31M178 141l-19 25M178 141l-12 -20M178 141l-38 14M128 135l19 -25M128 135l31 31M128 135l38 -14M128 135l12 20M147 110l19 11M147 110l-7 45M159 166l7 -45M159 166l-19 -11M178 141l-50 -6M147 110l12 56M166 121l-26 34M250 368l-30 -31M250 368l-18 25M250 368l-12 -20M250 368l-38 14M201 362l19 -25M201 362l31 31M201 362l37 -14M201 362l11 20M220 337l18 11M220 337l-8 45M232 393l6 -45M232 393l-20 -11M250 368l-49 -6M220 337l12 56M238 348l-26 34M202 144l-30 -31M202 144l-18 25M202 144l-12 -20M202 144l-38 14M153 138l19 -25M153 138l31 31M153 138l37 -14M153 138l11 20M172 113l18 11M172 113l-8 45M184 169l6 -45M184 169l-20 -11M202 144l-49 -6M172 113l12 56M190 124l-26 34M274 371l-30 -31M274 371l-18 25M274 371l-11 -20M274 371l-37 14M226 365l18 -25M226 365l30 31M226 365l37 -14M226 365l11 20M244 340l19 11M244 340l-7 45M256 396l7 -45M256 396l-19 -11M274 371l-48 -6M244 340l12 56M263 351l-26 34M226 147l-30 -31M226 147l-18 25M226 147l-11 -20M226 147l-37 14M178 141l18 -25M178 141l30 31M178 141l37 -14M178 141l11 20M196 116l19 11M196 116l-7 45M208 172l7 -45M208 172l-19 -11M226 147l-48 -6M196 116l12 56M215 127l-26 34M305 402l-31 -31M305 402l-19 25M305 402l-11 -20M305 402l-37 14M256 396l18 -25M256 396l30 31M256 396l38 -14M256 396l12 20M274 371l20 11M274 371l-6 45M286 427l8 -45M286 427l-18 -11M305 402l-49 -6M274 371l12 56M294 382l-26 34M299 374l-31 -31M299 374l-19 25M299 374l-11 -20M299 374l-37 14M250 368l18 -25M250 368l30 31M250 368l38 -14M250 368l12 20M268 343l20 11M268 343l-6 45M280 399l8 -45M280 399l-18 -11M299 374l-49 -6M268 343l12 56M288 354l-26 34M251 150l-31 -31M251 150l-19 25M251 150l-11 -20M251 150l-37 14M202 144l18 -25M202 144l30 31M202 144l38 -14M202 144l12 20M220 119l20 11M220 119l-6 45M232 175l8 -45M232 175l-18 -11M251 150l-49 -6M220 119l12 56M240 130l-26 34M330 405l-31 -31M330 405l-19 25M330 405l-12 -20M330 405l-38 14M280 399l19 -25M280 399l31 31M280 399l38 -14M280 399l12 20M299 374l19 11M299 374l-7 45M311 430l7 -45M311 430l-19 -11M330 405l-50 -6M299 374l12 56M318 385l-26 34M276 153l-31 -31M276 153l-19 25M276 153l-12 -20M276 153l-38 14M226 147l19 -25M226 147l31 31M226 147l38 -14M226 147l12 20M245 122l19 11M245 122l-7 45M257 178l7 -45M257 178l-19 -11M276 153l-50 -6M245 122l12 56M264 133l-26 34M354 408l-30 -31M354 408l-18 25M354 408l-12 -20M354 408l-38 14M305 402l19 -25M305 402l31 31M305 402l37 -14M305 402l11 20M324 377l18 11M324 377l-8 45M336 433l6 -45M336 433l-20 -11M354 408l-49 -6M324 377l12 56M342 388l-26 34M300 156l-30 -31M300 156l-18 25M300 156l-12 -20M300 156l-38 14M251 150l19 -25M251 150l31 31M251 150l37 -14M251 150l11 20M270 125l18 11M270 125l-8 45M282 181l6 -45M282 181l-20 -11M300 156l-49 -6M270 125l12 56M288 136l-26 34M384 439l-30 -31M384 439l-18 25M384 439l-11 -20M384 439l-37 14M336 433l18 -25M336 433l30 31M336 433l37 -14M336 433l11 20M354 408l19 11M354 408l-7 45M366 464l7 -45M366 464l-19 -11M384 439l-48 -6M354 408l12 56M373 419l-26 34M378 411l-30 -31M378 411l-18 25M378 411l-11 -20M378 411l-37 14M330 405l18 -25M330 405l30 31M330 405l37 -14M330 405l11 20M348 380l19 11M348 380l-7 45M360 436l7 -45M360 436l-19 -11M378 411l-48 -6M348 380l12 56M367 391l-26 34M324 159l-30 -31M324 159l-18 25M324 159l-11 -20M324 159l-37 14M276 153l18 -25M276 153l30 31M276 153l37 -14M276 153l11 20M294 128l19 11M294 128l-7 45M306 184l7 -45M306 184l-19 -11M324 159l-48 -6M294 128l12 56M313 139l-26 34M409 442l-31 -31M409 442l-19 25M409 442l-11 -20M409 442l-37 14M360 436l18 -25M360 436l30 31M360 436l38 -14M360 436l12 20M378 411l20 11M378 411l-6 45M390 467l8 -45M390 467l-18 -11M409 442l-49 -6M378 411l12 56M398 422l-26 34M403 414l-31 -31M403 414l-19 25M403 414l-11 -20M403 414l-37 14M354 408l18 -25M354 408l30 31M354 408l38 -14M354 408l12 20M372 383l20 11M372 383l-6 45M384 439l8 -45M384 439l-18 -11M403 414l-49 -6M372 383l12 56M392 394l-26 34M349 162l-31 -31M349 162l-19 25M349 162l-11 -20M349 162l-37 14M300 156l18 -25M300 156l30 31M300 156l38 -14M300 156l12 20M318 131l20 11M318 131l-6 45M330 187l8 -45M330 187l-18 -11M349 162l-49 -6M318 131l12 56M338 142l-26 34M434 445l-31 -31M434 445l-19 25M434 445l-12 -20M434 445l-38 14M384 439l19 -25M384 439l31 31M384 439l38 -14M384 439l12 20M403 414l19 11M403 414l-7 45M415 470l7 -45M415 470l-19 -11M434 445l-50 -6M403 414l12 56M422 425l-26 34M374 165l-31 -31M374 165l-19 25M374 165l-12 -20M374 165l-38 14M324 159l19 -25M324 159l31 31M324 159l38 -14M324 159l12 20M343 134l19 11M343 134l-7 45M355 190l7 -45M355 190l-19 -11M374 165l-50 -6M343 134l12 56M362 145l-26 34M458 448l-30 -31M458 448l-18 25M458 448l-12 -20M458 448l-38 14M409 442l19 -25M409 442l31 31M409 442l37 -14M409 442l11 20M428 417l18 11M428 417l-8 45M440 473l6 -45M440 473l-20 -11M458 448l-49 -6M428 417l12 56M446 428l-26 34M398 168l-30 -31M398 168l-18 25M398 168l-12 -20M398 168l-38 14M349 162l19 -25M349 162l31 31M349 162l37 -14M349 162l11 20M368 137l18 11M368 137l-8 45M380 193l6 -45M380 193l-20 -11M398 168l-49 -6M368 137l12 56M386 148l-26 34M488 479l-30 -31M488 479l-18 25M488 479l-11 -20M488 479l-37 14M440 473l18 -25M440 473l30 31M440 473l37 -14M440 473l11 20M458 448l19 11M458 448l-7 45M470 504l7 -45M470 504l-19 -11M488 479l-48 -6M458 448l12 56M477 459l-26 34M482 451l-30 -31M482 451l-18 25M482 451l-11 -20M482 451l-37 14M434 445l18 -25M434 445l30 31M434 445l37 -14M434 445l11 20M452 420l19 11M452 420l-7 45M464 476l7 -45M464 476l-19 -11M482 451l-48 -6M452 420l12 56M471 431l-26 34M422 171l-30 -31M422 171l-18 25M422 171l-11 -20M422 171l-37 14M374 165l18 -25M374 165l30 31M374 165l37 -14M374 165l11 20M392 140l19 11M392 140l-7 45M404 196l7 -45M404 196l-19 -11M422 171l-48 -6M392 140l12 56M411 151l-26 34M513 482l-31 -31M513 482l-19 25M513 482l-11 -20M513 482l-37 14M464 476l18 -25M464 476l30 31M464 476l38 -14M464 476l12 20M482 451l20 11M482 451l-6 45M494 507l8 -45M494 507l-18 -11M513 482l-49 -6M482 451l12 56M502 462l-26 34M447 174l-31 -31M447 174l-19 25M447 174l-11 -20M447 174l-37 14M398 168l18 -25M398 168l30 31M398 168l38 -14M398 168l12 20M416 143l20 11M416 143l-6 45M428 199l8 -45M428 199l-18 -11M447 174l-49 -6M416 143l12 56M436 154l-26 34M538 485l-31 -31M538 485l-19 25M538 485l-12 -20M538 485l-38 14M488 479l19 -25M488 479l31 31M488 479l38 -14M488 479l12 20M507 454l19 11M507 454l-7 45M519 510l7 -45M519 510l-19 -11M538 485l-50 -6M507 454l12 56M526 465l-26 34M472 177l-31 -31M472 177l-19 25M472 177l-12 -20M472 177l-38 14M422 171l19 -25M422 171l31 31M422 171l38 -14M422 171l12 20M441 146l19 11M441 146l-7 45M453 202l7 -45M453 202l-19 -11M472 177l-50 -6M441 146l12 56M460 157l-26 34M568 516l-30 -31M568 516l-18 25M568 516l-12 -20M568 516l-38 14M519 510l19 -25M519 510l31 31M519 510l37 -14M519 510l11 20M538 485l18 11M538 485l-8 45M550 541l6 -45M550 541l-20 -11M568 516l-49 -6M538 485l12 56M556 496l-26 34M562 488l-30 -31M562 488l-18 25M562 488l-12 -20M562 488l-38 14M513 482l19 -25M513 482l31 31M513 482l37 -14M513 482l11 20M532 457l18 11M532 457l-8 45M544 513l6 -45M544 513l-20 -11M562 488l-49 -6M532 457l12 56M550 468l-26 34M496 180l-30 -31M496 180l-18 25M496 180l-12 -20M496 180l-38 14M447 174l19 -25M447 174l31 31M447 174l37 -14M447 174l11 20M466 149l18 11M466 149l-8 45M478 205l6 -45M478 205l-20 -11M496 180l-49 -6M466 149l12 56M484 160l-26 34M592 519l-30 -31M592 519l-18 25M592 519l-11 -20M592 519l-37 14M544 513l18 -25M544 513l30 31M544 513l37 -14M544 513l11 20M562 488l19 11M562 488l-7 45M574 544l7 -45M574 544l-19 -11M592 519l-48 -6M562 488l12 56M581 499l-26 34M520 183l-30 -31M520 183l-18 25M520 183l-11 -20M520 183l-37 14M472 177l18 -25M472 177l30 31M472 177l37 -14M472 177l11 20M490 152l19 11M490 152l-7 45M502 208l7 -45M502 208l-19 -11M520 183l-48 -6M490 152l12 56M509 163l-26 34M617 522l-31 -31M617 522l-19 25M617 522l-11 -20M617 522l-37 14M568 516l18 -25M568 516l30 31M568 516l38 -14M568 516l12 20M586 491l20 11M586 491l-6 45M598 547l8 -45M598 547l-18 -11M617 522l-49 -6M586 491l12 56M606 502l-26 34M545 186l-31 -31M545 186l-19 25M545 186l-11 -20M545 186l-37 14M496 180l18 -25M496 180l30 31M496 180l38 -14M496 180l12 20M514 155l20 11M514 155l-6 45M526 211l8 -45M526 211l-18 -11M545 186l-49 -6M514 155l12 56M534 166l-26 34M648 553l-31 -31M648 553l-19 25M648 553l-12 -20M648 553l-38 14M598 547l19 -25M598 547l31 31M598 547l38 -14M598 547l12 20M617 522l19 11M617 522l-7 45M629 578l7 -45M629 578l-19 -11M648 553l-50 -6M617 522l12 56M636 533l-26 34M642 525l-31 -31M642 525l-19 25M642 525l-12 -20M642 525l-38 14M592 519l19 -25M592 519l31 31M592 519l38 -14M592 519l12 20M611 494l19 11M611 494l-7 45M623 550l7 -45M623 550l-19 -11M642 525l-50 -6M611 494l12 56M630 505l-26 34M570 189l-31 -31M570 189l-19 25M570 189l-12 -20M570 189l-38 14M520 183l19 -25M520 183l31 31M520 183l38 -14M520 183l12 20M539 158l19 11M539 158l-7 45M551 214l7 -45M551 214l-19 -11M570 189l-50 -6M539 158l12 56M558 169l-26 34M672 556l-30 -31M672 556l-18 25M672 556l-12 -20M672 556l-38 14M623 550l19 -25M623 550l31 31M623 550l37 -14M623 550l11 20M642 525l18 11M642 525l-8 45M654 581l6 -45M654 581l-20 -11M672 556l-49 -6M642 525l12 56M660 536l-26 34M666 528l-30 -31M666 528l-18 25M666 528l-12 -20M666 528l-38 14M617 522l19 -25M617 522l31 31M617 522l37 -14M617 522l11 20M636 497l18 11M636 497l-8 45M648 553l6 -45M648 553l-20 -11M666 528l-49 -6M636 497l12 56M654 508l-26 34M594 192l-30 -31M594 192l-18 25M594 192l-12 -20M594 192l-38 14M545 186l19 -25M545 186l31 31M545 186l37 -14M545 186l11 20M564 161l18 11M564 161l-8 45M576 217l6 -45M576 217l-20 -11M594 192l-49 -6M564 161l12 56M582 172l-26 34M696 559l-30 -31M696 559l-18 25M696 559l-11 -20M696 559l-37 14M648 553l18 -25M648 553l30 31M648 553l37 -14M648 553l11 20M666 528l19 11M666 528l-7 45M678 584l7 -45M678 584l-19 -11M696 559l-48 -6M666 528l12 56M685 539l-26 34M618 195l-30 -31M618 195l-18 25M618 195l-11 -20M618 195l-37 14M570 189l18 -25M570 189l30 31M570 189l37 -14M570 189l11 20M588 164l19 11M588 164l-7 45M600 220l7 -45M600 220l-19 -11M618 195l-48 -6M588 164l12 56M607 175l-26 34M721 562l-31 -31M721 562l-19 25M721 562l-11 -20M721 562l-37 14M672 556l18 -25M672 556l30 31M672 556l38 -14M672 556l12 20M690 531l20 11M690 531l-6 45M702 587l8 -45M702 587l-18 -11M721 562l-49 -6M690 531l12 56M710 542l-26 34M643 198l-31 -31M643 198l-19 25M643 198l-11 -20M643 198l-37 14M594 192l18 -25M594 192l30 31M594 192l38 -14M594 192l12 20M612 167l20 11M612 167l-6 45M624 223l8 -45M624 223l-18 -11M643 198l-49 -6M612 167l12 56M632 178l-26 34M752 593l-31 -31M752 593l-19 25M752 593l-12 -20M752 593l-38 14M702 587l19 -25M702 587l31 31M702 587l38 -14M702 587l12 20M721 562l19 11M721 562l-7 45M733 618l7 -45M733 618l-19 -11M752 593l-50 -6M721 562l12 56M740 573l-26 34M746 565l-31 -31M746 565l-19 25M746 565l-12 -20M746 565l-38 14M696 559l19 -25M696 559l31 31M696 559l38 -14M696 559l12 20M715 534l19 11M715 534l-7 45M727 590l7 -45M727 590l-19 -11M746 565l-50 -6M715 534l12 56M734 545l-26 34M668 201l-31 -31M668 201l-19 25M668 201l-12 -20M668 201l-38 14M618 195l19 -25M618 195l31 31M618 195l38 -14M618 195l12 20M637 170l19 11M637 170l-7 45M649 226l7 -45M649 226l-19 -11M668 201l-50 -6M637 170l12 56M656 181l-26 34M776 596l-30 -31M776 596l-18 25M776 596l-12 -20M776 596l-38 14M727 590l19 -25M727 590l31 31M727 590l37 -14M727 590l11 20M746 565l18 11M746 565l-8 45M758 621l6 -45M758 621l-20 -11M776 596l-49 -6M746 565l12 56M764 576l-26 34M692 204l-30 -31M692 204l-18 25M692 204l-12 -20M692 204l-38 14M643 198l19 -25M643 198l31 31M643 198l37 -14M643 198l11 20M662 173l18 11M662 173l-8 45M674 229l6 -45M674 229l-20 -11M692 204l-49 -6M662 173l12 56M680 184l-26 34M800 599l-30 -31M800 599l-18 25M800 599l-11 -20M800 599l-37 14M752 593l18 -25M752 593l30 31M752 593l37 -14M752 593l11 20M770 568l19 11M770 568l-7 45M782 624l7 -45M782 624l-19 -11M800 599l-48 -6M770 568l12 56M789 579l-26 34M716 207l-30 -31M716 207l-18 25M716 207l-11 -20M716 207l-37 14M668 201l18 -25M668 201l30 31M668 201l37 -14M668 201l11 20M686 176l19 11M686 176l-7 45M698 232l7 -45M698 232l-19 -11M716 207l-48 -6M686 176l12 56M705 187l-26 34M831 630l-31 -31M831 630l-19 25M831 630l-11 -20M831 630l-37 14M782 624l18 -25M782 624l30 31M782 624l38 -14M782 624l12 20M800 599l20 11M800 599l-6 45M812 655l8 -45M812 655l-18 -11M831 630l-49 -6M800 599l12 56M820 610l-26 34M825 602l-31 -31M825 602l-19 25M825 602l-11 -20M825 602l-37 14M776 596l18 -25M776 596l30 31M776 596l38 -14M776 596l12 20M794 571l20 11M794 571l-6 45M806 627l8 -45M806 627l-18 -11M825 602l-49 -6M794 571l12 56M814 582l-26 34M741 210l-31 -31M741 210l-19 25M741 210l-11 -20M741 210l-37 14M692 204l18 -25M692 204l30 31M692 204l38 -14M692 204l12 20M710 179l20 11M710 179l-6 45M722 235l8 -45M722 235l-18 -11M741 210l-49 -6M710 179l12 56M730 190l-26 34M856 633l-31 -31M856 633l-19 25M856 633l-12 -20M856 633l-38 14M806 627l19 -25M806 627l31 31M806 627l38 -14M806 627l12 20M825 602l19 11M825 602l-7 45M837 658l7 -45M837 658l-19 -11M856 633l-50 -6M825 602l12 56M844 613l-26 34M766 213l-31 -31M766 213l-19 25M766 213l-12 -20M766 213l-38 14M716 207l19 -25M716 207l31 31M716 207l38 -14M716 207l12 20M735 182l19 11M735 182l-7 45M747 238l7 -45M747 238l-19 -11M766 213l-50 -6M735 182l12 56M754 193l-26 34M880 636l-30 -31M880 636l-18 25M880 636l-12 -20M880 636l-38 14M831 630l19 -25M831 630l31 31M831 630l37 -14M831 630l11 20M850 605l18 11M850 605l-8 45M862 661l6 -45M862 661l-20 -11M880 636l-49 -6M850 605l12 56M868 616l-26 34M790 216l-30 -31M790 216l-18 25M790 216l-12 -20M790 216l-38 14M741 210l19 -25M741 210l31 31M741 210l37 -14M741 210l11 20M760 185l18 11M760 185l-8 45M772 241l6 -45M772 241l-20 -11M790 216l-49 -6M760 185l12 56M778 196l-26 34M910 667l-30 -31M910 667l-18 25M910 667l-11 -20M910 667l-37 14M862 661l18 -25M862 661l30 31M862 661l37 -14M862 661l11 20M880 636l19 11M880 636l-7 45M892 692l7 -45M892 692l-19 -11M910 667l-48 -6M880 636l12 56M899 647l-26 34M904 639l-30 -31M904 639l-18 25M904 639l-11 -20M904 639l-37 14M856 633l18 -25M856 633l30 31M856 633l37 -14M856 633l11 20M874 608l19 11M874 608l-7 45M886 664l7 -45M886 664l-19 -11M904 639l-48 -6M874 608l12 56M893 619l-26 34M814 219l-30 -31M814 219l-18 25M814 219l-11 -20M814 219l-37 14M766 213l18 -25M766 213l30 31M766 213l37 -14M766 213l11 20M784 188l19 11M784 188l-7 45M796 244l7 -45M796 244l-19 -11M814 219l-48 -6M784 188l12 56M803 199l-26 34M935 670l-31 -31M935 670l-19 25M935 670l-11 -20M935 670l-37 14M886 664l18 -25M886 664l30 31M886 664l38 -14M886 664l12 20M904 639l20 11M904 639l-6 45M916 695l8 -45M916 695l-18 -11M935 670l-49 -6M904 639l12 56M924 650l-26 34M929 642l-31 -31M929 642l-19 25M929 642l-11 -20M929 642l-37 14M880 636l18 -25M880 636l30 31M880 636l38 -14M880 636l12 20M898 611l20 11M898 611l-6 45M910 667l8 -45M910 667l-18 -11M929 642l-49 -6M898 611l12 56M918 622l-26 34M839 222l-31 -31M839 222l-19 25M839 222l-11 -20M839 222l-37 14M790 216l18 -25M790 216l30 31M790 216l38 -14M790 216l12 20M808 191l20 11M808 191l-6 45M820 247l8 -45M820 247l-18 -11M839 222l-49 -6M808 191l12 56M828 202l-26 34M960 673l-31 -31M960 673l-19 25M960 673l-12 -20M960 673l-38 14M910 667l19 -25M910 667l31 31M910 667l38 -14M910 667l12 20M929 642l19 11M929 642l-7 45M941 698l7 -45M941 698l-19 -11M960 673l-50 -6M929 642l12 56M948 653l-26 34M864 225l-31 -31M864 225l-19 25M864 225l-12 -20M864 225l-38 14M814 219l19 -25M814 219l31 31M814 219l38 -14M814 219l12 20M833 194l19 11M833 194l-7 45M845 250l7 -45M845 250l-19 -11M864 225l-50 -6M833 194l12 56M852 205l-26 34M978 648l-30 -31M978 648l-18 25M978 648l-12 -20M978 648l-38 14M929 642l19 -25M929 642l31 31M929 642l37 -14M929 642l11 20M948 617l18 11M948 617l-8 45M960 673l6 -45M960 673l-20 -11M978 648l-49 -6M948 617l12 56M966 628l-26 34M972 620l-30 -31M972 620l-18 25M972 620l-12 -20M972 620l-38 14M923 614l19 -25M923 614l31 31M923 614l37 -14M923 614l11 20M942 589l18 11M942 589l-8 45M954 645l6 -45M954 645l-20 -11M972 620l-49 -6M942 589l12 56M960 600l-26 34M966 592l-30 -31M966 592l-18 25M966 592l-12 -20M966 592l-38 14M917 586l19 -25M917 586l31 31M917 586l37 -14M917 586l11 20M936 561l18 11M936 561l-8 45M948 617l6 -45M948 617l-20 -11M966 592l-49 -6M936 561l12 56M954 572l-26 34M888 228l-30 -31M888 228l-18 25M888 228l-12 -20M888 228l-38 14M839 222l19 -25M839 222l31 31M839 222l37 -14M839 222l11 20M858 197l18 11M858 197l-8 45M870 253l6 -45M870 253l-20 -11M888 228l-49 -6M858 197l12 56M876 208l-26 34M990 595l-30 -31M990 595l-18 25M990 595l-11 -20M990 595l-37 14M942 589l18 -25M942 589l30 31M942 589l37 -14M942 589l11 20M960 564l19 11M960 564l-7 45M972 620l7 -45M972 620l-19 -11M990 595l-48 -6M960 564l12 56M979 575l-26 34M984 567l-30 -31M984 567l-18 25M984 567l-11 -20M984 567l-37 14M936 561l18 -25M936 561l30 31M936 561l37 -14M936 561l11 20M954 536l19 11M954 536l-7 45M966 592l7 -45M966 592l-19 -11M984 567l-48 -6M954 536l12 56M973 547l-26 34M978 539l-30 -31M978 539l-18 25M978 539l-11 -20M978 539l-37 14M930 533l18 -25M930 533l30 31M930 533l37 -14M930 533l11 20M948 508l19 11M948 508l-7 45M960 564l7 -45M960 564l-19 -11M978 539l-48 -6M948 508l12 56M967 519l-26 34M972 511l-30 -31M972 511l-18 25M972 511l-11 -20M972 511l-37 14M924 505l18 -25M924 505l30 31M924 505l37 -14M924 505l11 20M942 480l19 11M942 480l-7 45M954 536l7 -45M954 536l-19 -11M972 511l-48 -6M942 480l12 56M961 491l-26 34M912 231l-30 -31M912 231l-18 25M912 231l-11 -20M912 231l-37 14M864 225l18 -25M864 225l30 31M864 225l37 -14M864 225l11 20M882 200l19 11M882 200l-7 45M894 256l7 -45M894 256l-19 -11M912 231l-48 -6M882 200l12 56M901 211l-26 34M997 514l-31 -31M997 514l-19 25M997 514l-11 -20M997 514l-37 14M948 508l18 -25M948 508l30 31M948 508l38 -14M948 508l12 20M966 483l20 11M966 483l-6 45M978 539l8 -45M978 539l-18 -11M997 514l-49 -6M966 483l12 56M986 494l-26 34M991 486l-31 -31M991 486l-19 25M991 486l-11 -20M991 486l-37 14M942 480l18 -25M942 480l30 31M942 480l38 -14M942 480l12 20M960 455l20 11M960 455l-6 45M972 511l8 -45M972 511l-18 -11M991 486l-49 -6M960 455l12 56M980 466l-26 34M985 458l-31 -31M985 458l-19 25M985 458l-11 -20M985 458l-37 14M936 452l18 -25M936 452l30 31M936 452l38 -14M936 452l12 20M954 427l20 11M954 427l-6 45M966 483l8 -45M966 483l-18 -11M985 458l-49 -6M954 427l12 56M974 438l-26 34M937 234l-31 -31M937 234l-19 25M937 234l-11 -20M937 234l-37 14M888 228l18 -25M888 228l30 31M888 228l38 -14M888 228l12 20M906 203l20 11M906 203l-6 45M918 259l8 -45M918 259l-18 -11M937 234l-49 -6M906 203l12 56M926 214l-26 34M1004 433l-31 -31M1004 433l-19 25M1004 433l-12 -20M1004 433l-38 14M954 427l19 -25M954 427l31 31M954 427l38 -14M954 427l12 20M973 402l19 11M973 402l-7 45M985 458l7 -45M985 458l-19 -11M1004 433l-50 -6M973 402l12 56M992 413l-26 34M998 405l-31 -31M998 405l-19 25M998 405l-12 -20M998 405l-38 14M948 399l19 -25M948 399l31 31M948 399l38 -14M948 399l12 20M967 374l19 11M967 374l-7 45M979 430l7 -45M979 430l-19 -11M998 405l-50 -6M967 374l12 56M986 385l-26 34M992 377l-31 -31M992 377l-19 25M992 377l-12 -20M992 377l-38 14M942 371l19 -25M942 371l31 31M942 371l38 -14M942 371l12 20M961 346l19 11M961 346l-7 45M973 402l7 -45M973 402l-19 -11M992 377l-50 -6M961 346l12 56M980 357l-26 34M962 237l-31 -31M962 237l-19 25M962 237l-12 -20M962 237l-38 14M912 231l19 -25M912 231l31 31M912 231l38 -14M912 231l12 20M931 206l19 11M931 206l-7 45M943 262l7 -45M943 262l-19 -11M962 237l-50 -6M931 206l12 56M950 217l-26 34M1016 380l-30 -31M1016 380l-18 25M1016 380l-12 -20M1016 380l-38 14M967 374l19 -25M967 374l31 31M967 374l37 -14M967 374l11 20M986 349l18 11M986 349l-8 45M998 405l6 -45M998 405l-20 -11M1016 380l-49 -6M986 349l12 56M1004 360l-26 34M1010 352l-30 -31M1010 352l-18 25M1010 352l-12 -20M1010 352l-38 14M961 346l19 -25M961 346l31 31M961 346l37 -14M961 346l11 20M980 321l18 11M980 321l-8 45M992 377l6 -45M992 377l-20 -11M1010 352l-49 -6M980 321l12 56M998 332l-26 34M1004 324l-30 -31M1004 324l-18 25M1004 324l-12 -20M1004 324l-38 14M955 318l19 -25M955 318l31 31M955 318l37 -14M955 318l11 20M974 293l18 11M974 293l-8 45M986 349l6 -45M986 349l-20 -11M1004 324l-49 -6M974 293l12 56M992 304l-26 34M998 296l-30 -31M998 296l-18 25M998 296l-12 -20M998 296l-38 14M949 290l19 -25M949 290l31 31M949 290l37 -14M949 290l11 20M968 265l18 11M968 265l-8 45M980 321l6 -45M980 321l-20 -11M998 296l-49 -6M968 265l12 56M986 276l-26 34M986 240l-30 -31M986 240l-18 25M986 240l-12 -20M986 240l-38 14M937 234l19 -25M937 234l31 31M937 234l37 -14M937 234l11 20M956 209l18 11M956 209l-8 45M968 265l6 -45M968 265l-20 -11M986 240l-49 -6M956 209l12 56M974 220l-26 34M1022 299l-30 -31M1022 299l-18 25M1022 299l-11 -20M1022 299l-37 14M974 293l18 -25M974 293l30 31M974 293l37 -14M974 293l11 20M992 268l19 11M992 268l-7 45M1004 324l7 -45M1004 324l-19 -11M1022 299l-48 -6M992 268l12 56M1011 279l-26 34M1016 271l-30 -31M1016 271l-18 25M1016 271l-11 -20M1016 271l-37 14M968 265l18 -25M968 265l30 31M968 265l37 -14M968 265l11 20M986 240l19 11M986 240l-7 45M998 296l7 -45M998 296l-19 -11M1016 271l-48 -6M986 240l12 56M1005 251l-26 34M1010 243l-30 -31M1010 243l-18 25M1010 243l-11 -20M1010 243l-37 14M962 237l18 -25M962 237l30 31M962 237l37 -14M962 237l11 20M980 212l19 11M980 212l-7 45M992 268l7 -45M992 268l-19 -11M1010 243l-48 -6M980 212l12 56M999 223l-26 34" stroke="#f03060" stroke-width="1" fill="none"/><path d="M150 165L968 256M150 172L968 265" stroke="#33ee44" fill="none"/><path d="M162 181L161 220L183 233M968 258L928 638" stroke="#3399dd" fill="none"/><path d="M147 234L147 304" stroke="#aacc22" stroke-width="2" fill="none"/><path d="M147 304L928 643" stroke="#8833dd" fill="none"/></svg><span class="t" style="left:1802px;top:143px;font-size:38px;line-height:44px;font-weight:bold;color:#fff;transform-origin:0 0;transform:scaleX(0.81)">ANSYS</span><span class="t" style="left:1846px;top:182px;font-size:19px;line-height:22px;color:#fff;transform-origin:0 0;transform:scaleX(0.87)">2020 R2</span><svg style="left:1800px;top:720px" width="128" height="120" viewBox="1800 720 128 120">
<path d="M1845 813L1839 772" stroke="#119911" stroke-width="3"/><path d="M1832 774L1836.5 756L1845 772Z" fill="#11aa11"/>
<path d="M1846 813L1889 805" stroke="#bb1111" stroke-width="3.2"/><path d="M1886 797L1903 805L1888 814Z" fill="#bb1111"/>
<circle cx="1845.5" cy="802.5" r="7" fill="#000a80"/><rect x="1843" y="805" width="4" height="8" fill="#000a50"/>
<circle cx="1871" cy="772.5" r="6" fill="#44cccc"/><circle cx="1870" cy="771" r="2.5" fill="#aaf0f0"/>
<text x="1834" y="744" font-size="9" fill="#22ee22" font-family="Liberation Serif">Y</text>
<text x="1916" y="803" font-size="9" fill="#ee2222" font-family="Liberation Serif">X</text>
<text x="1847" y="796" font-size="10" fill="#2222ee" font-family="Liberation Serif">Z</text></svg><div style="left:447px;top:890px;width:1478px;height:1px;background:#808080"></div><div style="left:447px;top:891px;width:1478px;height:1px;background:#a0a0a0"></div><div style="left:447px;top:892px;width:1478px;height:1px;background:#fff"></div><div style="left:447px;top:897px;width:602px;height:122px;background:#fff;border-top:2px solid #000;border-left:2px solid #000"></div><div style="left:1049px;top:897px;width:18px;height:122px;background:repeating-conic-gradient(#f0f0f0 0 25%,#fff 0 50%) 0 0/2px 2px"></div><div style="left:1050px;top:897px;width:17px;height:16px;background:#f0f0f0;border-top:1px solid #fff;border-left:1px solid #fff;border-right:1px solid #696969;border-bottom:1px solid #696969;box-shadow:inset -1px -1px 0 #a0a0a0"></div><svg style="left:0;top:0" width="1936" height="1056"><path d="M1054.5 907.0L1062.5 907.0L1058.5 903.0Z" fill="#000"/></svg><div style="left:1050px;top:995px;width:17px;height:6px;background:#f0f0f0;border-top:1px solid #fff;border-left:1px solid #fff;border-right:1px solid #696969;border-bottom:1px solid #696969;box-shadow:inset -1px -1px 0 #a0a0a0"></div><div style="left:1050px;top:1002px;width:17px;height:16px;background:#f0f0f0;border-top:1px solid #fff;border-left:1px solid #fff;border-right:1px solid #696969;border-bottom:1px solid #696969;box-shadow:inset -1px -1px 0 #a0a0a0"></div><svg style="left:0;top:0" width="1936" height="1056"><path d="M1054.5 1008.0L1062.5 1008.0L1058.5 1012.0Z" fill="#000"/></svg><span class="t" style="left:453px;top:903px;font-size:10.7px">64162 elements</span><span class="t" style="left:502px;top:916px;font-size:10.7px">0.4000138003 -&gt; 0.450012650275, 10690 values</span><span class="t" style="left:453px;top:929px;font-size:10.7px">74852 elements</span><span class="t" style="left:502px;top:942px;font-size:10.7px">0.450012650275 -&gt; 0.50001150025, 64162 values</span><span class="t" style="left:453px;top:955px;font-size:10.7px">10690 elements</span><span class="t" style="left:502px;top:968px;font-size:10.7px">0.4000138003 -&gt; 0.450012650275, 10690 values</span><span class="t" style="left:453px;top:981px;font-size:10.7px">0 elements</span><div style="left:455px;top:1026px;width:12px;height:12px;background:#fff;border-top:1px solid #a0a0a0;border-left:1px solid #a0a0a0;box-shadow:inset 1px 1px 0 #696969"></div><span class="t" style="left:473px;top:1026px;">Log</span><div style="left:499px;top:1022px;width:32px;height:23px;background:#f0f0f0;border-top:1px solid #fff;border-left:1px solid #fff;border-right:1px solid #696969;border-bottom:1px solid #696969;box-shadow:inset -1px -1px 0 #a0a0a0"></div><span class="t" style="left:499px;top:1022px;width:32px;height:23px;line-height:23px;text-align:center;color:#000;font-size:11px">Save</span><div style="left:536px;top:1022px;width:31px;height:23px;background:#f0f0f0;border-top:1px solid #fff;border-left:1px solid #fff;border-right:1px solid #696969;border-bottom:1px solid #696969;box-shadow:inset -1px -1px 0 #a0a0a0"></div><span class="t" style="left:536px;top:1022px;width:31px;height:23px;line-height:23px;text-align:center;color:#000;font-size:11px">Clear</span><div style="left:977px;top:1022px;width:90px;height:22px;background:#f0f0f0;border-top:1px solid #fff;border-left:1px solid #fff;border-right:1px solid #696969;border-bottom:1px solid #696969;box-shadow:inset -1px -1px 0 #a0a0a0"></div><span class="t" style="left:977px;top:1022px;width:90px;height:22px;line-height:22px;text-align:center;color:#000;font-size:10.2px">Units: millimeters</span><div style="left:1075px;top:897px;width:1px;height:151px;background:#696969"></div><div style="left:1076px;top:897px;width:1px;height:151px;background:#fff"></div><svg style="left:1076px;top:896px" width="852" height="152" shape-rendering="crispEdges"><rect x="67" y="12" width="719" height="111" fill="#fff"/><rect x="67" y="26" width="719" height="1" fill="#606060"/><rect x="67" y="40" width="719" height="1" fill="#606060"/><rect x="67" y="54" width="719" height="1" fill="#606060"/><rect x="67" y="68" width="719" height="1" fill="#606060"/><rect x="67" y="82" width="719" height="1" fill="#606060"/><rect x="67" y="96" width="719" height="1" fill="#606060"/><rect x="67" y="110" width="719" height="1" fill="#606060"/><rect x="66" y="93" width="36" height="30" fill="#000"/><rect x="66" y="93" width="36" height="2" fill="#ffa000"/><rect x="66" y="121" width="36" height="2" fill="#ffa000"/><rect x="102" y="46" width="36" height="77" fill="#000"/><rect x="102" y="46" width="36" height="2" fill="#ffa000"/><rect x="102" y="121" width="36" height="2" fill="#ffa000"/><rect x="138" y="13" width="36" height="110" fill="#000"/><rect x="138" y="121" width="36" height="2" fill="#ffa000"/><rect x="174" y="12" width="36" height="111" fill="#000"/><rect x="174" y="121" width="36" height="2" fill="#ffa800"/><rect x="210" y="12" width="36" height="111" fill="#000"/><rect x="210" y="121" width="36" height="2" fill="#ffb800"/><rect x="246" y="12" width="36" height="111" fill="#000"/><rect x="246" y="121" width="36" height="2" fill="#ffc800"/><rect x="282" y="12" width="36" height="111" fill="#000"/><rect x="282" y="121" width="36" height="2" fill="#ffd800"/><rect x="318" y="12" width="36" height="111" fill="#000"/><rect x="318" y="121" width="36" height="2" fill="#ffe800"/><rect x="354" y="12" width="36" height="111" fill="#000"/><rect x="354" y="121" width="36" height="2" fill="#fff000"/><rect x="390" y="12" width="36" height="111" fill="#000"/><rect x="390" y="121" width="36" height="2" fill="#e0f000"/><rect x="426" y="12" width="36" height="111" fill="#000"/><rect x="426" y="121" width="36" height="2" fill="#c0f000"/><rect x="462" y="12" width="36" height="111" fill="#000"/><rect x="462" y="121" width="36" height="2" fill="#a0f000"/><rect x="498" y="12" width="36" height="111" fill="#000"/><rect x="498" y="121" width="36" height="2" fill="#60f020"/><rect x="534" y="12" width="36" height="111" fill="#000"/><rect x="534" y="121" width="36" height="2" fill="#20f020"/><rect x="570" y="12" width="36" height="111" fill="#000"/><rect x="570" y="121" width="36" height="2" fill="#10e030"/><rect x="606" y="12" width="36" height="111" fill="#000"/><rect x="606" y="121" width="36" height="2" fill="#10b060"/><rect x="642" y="12" width="36" height="111" fill="#000"/><rect x="642" y="121" width="36" height="2" fill="#108080"/><rect x="678" y="12" width="36" height="111" fill="#000"/><rect x="678" y="121" width="36" height="2" fill="#1060b0"/><rect x="714" y="12" width="36" height="111" fill="#000"/><rect x="714" y="121" width="36" height="2" fill="#1040e0"/><rect x="750" y="12" width="36" height="111" fill="#000"/><rect x="750" y="121" width="36" height="2" fill="#0020f0"/><rect x="66" y="93" width="2" height="30" fill="#ffa000"/><rect x="100" y="46" width="2" height="77" fill="#ffa000"/><rect x="136" y="13" width="2" height="110" fill="#ffa000"/><rect x="172" y="12" width="2" height="111" fill="#ffa800"/><rect x="208" y="12" width="2" height="111" fill="#ffb800"/><rect x="244" y="12" width="2" height="111" fill="#ffc800"/><rect x="280" y="12" width="2" height="111" fill="#ffd800"/><rect x="316" y="12" width="2" height="111" fill="#ffe800"/><rect x="352" y="12" width="2" height="111" fill="#fff000"/><rect x="388" y="12" width="2" height="111" fill="#e0f000"/><rect x="424" y="12" width="2" height="111" fill="#c0f000"/><rect x="460" y="12" width="2" height="111" fill="#a0f000"/><rect x="496" y="12" width="2" height="111" fill="#60f020"/><rect x="532" y="12" width="2" height="111" fill="#20f020"/><rect x="568" y="12" width="2" height="111" fill="#10e030"/><rect x="604" y="12" width="2" height="111" fill="#10b060"/><rect x="640" y="12" width="2" height="111" fill="#108080"/><rect x="676" y="12" width="2" height="111" fill="#1060b0"/><rect x="712" y="12" width="2" height="111" fill="#1040e0"/><rect x="748" y="12" width="2" height="111" fill="#0020f0"/><rect x="784" y="12" width="2" height="111" fill="#0000ff"/><path d="M185.5 76L191 67L196.5 76H193.5V86H188.5V76Z" fill="#0000ff"/><path d="M221.5 76L227 67L232.5 76H229.5V86H224.5V76Z" fill="#0000ff"/><path d="M257.5 76L263 67L268.5 76H265.5V86H260.5V76Z" fill="#0000ff"/><path d="M293.5 76L299 67L304.5 76H301.5V86H296.5V76Z" fill="#0000ff"/><path d="M329.5 76L335 67L340.5 76H337.5V86H332.5V76Z" fill="#0000ff"/><path d="M365.5 76L371 67L376.5 76H373.5V86H368.5V76Z" fill="#0000ff"/><path d="M401.5 76L407 67L412.5 76H409.5V86H404.5V76Z" fill="#0000ff"/><path d="M437.5 76L443 67L448.5 76H445.5V86H440.5V76Z" fill="#0000ff"/><rect x="65" y="12" width="1" height="119" fill="#000"/><rect x="55" y="12" width="10" height="1" fill="#000"/><rect x="59" y="26" width="6" height="1" fill="#000"/><rect x="55" y="40" width="10" height="1" fill="#000"/><rect x="59" y="54" width="6" height="1" fill="#000"/><rect x="55" y="68" width="10" height="1" fill="#000"/><rect x="59" y="82" width="6" height="1" fill="#000"/><rect x="55" y="96" width="10" height="1" fill="#000"/><rect x="59" y="110" width="6" height="1" fill="#000"/><rect x="55" y="124" width="10" height="1" fill="#000"/><text x="54" y="16" text-anchor="end" font-family="Liberation Sans" font-size="11" letter-spacing="-0.3">6008</text><text x="54" y="44" text-anchor="end" font-family="Liberation Sans" font-size="11" letter-spacing="-0.3">4506</text><text x="54" y="72" text-anchor="end" font-family="Liberation Sans" font-size="11" letter-spacing="-0.3">3004</text><text x="54" y="100" text-anchor="end" font-family="Liberation Sans" font-size="11" letter-spacing="-0.3">1502</text><text x="54" y="128" text-anchor="end" font-family="Liberation Sans" font-size="11" letter-spacing="-0.3">0</text><text x="65.5" y="144" text-anchor="middle" font-family="Liberation Sans" font-size="11" letter-spacing="-0.3">2.3e-005</text><rect x="137" y="126" width="1" height="5" fill="#000"/><text x="137.4000000000001" y="144" text-anchor="middle" font-family="Liberation Sans" font-size="11" letter-spacing="-0.3">0.1</text><rect x="209" y="126" width="1" height="5" fill="#000"/><text x="209.29999999999995" y="144" text-anchor="middle" font-family="Liberation Sans" font-size="11" letter-spacing="-0.3">0.2</text><rect x="281" y="126" width="1" height="5" fill="#000"/><text x="281.20000000000005" y="144" text-anchor="middle" font-family="Liberation Sans" font-size="11" letter-spacing="-0.3">0.3</text><rect x="353" y="126" width="1" height="5" fill="#000"/><text x="353.0999999999999" y="144" text-anchor="middle" font-family="Liberation Sans" font-size="11" letter-spacing="-0.3">0.4</text><rect x="425" y="126" width="1" height="5" fill="#000"/><text x="425.0" y="144" text-anchor="middle" font-family="Liberation Sans" font-size="11" letter-spacing="-0.3">0.5</text><rect x="497" y="126" width="1" height="5" fill="#000"/><text x="496.9000000000001" y="144" text-anchor="middle" font-family="Liberation Sans" font-size="11" letter-spacing="-0.3">0.6</text><rect x="569" y="126" width="1" height="5" fill="#000"/><text x="568.8000000000002" y="144" text-anchor="middle" font-family="Liberation Sans" font-size="11" letter-spacing="-0.3">0.7</text><rect x="641" y="126" width="1" height="5" fill="#000"/><text x="640.7" y="144" text-anchor="middle" font-family="Liberation Sans" font-size="11" letter-spacing="-0.3">0.8</text><rect x="713" y="126" width="1" height="5" fill="#000"/><text x="712.5999999999999" y="144" text-anchor="middle" font-family="Liberation Sans" font-size="11" letter-spacing="-0.3">0.9</text><rect x="784" y="126" width="1" height="5" fill="#000"/><text x="784.5" y="144" text-anchor="middle" font-family="Liberation Sans" font-size="11" letter-spacing="-0.3">1</text></svg><div style="left:1546px;top:850px;width:382px;height:135px;background:#2b2b2b;border-top:1px solid #3a3a3a;border-left:1px solid #3a3a3a"></div><svg style="left:1850px;top:862px" width="49" height="49"><rect x="0" y="0" width="62" height="56" rx="12" fill="#323232"/><path d="M15 13L42 27L15 41Z" fill="#2a2a2a"/><path d="M20 35L45 20" stroke="#3a3a3a" stroke-width="2"/></svg><div style="left:1899px;top:851px;width:29px;height:60px;background:#4b4b57"></div><div style="left:1547px;top:911px;width:381px;height:1px;background:#4a4a4a"></div><svg style="left:1546px;top:850px" width="382" height="135"><path d="M14 17Q14 16.5 15 16.5H24.5L28 21H43Q44 21 44 22V44Q44 45 43 45H15Q14 45 14 44Z" fill="#f4845f"/><path d="M22 33H35M31 29L35.5 33L31 37" stroke="#2b2b2b" stroke-width="1.8" fill="none"/><path transform="translate(57.0 26) scale(1.000)" d="M6 0.5V2M1 3.2H11M3.2 3.5L10 11.5M8.8 3.5L2 11.5" stroke="#e6e6e6" stroke-width="1.15" fill="none"/><path transform="translate(70.0 26) scale(1.000)" d="M3.5 0.5L1 5M2.5 3.2V11.5M5.8 1.5L5 4H11M4.8 7.5H11.5M8.2 0.5V11.5" stroke="#e6e6e6" stroke-width="1.15" fill="none"/><path transform="translate(83.0 26) scale(1.000)" d="M3.5 0.5L1 5M2.5 3.2V11.5M5 3H11M8 0.5L6.5 7.5H11L9 11M4.8 5.3H11.5" stroke="#e6e6e6" stroke-width="1.15" fill="none"/><path transform="translate(96.0 26) scale(1.000)" d="M1 2H5M3 0.5V11.5M1 6H5M1 9H5M8.5 0.5L6 3M8.5 0.5L11.5 3M7 4H10M6.5 5V11.5M6.5 5H9V11M10.5 5V11.5" stroke="#e6e6e6" stroke-width="1.15" fill="none"/><path transform="translate(109.0 26) scale(1.000)" d="M6 0.5V1.5M1 4V2H11V4M3 5H9M1 7H11M4.5 7L2 11.5M7.5 7V11H11.5" stroke="#e6e6e6" stroke-width="1.15" fill="none"/><path transform="translate(122.0 26) scale(1.000)" d="M2 2V8L1 11.5M2 4.5H6V9M1 2H11.5M7.5 0.5Q8 8 11.5 11.5M11 5L5 11.5M9.5 0.5L10.5 1.5" stroke="#e6e6e6" stroke-width="1.15" fill="none"/><path d="M177.5 36L184 30L190.5 36" stroke="#f4845f" stroke-width="1.8" fill="none"/><path d="M359 26L365 31L359 36M364 26L370 31L364 36" stroke="#d07850" stroke-width="1.3" fill="none"/><path transform="translate(12.0 76) scale(0.917)" d="M1.5 1H10.5V6H2M2 3V10.5Q2 11.5 4 11.5H11.5V9.5" stroke="#f4845f" stroke-width="1.31" fill="none"/><path transform="translate(23.5 76) scale(0.917)" d="M2.5 1L1.5 3M1 4H11M5 0.5Q5 8 1 11.5M5 5H10L5 11.5M6 8L11 11.5M8 1L9.5 2.5" stroke="#f4845f" stroke-width="1.31" fill="none"/><path transform="translate(35.0 76) scale(0.917)" d="M1 1L2 2.5M1 5H3V10L1.5 11.5H11.5M5 1L6 2.5M10 1L9 2.5M4.5 3.5H11M5 6H10.5M7.5 3.5V6Q7 9 4.5 10M8 7.5L10.5 9.5" stroke="#f4845f" stroke-width="1.31" fill="none"/><text x="46.5" y="86" font-family="Liberation Sans" font-size="12" fill="#f4845f">"</text><text x="51.0" y="86" font-family="Liberation Sans" font-size="12" fill="#f4845f">"</text><path transform="translate(55.5 76) scale(0.917)" d="M2.5 0.5L1.5 2M1.5 2.5H5.5V11H1.5V2.5M1.5 6.5H5.5M7.5 0.5L6.5 3M7 3H11V10Q11 11.5 9.5 11.5M8 5.5L9 7.5" stroke="#f4845f" stroke-width="1.31" fill="none"/><text x="67.0" y="86" font-family="Liberation Sans" font-size="12" fill="#f4845f">1</text><path transform="translate(74.0 76) scale(0.917)" d="M6 0.5L1 5.5M6 0.5L11 5.5M6 5V11.5" stroke="#f4845f" stroke-width="1.31" fill="none"/><path transform="translate(85.5 76) scale(0.917)" d="M6 0.5V2M1 3.2H11M3.2 3.5L10 11.5M8.8 3.5L2 11.5" stroke="#f4845f" stroke-width="1.31" fill="none"/><path transform="translate(97.0 76) scale(0.917)" d="M3.5 0.5L1 5M2.5 3.2V11.5M5.8 1.5L5 4H11M4.8 7.5H11.5M8.2 0.5V11.5" stroke="#f4845f" stroke-width="1.31" fill="none"/><path transform="translate(12.0 101) scale(0.917)" d="M1.5 1H10.5V6H2M2 3V10.5Q2 11.5 4 11.5H11.5V9.5" stroke="#4e4e4e" stroke-width="1.09" fill="none"/><path transform="translate(23.5 101) scale(0.917)" d="M2.5 1L1.5 3M1 4H11M5 0.5Q5 8 1 11.5M5 5H10L5 11.5M6 8L11 11.5M8 1L9.5 2.5" stroke="#4e4e4e" stroke-width="1.09" fill="none"/><path transform="translate(35.0 101) scale(0.917)" d="M1 1L2 2.5M1 5H3V10L1.5 11.5H11.5M5 1L6 2.5M10 1L9 2.5M4.5 3.5H11M5 6H10.5M7.5 3.5V6Q7 9 4.5 10M8 7.5L10.5 9.5" stroke="#4e4e4e" stroke-width="1.09" fill="none"/><text x="46.5" y="111" font-family="Liberation Sans" font-size="12" fill="#4e4e4e">"</text><text x="51.0" y="111" font-family="Liberation Sans" font-size="12" fill="#4e4e4e">"</text><text x="55.5" y="111" font-family="Liberation Sans" font-size="12" fill="#4e4e4e">:</text><text x="59.5" y="111" font-family="Liberation Sans" font-size="12" fill="#4e4e4e"> </text><path transform="translate(63.0 101) scale(0.917)" d="M1 1.5H11M6.5 1.5Q5 6 1 9M6 5V11.5M7.5 5.5L10.5 8.5" stroke="#4e4e4e" stroke-width="1.09" fill="none"/><path transform="translate(74.5 101) scale(0.917)" d="M2 3H10V8H2ZM6 0.5V11.5" stroke="#4e4e4e" stroke-width="1.09" fill="none"/><path transform="translate(86.0 101) scale(0.917)" d="M6 0.5V1.5M1 4V2H11V4M4.5 4L3 6M7.5 4L9 6M2.5 7.5H9.5M6 7.5V11M1 11.5H11" stroke="#4e4e4e" stroke-width="1.09" fill="none"/><text x="97.5" y="111" font-family="Liberation Sans" font-size="12" fill="#4e4e4e">.</text><text x="101.0" y="111" font-family="Liberation Sans" font-size="12" fill="#4e4e4e">p</text><text x="108.0" y="111" font-family="Liberation Sans" font-size="12" fill="#4e4e4e">n</text><text x="115.0" y="111" font-family="Liberation Sans" font-size="12" fill="#4e4e4e">g</text></svg><div style="left:1866px;top:985px;width:62px;height:63px;background:#1c1c24"></div><div style="left:1911px;top:985px;width:17px;height:63px;background:#4b4b57"></div><svg style="left:1866px;top:985px" width="62" height="63"><rect x="9" y="17" width="30" height="30" rx="7" fill="#303038"/><path d="M16 25L33 32L16 39Z" fill="#1c1c24"/><circle cx="53" cy="26" r="1.6" fill="#d07850"/><circle cx="53" cy="31" r="1.6" fill="#d07850"/><circle cx="53" cy="36" r="1.6" fill="#d07850"/></svg><div style="left:0px;top:1048px;width:1936px;height:8px;background:#000"></div><div style="left:56px;top:1048px;width:344px;height:8px;background:#e8e8e8"></div><div style="left:695px;top:1048px;width:44px;height:8px;background:#333"></div><span class="t" style="left:1822px;top:1051px;color:#fff;font-size:12px;line-height:14px">11:04</span></body></html>
